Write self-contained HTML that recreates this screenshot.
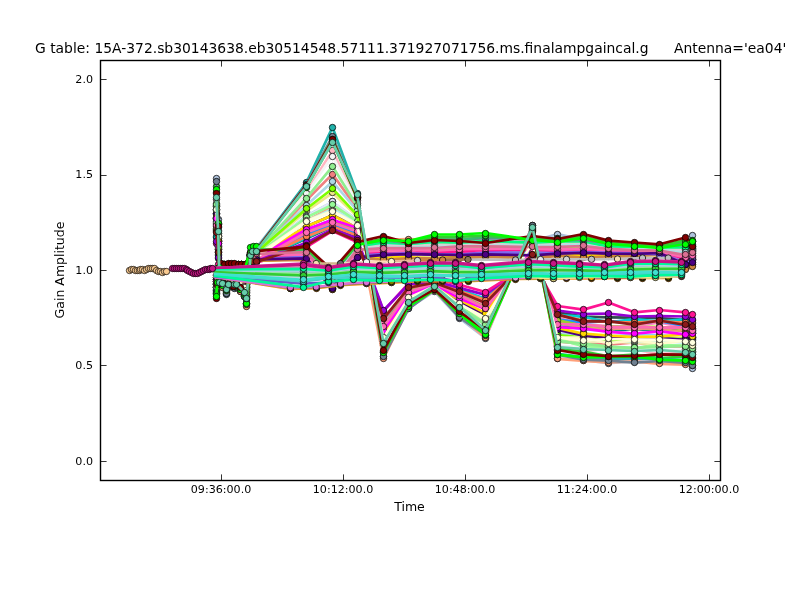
<!DOCTYPE html>
<html><head><meta charset="utf-8"><title>G table plot</title>
<style>html,body{margin:0;padding:0;background:#fff;}body{width:800px;height:600px;overflow:hidden;}svg{display:block;will-change:transform;}text{font-family:"DejaVu Sans","Liberation Sans",sans-serif;fill:#000;}</style>
</head><body>
<svg width="800" height="600" viewBox="0 0 800 600">
<rect x="0" y="0" width="800" height="600" fill="#ffffff"/>
<defs><clipPath id="axclip"><rect x="100.5" y="60.5" width="620" height="420"/></clipPath></defs>
<g clip-path="url(#axclip)">
<path d="M216.3 243.7 L218.2 264.2 L219.6 278.0 L222.7 272.0 L226.7 271.2 L228.9 271.2 L233.7 271.7 L236.3 272.2 L240.4 272.2 L244.8 271.6 L246.5 272.7 L250.6 261.1 L252.5 261.2 L256.5 262.7 L306.4 247.2 L332.5 230.9 L357.0 242.0 L383.5 311.1 L408.5 283.5 L434.4 279.1" stroke="#ff1493" stroke-width="2.7" fill="none" stroke-linejoin="round"/><g fill="#ff1493" stroke="#000" stroke-width="0.75"><circle cx="216.5" cy="243.5" r="3.2"/><circle cx="218.5" cy="264.5" r="3.2"/><circle cx="219.5" cy="277.5" r="3.2"/><circle cx="222.5" cy="271.5" r="3.2"/><circle cx="226.5" cy="271.5" r="3.2"/><circle cx="228.5" cy="271.5" r="3.2"/><circle cx="233.5" cy="271.5" r="3.2"/><circle cx="236.5" cy="272.5" r="3.2"/><circle cx="240.5" cy="272.5" r="3.2"/><circle cx="244.5" cy="271.5" r="3.2"/><circle cx="246.5" cy="272.5" r="3.2"/><circle cx="250.5" cy="261.5" r="3.2"/><circle cx="252.5" cy="261.5" r="3.2"/><circle cx="256.5" cy="262.5" r="3.2"/><circle cx="306.5" cy="247.5" r="3.2"/><circle cx="332.5" cy="230.5" r="3.2"/><circle cx="357.5" cy="242.5" r="3.2"/><circle cx="383.5" cy="311.5" r="3.2"/><circle cx="408.5" cy="283.5" r="3.2"/><circle cx="434.5" cy="279.5" r="3.2"/></g><path d="M216.3 199.7 L218.2 233.8 L219.6 280.4 L222.7 282.2 L226.5 288.4 L228.7 282.6 L233.8 283.5 L236.4 282.1 L240.2 287.7 L244.2 292.3 L246.4 297.3 L250.6 255.6 L252.5 249.8 L256.5 249.9 L306.4 191.8 L332.5 150.6 L357.0 200.6 L383.5 345.8 L408.5 302.6 L434.4 289.0 L459.4 308.1 L485.5 329.3 L532.5 236.0 L557.6 346.5 L583.4 350.8 L608.5 348.7 L634.4 349.3 L659.4 354.0 L685.5 352.5 L692.4 354.4" stroke="#ffb6c1" stroke-width="2.7" fill="none" stroke-linejoin="round"/><g fill="#ffb6c1" stroke="#000" stroke-width="0.75"><circle cx="216.5" cy="199.5" r="3.2"/><circle cx="218.5" cy="233.5" r="3.2"/><circle cx="219.5" cy="280.5" r="3.2"/><circle cx="222.5" cy="282.5" r="3.2"/><circle cx="226.5" cy="288.5" r="3.2"/><circle cx="228.5" cy="282.5" r="3.2"/><circle cx="233.5" cy="283.5" r="3.2"/><circle cx="236.5" cy="282.5" r="3.2"/><circle cx="240.5" cy="287.5" r="3.2"/><circle cx="244.5" cy="292.5" r="3.2"/><circle cx="246.5" cy="297.5" r="3.2"/><circle cx="250.5" cy="255.5" r="3.2"/><circle cx="252.5" cy="249.5" r="3.2"/><circle cx="256.5" cy="249.5" r="3.2"/><circle cx="306.5" cy="191.5" r="3.2"/><circle cx="332.5" cy="150.5" r="3.2"/><circle cx="357.5" cy="200.5" r="3.2"/><circle cx="383.5" cy="345.5" r="3.2"/><circle cx="408.5" cy="302.5" r="3.2"/><circle cx="434.5" cy="289.5" r="3.2"/><circle cx="459.5" cy="308.5" r="3.2"/><circle cx="485.5" cy="329.5" r="3.2"/><circle cx="532.5" cy="236.5" r="3.2"/><circle cx="557.5" cy="346.5" r="3.2"/><circle cx="583.5" cy="350.5" r="3.2"/><circle cx="608.5" cy="348.5" r="3.2"/><circle cx="634.5" cy="349.5" r="3.2"/><circle cx="659.5" cy="354.5" r="3.2"/><circle cx="685.5" cy="352.5" r="3.2"/><circle cx="692.5" cy="354.5" r="3.2"/></g><path d="M216.3 186.0 L218.2 224.5 L219.6 281.5 L222.1 283.8 L226.7 291.1 L228.3 284.7 L234.1 284.7 L236.4 283.6 L240.2 288.7 L244.9 294.4 L246.3 299.6 L250.6 255.0 L252.5 249.5 L256.5 248.3 L306.4 187.4 L332.5 141.8 L357.0 197.4 L383.5 351.5 L408.5 305.5 L434.4 289.5 L459.4 312.8 L485.5 332.3 L532.5 229.1 L557.6 349.0 L583.4 351.6 L608.5 356.3 L634.4 354.7 L659.4 358.2 L685.5 356.7 L692.4 358.9" stroke="#32cd32" stroke-width="2.7" fill="none" stroke-linejoin="round"/><g fill="#32cd32" stroke="#000" stroke-width="0.75"><circle cx="216.5" cy="186.5" r="3.2"/><circle cx="218.5" cy="224.5" r="3.2"/><circle cx="219.5" cy="281.5" r="3.2"/><circle cx="222.5" cy="283.5" r="3.2"/><circle cx="226.5" cy="291.5" r="3.2"/><circle cx="228.5" cy="284.5" r="3.2"/><circle cx="234.5" cy="284.5" r="3.2"/><circle cx="236.5" cy="283.5" r="3.2"/><circle cx="240.5" cy="288.5" r="3.2"/><circle cx="244.5" cy="294.5" r="3.2"/><circle cx="246.5" cy="299.5" r="3.2"/><circle cx="250.5" cy="255.5" r="3.2"/><circle cx="252.5" cy="249.5" r="3.2"/><circle cx="256.5" cy="248.5" r="3.2"/><circle cx="306.5" cy="187.5" r="3.2"/><circle cx="332.5" cy="141.5" r="3.2"/><circle cx="357.5" cy="197.5" r="3.2"/><circle cx="383.5" cy="351.5" r="3.2"/><circle cx="408.5" cy="305.5" r="3.2"/><circle cx="434.5" cy="289.5" r="3.2"/><circle cx="459.5" cy="312.5" r="3.2"/><circle cx="485.5" cy="332.5" r="3.2"/><circle cx="532.5" cy="229.5" r="3.2"/><circle cx="557.5" cy="349.5" r="3.2"/><circle cx="583.5" cy="351.5" r="3.2"/><circle cx="608.5" cy="356.5" r="3.2"/><circle cx="634.5" cy="354.5" r="3.2"/><circle cx="659.5" cy="358.5" r="3.2"/><circle cx="685.5" cy="356.5" r="3.2"/><circle cx="692.5" cy="358.5" r="3.2"/></g><path d="M216.3 217.9 L218.2 241.5 L219.6 280.2 L222.9 280.3 L226.4 281.9 L228.7 280.1 L233.8 278.7 L236.7 280.9 L240.4 280.3 L244.2 284.3 L246.4 288.2 L250.6 259.1 L252.5 253.7 L256.5 253.3 L306.4 211.2 L332.5 192.9 L357.0 216.4 L383.5 334.3 L408.5 297.8 L434.4 285.5 L459.4 302.9 L485.5 315.6 L532.5 243.1 L557.6 331.6 L583.4 333.1 L608.5 338.0 L634.4 335.7 L659.4 335.4 L685.5 337.6 L692.4 338.8" stroke="#f0e68c" stroke-width="2.7" fill="none" stroke-linejoin="round"/><g fill="#f0e68c" stroke="#000" stroke-width="0.75"><circle cx="216.5" cy="217.5" r="3.2"/><circle cx="218.5" cy="241.5" r="3.2"/><circle cx="219.5" cy="280.5" r="3.2"/><circle cx="222.5" cy="280.5" r="3.2"/><circle cx="226.5" cy="281.5" r="3.2"/><circle cx="228.5" cy="280.5" r="3.2"/><circle cx="233.5" cy="278.5" r="3.2"/><circle cx="236.5" cy="280.5" r="3.2"/><circle cx="240.5" cy="280.5" r="3.2"/><circle cx="244.5" cy="284.5" r="3.2"/><circle cx="246.5" cy="288.5" r="3.2"/><circle cx="250.5" cy="259.5" r="3.2"/><circle cx="252.5" cy="253.5" r="3.2"/><circle cx="256.5" cy="253.5" r="3.2"/><circle cx="306.5" cy="211.5" r="3.2"/><circle cx="332.5" cy="192.5" r="3.2"/><circle cx="357.5" cy="216.5" r="3.2"/><circle cx="383.5" cy="334.5" r="3.2"/><circle cx="408.5" cy="297.5" r="3.2"/><circle cx="434.5" cy="285.5" r="3.2"/><circle cx="459.5" cy="302.5" r="3.2"/><circle cx="485.5" cy="315.5" r="3.2"/><circle cx="532.5" cy="243.5" r="3.2"/><circle cx="557.5" cy="331.5" r="3.2"/><circle cx="583.5" cy="333.5" r="3.2"/><circle cx="608.5" cy="337.5" r="3.2"/><circle cx="634.5" cy="335.5" r="3.2"/><circle cx="659.5" cy="335.5" r="3.2"/><circle cx="685.5" cy="337.5" r="3.2"/><circle cx="692.5" cy="338.5" r="3.2"/></g><path d="M216.3 178.2 L218.2 219.4 L219.6 283.8 L222.1 285.4 L226.6 294.9 L229.0 285.9 L233.7 287.1 L236.2 286.9 L240.9 291.8 L244.6 296.1 L246.5 303.5 L250.6 254.1 L252.5 248.3 L256.5 247.6 L306.4 184.9 L332.5 137.3 L357.0 196.8 L383.5 356.6 L408.5 308.0 L434.4 291.3 L459.4 318.1 L485.5 338.2 L532.5 225.9 L557.6 358.2 L583.4 360.1 L608.5 363.1 L634.4 361.5 L659.4 361.9 L685.5 361.7 L692.4 368.2" stroke="#b0c4de" stroke-width="2.7" fill="none" stroke-linejoin="round"/><g fill="#b0c4de" stroke="#000" stroke-width="0.75"><circle cx="216.5" cy="178.5" r="3.2"/><circle cx="218.5" cy="219.5" r="3.2"/><circle cx="219.5" cy="283.5" r="3.2"/><circle cx="222.5" cy="285.5" r="3.2"/><circle cx="226.5" cy="294.5" r="3.2"/><circle cx="228.5" cy="285.5" r="3.2"/><circle cx="233.5" cy="287.5" r="3.2"/><circle cx="236.5" cy="286.5" r="3.2"/><circle cx="240.5" cy="291.5" r="3.2"/><circle cx="244.5" cy="296.5" r="3.2"/><circle cx="246.5" cy="303.5" r="3.2"/><circle cx="250.5" cy="254.5" r="3.2"/><circle cx="252.5" cy="248.5" r="3.2"/><circle cx="256.5" cy="247.5" r="3.2"/><circle cx="306.5" cy="184.5" r="3.2"/><circle cx="332.5" cy="137.5" r="3.2"/><circle cx="357.5" cy="196.5" r="3.2"/><circle cx="383.5" cy="356.5" r="3.2"/><circle cx="408.5" cy="308.5" r="3.2"/><circle cx="434.5" cy="291.5" r="3.2"/><circle cx="459.5" cy="318.5" r="3.2"/><circle cx="485.5" cy="338.5" r="3.2"/><circle cx="532.5" cy="225.5" r="3.2"/><circle cx="557.5" cy="358.5" r="3.2"/><circle cx="583.5" cy="360.5" r="3.2"/><circle cx="608.5" cy="363.5" r="3.2"/><circle cx="634.5" cy="361.5" r="3.2"/><circle cx="659.5" cy="361.5" r="3.2"/><circle cx="685.5" cy="361.5" r="3.2"/><circle cx="692.5" cy="368.5" r="3.2"/></g><path d="M216.3 221.2 L218.2 249.3 L219.6 279.5 L222.8 276.9 L226.1 279.4 L228.6 277.7 L233.9 278.4 L236.5 278.7 L240.4 278.0 L244.7 280.4 L246.6 284.8 L250.6 259.2 L252.5 258.0 L256.5 257.8 L306.4 231.5 L332.5 219.7 L357.0 228.9 L383.5 326.6 L408.5 294.0 L434.4 282.9 L459.4 295.0 L485.5 310.8 L532.5 250.2 L557.6 322.8 L583.4 327.6 L608.5 331.8 L634.4 331.7 L659.4 328.9 L685.5 330.8 L692.4 333.6" stroke="#cd5c5c" stroke-width="2.7" fill="none" stroke-linejoin="round"/><g fill="#cd5c5c" stroke="#000" stroke-width="0.75"><circle cx="216.5" cy="221.5" r="3.2"/><circle cx="218.5" cy="249.5" r="3.2"/><circle cx="219.5" cy="279.5" r="3.2"/><circle cx="222.5" cy="276.5" r="3.2"/><circle cx="226.5" cy="279.5" r="3.2"/><circle cx="228.5" cy="277.5" r="3.2"/><circle cx="233.5" cy="278.5" r="3.2"/><circle cx="236.5" cy="278.5" r="3.2"/><circle cx="240.5" cy="277.5" r="3.2"/><circle cx="244.5" cy="280.5" r="3.2"/><circle cx="246.5" cy="284.5" r="3.2"/><circle cx="250.5" cy="259.5" r="3.2"/><circle cx="252.5" cy="257.5" r="3.2"/><circle cx="256.5" cy="257.5" r="3.2"/><circle cx="306.5" cy="231.5" r="3.2"/><circle cx="332.5" cy="219.5" r="3.2"/><circle cx="357.5" cy="228.5" r="3.2"/><circle cx="383.5" cy="326.5" r="3.2"/><circle cx="408.5" cy="293.5" r="3.2"/><circle cx="434.5" cy="282.5" r="3.2"/><circle cx="459.5" cy="294.5" r="3.2"/><circle cx="485.5" cy="310.5" r="3.2"/><circle cx="532.5" cy="250.5" r="3.2"/><circle cx="557.5" cy="322.5" r="3.2"/><circle cx="583.5" cy="327.5" r="3.2"/><circle cx="608.5" cy="331.5" r="3.2"/><circle cx="634.5" cy="331.5" r="3.2"/><circle cx="659.5" cy="328.5" r="3.2"/><circle cx="685.5" cy="330.5" r="3.2"/><circle cx="692.5" cy="333.5" r="3.2"/></g><path d="M216.0 287.9 L217.5 280.9 L219.2 268.2 L221.5 265.7 L224.8 266.3 L228.1 265.6 L231.4 266.0 L234.7 266.1 L238.0 265.6 L241.5 265.7 L245.0 266.1 L250.6 256.4 L253.5 254.3 L256.3 253.1 L306.4 251.1 L332.5 279.5 L357.0 248.2 L383.5 246.8 L408.5 247.7 L434.4 246.2 L459.4 243.9 L485.5 242.8 L532.5 244.7 L557.6 244.8 L583.4 243.6 L608.5 246.5 L634.4 247.4 L659.4 249.8 L685.5 250.3 L692.4 249.5" stroke="#e6e6fa" stroke-width="2.7" fill="none" stroke-linejoin="round"/><g fill="#e6e6fa" stroke="#000" stroke-width="0.75"><circle cx="216.5" cy="287.5" r="3.2"/><circle cx="217.5" cy="280.5" r="3.2"/><circle cx="219.5" cy="268.5" r="3.2"/><circle cx="221.5" cy="265.5" r="3.2"/><circle cx="224.5" cy="266.5" r="3.2"/><circle cx="228.5" cy="265.5" r="3.2"/><circle cx="231.5" cy="266.5" r="3.2"/><circle cx="234.5" cy="266.5" r="3.2"/><circle cx="238.5" cy="265.5" r="3.2"/><circle cx="241.5" cy="265.5" r="3.2"/><circle cx="245.5" cy="266.5" r="3.2"/><circle cx="250.5" cy="256.5" r="3.2"/><circle cx="253.5" cy="254.5" r="3.2"/><circle cx="256.5" cy="253.5" r="3.2"/><circle cx="306.5" cy="251.5" r="3.2"/><circle cx="332.5" cy="279.5" r="3.2"/><circle cx="357.5" cy="248.5" r="3.2"/><circle cx="383.5" cy="246.5" r="3.2"/><circle cx="408.5" cy="247.5" r="3.2"/><circle cx="434.5" cy="246.5" r="3.2"/><circle cx="459.5" cy="243.5" r="3.2"/><circle cx="485.5" cy="242.5" r="3.2"/><circle cx="532.5" cy="244.5" r="3.2"/><circle cx="557.5" cy="244.5" r="3.2"/><circle cx="583.5" cy="243.5" r="3.2"/><circle cx="608.5" cy="246.5" r="3.2"/><circle cx="634.5" cy="247.5" r="3.2"/><circle cx="659.5" cy="249.5" r="3.2"/><circle cx="685.5" cy="250.5" r="3.2"/><circle cx="692.5" cy="249.5" r="3.2"/></g><path d="M216.3 226.7 L218.2 249.0 L219.6 276.8 L222.7 275.7 L226.8 279.3 L229.0 277.0 L234.3 276.1 L236.3 277.5 L240.8 277.9 L244.6 280.1 L246.7 282.0 L250.6 258.7 L252.5 259.2 L256.5 259.3 L306.4 231.7 L332.5 222.3 L357.0 230.2 L383.5 325.1 L408.5 293.5 L434.4 282.7 L459.4 296.8 L485.5 308.6 L532.5 251.7 L557.6 321.3 L583.4 325.0 L608.5 327.6 L634.4 326.7 L659.4 326.9 L685.5 331.5 L692.4 333.3" stroke="#adff2f" stroke-width="2.7" fill="none" stroke-linejoin="round"/><g fill="#adff2f" stroke="#000" stroke-width="0.75"><circle cx="216.5" cy="226.5" r="3.2"/><circle cx="218.5" cy="249.5" r="3.2"/><circle cx="219.5" cy="276.5" r="3.2"/><circle cx="222.5" cy="275.5" r="3.2"/><circle cx="226.5" cy="279.5" r="3.2"/><circle cx="228.5" cy="276.5" r="3.2"/><circle cx="234.5" cy="276.5" r="3.2"/><circle cx="236.5" cy="277.5" r="3.2"/><circle cx="240.5" cy="277.5" r="3.2"/><circle cx="244.5" cy="280.5" r="3.2"/><circle cx="246.5" cy="281.5" r="3.2"/><circle cx="250.5" cy="258.5" r="3.2"/><circle cx="252.5" cy="259.5" r="3.2"/><circle cx="256.5" cy="259.5" r="3.2"/><circle cx="306.5" cy="231.5" r="3.2"/><circle cx="332.5" cy="222.5" r="3.2"/><circle cx="357.5" cy="230.5" r="3.2"/><circle cx="383.5" cy="325.5" r="3.2"/><circle cx="408.5" cy="293.5" r="3.2"/><circle cx="434.5" cy="282.5" r="3.2"/><circle cx="459.5" cy="296.5" r="3.2"/><circle cx="485.5" cy="308.5" r="3.2"/><circle cx="532.5" cy="251.5" r="3.2"/><circle cx="557.5" cy="321.5" r="3.2"/><circle cx="583.5" cy="325.5" r="3.2"/><circle cx="608.5" cy="327.5" r="3.2"/><circle cx="634.5" cy="326.5" r="3.2"/><circle cx="659.5" cy="326.5" r="3.2"/><circle cx="685.5" cy="331.5" r="3.2"/><circle cx="692.5" cy="333.5" r="3.2"/></g><path d="M216.0 287.7 L217.5 281.2 L219.2 267.0 L221.5 265.6 L224.8 265.1 L228.1 265.4 L231.4 265.5 L234.7 265.4 L238.0 266.1 L241.5 265.3 L245.0 266.1 L250.6 255.4 L253.5 251.6 L256.3 252.5 L306.4 251.5 L332.5 278.6 L357.0 247.6 L383.5 245.8 L408.5 246.8 L434.4 243.5 L459.4 243.7 L485.5 242.0 L532.5 244.2 L557.6 243.3 L583.4 242.9 L608.5 247.1 L634.4 247.2 L659.4 248.5 L685.5 249.7 L692.4 247.3" stroke="#ffdab9" stroke-width="2.7" fill="none" stroke-linejoin="round"/><g fill="#ffdab9" stroke="#000" stroke-width="0.75"><circle cx="216.5" cy="287.5" r="3.2"/><circle cx="217.5" cy="281.5" r="3.2"/><circle cx="219.5" cy="267.5" r="3.2"/><circle cx="221.5" cy="265.5" r="3.2"/><circle cx="224.5" cy="265.5" r="3.2"/><circle cx="228.5" cy="265.5" r="3.2"/><circle cx="231.5" cy="265.5" r="3.2"/><circle cx="234.5" cy="265.5" r="3.2"/><circle cx="238.5" cy="266.5" r="3.2"/><circle cx="241.5" cy="265.5" r="3.2"/><circle cx="245.5" cy="266.5" r="3.2"/><circle cx="250.5" cy="255.5" r="3.2"/><circle cx="253.5" cy="251.5" r="3.2"/><circle cx="256.5" cy="252.5" r="3.2"/><circle cx="306.5" cy="251.5" r="3.2"/><circle cx="332.5" cy="278.5" r="3.2"/><circle cx="357.5" cy="247.5" r="3.2"/><circle cx="383.5" cy="245.5" r="3.2"/><circle cx="408.5" cy="246.5" r="3.2"/><circle cx="434.5" cy="243.5" r="3.2"/><circle cx="459.5" cy="243.5" r="3.2"/><circle cx="485.5" cy="242.5" r="3.2"/><circle cx="532.5" cy="244.5" r="3.2"/><circle cx="557.5" cy="243.5" r="3.2"/><circle cx="583.5" cy="242.5" r="3.2"/><circle cx="608.5" cy="247.5" r="3.2"/><circle cx="634.5" cy="247.5" r="3.2"/><circle cx="659.5" cy="248.5" r="3.2"/><circle cx="685.5" cy="249.5" r="3.2"/><circle cx="692.5" cy="247.5" r="3.2"/></g><path d="M216.3 219.9 L218.2 246.5 L219.6 280.7 L222.6 276.6 L226.7 281.8 L228.4 278.2 L234.0 277.0 L236.5 277.2 L240.2 279.0 L244.5 280.5 L246.0 285.0 L250.6 261.2 L252.5 258.7 L256.5 259.8 L306.4 228.4 L332.5 218.2 L357.0 228.1 L383.5 330.6 L408.5 293.4 L434.4 284.9 L459.4 298.5 L485.5 309.7 L532.5 247.0 L557.6 326.2 L583.4 328.5 L608.5 333.2 L634.4 333.7 L659.4 333.2 L685.5 332.4 L692.4 332.4" stroke="#00ff7f" stroke-width="2.7" fill="none" stroke-linejoin="round"/><g fill="#00ff7f" stroke="#000" stroke-width="0.75"><circle cx="216.5" cy="219.5" r="3.2"/><circle cx="218.5" cy="246.5" r="3.2"/><circle cx="219.5" cy="280.5" r="3.2"/><circle cx="222.5" cy="276.5" r="3.2"/><circle cx="226.5" cy="281.5" r="3.2"/><circle cx="228.5" cy="278.5" r="3.2"/><circle cx="234.5" cy="277.5" r="3.2"/><circle cx="236.5" cy="277.5" r="3.2"/><circle cx="240.5" cy="279.5" r="3.2"/><circle cx="244.5" cy="280.5" r="3.2"/><circle cx="246.5" cy="284.5" r="3.2"/><circle cx="250.5" cy="261.5" r="3.2"/><circle cx="252.5" cy="258.5" r="3.2"/><circle cx="256.5" cy="259.5" r="3.2"/><circle cx="306.5" cy="228.5" r="3.2"/><circle cx="332.5" cy="218.5" r="3.2"/><circle cx="357.5" cy="228.5" r="3.2"/><circle cx="383.5" cy="330.5" r="3.2"/><circle cx="408.5" cy="293.5" r="3.2"/><circle cx="434.5" cy="284.5" r="3.2"/><circle cx="459.5" cy="298.5" r="3.2"/><circle cx="485.5" cy="309.5" r="3.2"/><circle cx="532.5" cy="247.5" r="3.2"/><circle cx="557.5" cy="326.5" r="3.2"/><circle cx="583.5" cy="328.5" r="3.2"/><circle cx="608.5" cy="333.5" r="3.2"/><circle cx="634.5" cy="333.5" r="3.2"/><circle cx="659.5" cy="333.5" r="3.2"/><circle cx="685.5" cy="332.5" r="3.2"/><circle cx="692.5" cy="332.5" r="3.2"/></g><path d="M216.0 281.6 L217.5 275.1 L219.2 267.5 L221.5 267.0 L224.8 267.4 L228.1 266.2 L231.4 266.4 L234.7 266.2 L238.0 266.5 L241.5 267.1 L245.0 266.5 L250.6 258.2 L253.5 256.7 L256.3 256.5 L306.4 255.5 L332.5 283.3 L357.0 253.0 L383.5 251.4 L408.5 251.7 L434.4 248.9 L459.4 250.0 L485.5 249.6 L532.5 249.5 L557.6 249.0 L583.4 249.4 L608.5 250.8 L634.4 250.2 L659.4 250.8 L685.5 257.6 L692.4 255.4" stroke="#ffe4e1" stroke-width="2.7" fill="none" stroke-linejoin="round"/><g fill="#ffe4e1" stroke="#000" stroke-width="0.75"><circle cx="216.5" cy="281.5" r="3.2"/><circle cx="217.5" cy="275.5" r="3.2"/><circle cx="219.5" cy="267.5" r="3.2"/><circle cx="221.5" cy="267.5" r="3.2"/><circle cx="224.5" cy="267.5" r="3.2"/><circle cx="228.5" cy="266.5" r="3.2"/><circle cx="231.5" cy="266.5" r="3.2"/><circle cx="234.5" cy="266.5" r="3.2"/><circle cx="238.5" cy="266.5" r="3.2"/><circle cx="241.5" cy="267.5" r="3.2"/><circle cx="245.5" cy="266.5" r="3.2"/><circle cx="250.5" cy="258.5" r="3.2"/><circle cx="253.5" cy="256.5" r="3.2"/><circle cx="256.5" cy="256.5" r="3.2"/><circle cx="306.5" cy="255.5" r="3.2"/><circle cx="332.5" cy="283.5" r="3.2"/><circle cx="357.5" cy="252.5" r="3.2"/><circle cx="383.5" cy="251.5" r="3.2"/><circle cx="408.5" cy="251.5" r="3.2"/><circle cx="434.5" cy="248.5" r="3.2"/><circle cx="459.5" cy="250.5" r="3.2"/><circle cx="485.5" cy="249.5" r="3.2"/><circle cx="532.5" cy="249.5" r="3.2"/><circle cx="557.5" cy="249.5" r="3.2"/><circle cx="583.5" cy="249.5" r="3.2"/><circle cx="608.5" cy="250.5" r="3.2"/><circle cx="634.5" cy="250.5" r="3.2"/><circle cx="659.5" cy="250.5" r="3.2"/><circle cx="685.5" cy="257.5" r="3.2"/><circle cx="692.5" cy="255.5" r="3.2"/></g><path d="M216.3 205.7 L218.2 238.5 L219.6 281.7 L222.2 280.5 L226.7 286.4 L228.8 280.8 L233.7 281.2 L236.2 282.9 L240.4 283.0 L245.0 288.4 L246.6 293.6 L250.6 255.5 L252.5 253.3 L256.5 253.1 L306.4 200.3 L332.5 174.1 L357.0 208.2 L383.5 342.2 L408.5 299.5 L434.4 287.2 L459.4 306.4 L485.5 321.5 L532.5 240.5 L557.6 341.4 L583.4 343.8 L608.5 344.7 L634.4 342.5 L659.4 346.4 L685.5 346.3 L692.4 349.8" stroke="#f08080" stroke-width="2.7" fill="none" stroke-linejoin="round"/><g fill="#f08080" stroke="#000" stroke-width="0.75"><circle cx="216.5" cy="205.5" r="3.2"/><circle cx="218.5" cy="238.5" r="3.2"/><circle cx="219.5" cy="281.5" r="3.2"/><circle cx="222.5" cy="280.5" r="3.2"/><circle cx="226.5" cy="286.5" r="3.2"/><circle cx="228.5" cy="280.5" r="3.2"/><circle cx="233.5" cy="281.5" r="3.2"/><circle cx="236.5" cy="282.5" r="3.2"/><circle cx="240.5" cy="282.5" r="3.2"/><circle cx="244.5" cy="288.5" r="3.2"/><circle cx="246.5" cy="293.5" r="3.2"/><circle cx="250.5" cy="255.5" r="3.2"/><circle cx="252.5" cy="253.5" r="3.2"/><circle cx="256.5" cy="253.5" r="3.2"/><circle cx="306.5" cy="200.5" r="3.2"/><circle cx="332.5" cy="174.5" r="3.2"/><circle cx="357.5" cy="208.5" r="3.2"/><circle cx="383.5" cy="342.5" r="3.2"/><circle cx="408.5" cy="299.5" r="3.2"/><circle cx="434.5" cy="287.5" r="3.2"/><circle cx="459.5" cy="306.5" r="3.2"/><circle cx="485.5" cy="321.5" r="3.2"/><circle cx="532.5" cy="240.5" r="3.2"/><circle cx="557.5" cy="341.5" r="3.2"/><circle cx="583.5" cy="343.5" r="3.2"/><circle cx="608.5" cy="344.5" r="3.2"/><circle cx="634.5" cy="342.5" r="3.2"/><circle cx="659.5" cy="346.5" r="3.2"/><circle cx="685.5" cy="346.5" r="3.2"/><circle cx="692.5" cy="349.5" r="3.2"/></g><path d="M216.0 279.2 L217.5 274.4 L219.2 267.2 L221.5 266.8 L224.8 266.8 L228.1 267.0 L231.4 267.4 L234.7 267.3 L238.0 266.8 L241.5 267.5 L245.0 266.7 L250.6 258.0 L253.5 257.8 L256.3 257.7 L306.4 255.7 L332.5 284.4 L357.0 254.0 L383.5 253.6 L408.5 251.6 L434.4 251.8 L459.4 251.9 L485.5 251.0 L532.5 251.2 L557.6 252.2 L583.4 251.2 L608.5 251.4 L634.4 252.9 L659.4 252.2 L685.5 259.8 L692.4 259.1" stroke="#d8bfd8" stroke-width="2.7" fill="none" stroke-linejoin="round"/><g fill="#d8bfd8" stroke="#000" stroke-width="0.75"><circle cx="216.5" cy="279.5" r="3.2"/><circle cx="217.5" cy="274.5" r="3.2"/><circle cx="219.5" cy="267.5" r="3.2"/><circle cx="221.5" cy="266.5" r="3.2"/><circle cx="224.5" cy="266.5" r="3.2"/><circle cx="228.5" cy="266.5" r="3.2"/><circle cx="231.5" cy="267.5" r="3.2"/><circle cx="234.5" cy="267.5" r="3.2"/><circle cx="238.5" cy="266.5" r="3.2"/><circle cx="241.5" cy="267.5" r="3.2"/><circle cx="245.5" cy="266.5" r="3.2"/><circle cx="250.5" cy="257.5" r="3.2"/><circle cx="253.5" cy="257.5" r="3.2"/><circle cx="256.5" cy="257.5" r="3.2"/><circle cx="306.5" cy="255.5" r="3.2"/><circle cx="332.5" cy="284.5" r="3.2"/><circle cx="357.5" cy="254.5" r="3.2"/><circle cx="383.5" cy="253.5" r="3.2"/><circle cx="408.5" cy="251.5" r="3.2"/><circle cx="434.5" cy="251.5" r="3.2"/><circle cx="459.5" cy="251.5" r="3.2"/><circle cx="485.5" cy="251.5" r="3.2"/><circle cx="532.5" cy="251.5" r="3.2"/><circle cx="557.5" cy="252.5" r="3.2"/><circle cx="583.5" cy="251.5" r="3.2"/><circle cx="608.5" cy="251.5" r="3.2"/><circle cx="634.5" cy="252.5" r="3.2"/><circle cx="659.5" cy="252.5" r="3.2"/><circle cx="685.5" cy="259.5" r="3.2"/><circle cx="692.5" cy="259.5" r="3.2"/></g><path d="M216.3 237.2 L218.2 258.5 L219.6 279.0 L222.3 274.3 L226.3 275.5 L228.4 275.0 L234.2 273.2 L236.8 273.2 L240.4 273.7 L244.5 275.9 L246.1 276.7 L250.6 260.2 L252.5 259.6 L256.5 261.4 L306.4 238.5 L332.5 226.5 L357.0 236.8 L383.5 319.7 L408.5 288.8 L434.4 280.7 L459.4 288.8 L485.5 301.0 L532.5 255.9 L557.6 312.4 L583.4 316.7 L608.5 317.3 L634.4 317.6 L659.4 318.2 L685.5 319.8 L692.4 320.4" stroke="#2f4f4f" stroke-width="2.7" fill="none" stroke-linejoin="round"/><g fill="#2f4f4f" stroke="#000" stroke-width="0.75"><circle cx="216.5" cy="237.5" r="3.2"/><circle cx="218.5" cy="258.5" r="3.2"/><circle cx="219.5" cy="278.5" r="3.2"/><circle cx="222.5" cy="274.5" r="3.2"/><circle cx="226.5" cy="275.5" r="3.2"/><circle cx="228.5" cy="275.5" r="3.2"/><circle cx="234.5" cy="273.5" r="3.2"/><circle cx="236.5" cy="273.5" r="3.2"/><circle cx="240.5" cy="273.5" r="3.2"/><circle cx="244.5" cy="275.5" r="3.2"/><circle cx="246.5" cy="276.5" r="3.2"/><circle cx="250.5" cy="260.5" r="3.2"/><circle cx="252.5" cy="259.5" r="3.2"/><circle cx="256.5" cy="261.5" r="3.2"/><circle cx="306.5" cy="238.5" r="3.2"/><circle cx="332.5" cy="226.5" r="3.2"/><circle cx="357.5" cy="236.5" r="3.2"/><circle cx="383.5" cy="319.5" r="3.2"/><circle cx="408.5" cy="288.5" r="3.2"/><circle cx="434.5" cy="280.5" r="3.2"/><circle cx="459.5" cy="288.5" r="3.2"/><circle cx="485.5" cy="301.5" r="3.2"/><circle cx="532.5" cy="255.5" r="3.2"/><circle cx="557.5" cy="312.5" r="3.2"/><circle cx="583.5" cy="316.5" r="3.2"/><circle cx="608.5" cy="317.5" r="3.2"/><circle cx="634.5" cy="317.5" r="3.2"/><circle cx="659.5" cy="318.5" r="3.2"/><circle cx="685.5" cy="319.5" r="3.2"/><circle cx="692.5" cy="320.5" r="3.2"/></g><path d="M216.0 284.5 L217.5 278.6 L219.2 268.1 L221.5 265.6 L224.8 265.6 L228.1 265.8 L231.4 266.0 L234.7 266.1 L238.0 266.4 L241.5 266.2 L245.0 265.5 L250.6 255.9 L253.5 253.8 L256.3 253.6 L306.4 252.5 L332.5 279.5 L357.0 249.6 L383.5 247.9 L408.5 246.8 L434.4 245.9 L459.4 246.1 L485.5 244.8 L532.5 246.0 L557.6 246.4 L583.4 244.5 L608.5 249.2 L634.4 248.4 L659.4 250.6 L685.5 253.0 L692.4 250.4" stroke="#f5f5f5" stroke-width="2.7" fill="none" stroke-linejoin="round"/><g fill="#f5f5f5" stroke="#000" stroke-width="0.75"><circle cx="216.5" cy="284.5" r="3.2"/><circle cx="217.5" cy="278.5" r="3.2"/><circle cx="219.5" cy="268.5" r="3.2"/><circle cx="221.5" cy="265.5" r="3.2"/><circle cx="224.5" cy="265.5" r="3.2"/><circle cx="228.5" cy="265.5" r="3.2"/><circle cx="231.5" cy="266.5" r="3.2"/><circle cx="234.5" cy="266.5" r="3.2"/><circle cx="238.5" cy="266.5" r="3.2"/><circle cx="241.5" cy="266.5" r="3.2"/><circle cx="245.5" cy="265.5" r="3.2"/><circle cx="250.5" cy="255.5" r="3.2"/><circle cx="253.5" cy="253.5" r="3.2"/><circle cx="256.5" cy="253.5" r="3.2"/><circle cx="306.5" cy="252.5" r="3.2"/><circle cx="332.5" cy="279.5" r="3.2"/><circle cx="357.5" cy="249.5" r="3.2"/><circle cx="383.5" cy="247.5" r="3.2"/><circle cx="408.5" cy="246.5" r="3.2"/><circle cx="434.5" cy="245.5" r="3.2"/><circle cx="459.5" cy="246.5" r="3.2"/><circle cx="485.5" cy="244.5" r="3.2"/><circle cx="532.5" cy="245.5" r="3.2"/><circle cx="557.5" cy="246.5" r="3.2"/><circle cx="583.5" cy="244.5" r="3.2"/><circle cx="608.5" cy="249.5" r="3.2"/><circle cx="634.5" cy="248.5" r="3.2"/><circle cx="659.5" cy="250.5" r="3.2"/><circle cx="685.5" cy="253.5" r="3.2"/><circle cx="692.5" cy="250.5" r="3.2"/></g><path d="M216.3 223.6 L218.2 246.8 L219.6 278.9 L222.4 276.4 L226.4 279.4 L228.4 277.5 L234.1 279.1 L236.1 278.3 L240.6 279.8 L244.5 281.8 L246.0 284.8 L250.6 259.5 L252.5 258.5 L256.5 258.8 L306.4 230.7 L332.5 219.6 L357.0 230.2 L383.5 326.5 L408.5 293.7 L434.4 283.4 L459.4 297.7 L485.5 307.1 L532.5 247.2 L557.6 326.7 L583.4 330.2 L608.5 328.5 L634.4 332.8 L659.4 328.7 L685.5 332.2 L692.4 331.1" stroke="#008080" stroke-width="2.7" fill="none" stroke-linejoin="round"/><g fill="#008080" stroke="#000" stroke-width="0.75"><circle cx="216.5" cy="223.5" r="3.2"/><circle cx="218.5" cy="246.5" r="3.2"/><circle cx="219.5" cy="278.5" r="3.2"/><circle cx="222.5" cy="276.5" r="3.2"/><circle cx="226.5" cy="279.5" r="3.2"/><circle cx="228.5" cy="277.5" r="3.2"/><circle cx="234.5" cy="279.5" r="3.2"/><circle cx="236.5" cy="278.5" r="3.2"/><circle cx="240.5" cy="279.5" r="3.2"/><circle cx="244.5" cy="281.5" r="3.2"/><circle cx="246.5" cy="284.5" r="3.2"/><circle cx="250.5" cy="259.5" r="3.2"/><circle cx="252.5" cy="258.5" r="3.2"/><circle cx="256.5" cy="258.5" r="3.2"/><circle cx="306.5" cy="230.5" r="3.2"/><circle cx="332.5" cy="219.5" r="3.2"/><circle cx="357.5" cy="230.5" r="3.2"/><circle cx="383.5" cy="326.5" r="3.2"/><circle cx="408.5" cy="293.5" r="3.2"/><circle cx="434.5" cy="283.5" r="3.2"/><circle cx="459.5" cy="297.5" r="3.2"/><circle cx="485.5" cy="307.5" r="3.2"/><circle cx="532.5" cy="247.5" r="3.2"/><circle cx="557.5" cy="326.5" r="3.2"/><circle cx="583.5" cy="330.5" r="3.2"/><circle cx="608.5" cy="328.5" r="3.2"/><circle cx="634.5" cy="332.5" r="3.2"/><circle cx="659.5" cy="328.5" r="3.2"/><circle cx="685.5" cy="332.5" r="3.2"/><circle cx="692.5" cy="331.5" r="3.2"/></g><path d="M216.0 279.5 L217.5 274.4 L219.2 268.7 L221.5 267.0 L224.8 266.7 L228.1 267.0 L231.4 266.7 L234.7 267.1 L238.0 267.3 L241.5 267.3 L245.0 267.4 L250.6 258.6 L253.5 258.5 L256.3 258.1 L306.4 254.9 L332.5 284.2 L357.0 253.1 L383.5 252.8 L408.5 252.3 L434.4 251.5 L459.4 251.7 L485.5 251.7 L532.5 250.6 L557.6 251.0 L583.4 251.0 L608.5 252.6 L634.4 251.2 L659.4 251.9 L685.5 259.5 L692.4 258.8" stroke="#eee8aa" stroke-width="2.7" fill="none" stroke-linejoin="round"/><g fill="#eee8aa" stroke="#000" stroke-width="0.75"><circle cx="216.5" cy="279.5" r="3.2"/><circle cx="217.5" cy="274.5" r="3.2"/><circle cx="219.5" cy="268.5" r="3.2"/><circle cx="221.5" cy="266.5" r="3.2"/><circle cx="224.5" cy="266.5" r="3.2"/><circle cx="228.5" cy="266.5" r="3.2"/><circle cx="231.5" cy="266.5" r="3.2"/><circle cx="234.5" cy="267.5" r="3.2"/><circle cx="238.5" cy="267.5" r="3.2"/><circle cx="241.5" cy="267.5" r="3.2"/><circle cx="245.5" cy="267.5" r="3.2"/><circle cx="250.5" cy="258.5" r="3.2"/><circle cx="253.5" cy="258.5" r="3.2"/><circle cx="256.5" cy="258.5" r="3.2"/><circle cx="306.5" cy="254.5" r="3.2"/><circle cx="332.5" cy="284.5" r="3.2"/><circle cx="357.5" cy="253.5" r="3.2"/><circle cx="383.5" cy="252.5" r="3.2"/><circle cx="408.5" cy="252.5" r="3.2"/><circle cx="434.5" cy="251.5" r="3.2"/><circle cx="459.5" cy="251.5" r="3.2"/><circle cx="485.5" cy="251.5" r="3.2"/><circle cx="532.5" cy="250.5" r="3.2"/><circle cx="557.5" cy="251.5" r="3.2"/><circle cx="583.5" cy="250.5" r="3.2"/><circle cx="608.5" cy="252.5" r="3.2"/><circle cx="634.5" cy="251.5" r="3.2"/><circle cx="659.5" cy="251.5" r="3.2"/><circle cx="685.5" cy="259.5" r="3.2"/><circle cx="692.5" cy="258.5" r="3.2"/></g><path d="M216.3 224.7 L218.2 249.3 L219.6 277.5 L222.6 277.2 L226.2 277.9 L228.2 275.7 L233.8 276.5 L236.8 277.9 L240.3 277.4 L244.6 282.1 L246.3 282.8 L250.6 260.1 L252.5 257.9 L256.5 259.9 L306.4 232.0 L332.5 221.1 L357.0 231.1 L383.5 327.8 L408.5 293.1 L434.4 283.5 L459.4 296.7 L485.5 307.3 L532.5 248.5 L557.6 322.0 L583.4 328.3 L608.5 329.1 L634.4 328.1 L659.4 329.6 L685.5 331.3 L692.4 330.1" stroke="#e9967a" stroke-width="2.7" fill="none" stroke-linejoin="round"/><g fill="#e9967a" stroke="#000" stroke-width="0.75"><circle cx="216.5" cy="224.5" r="3.2"/><circle cx="218.5" cy="249.5" r="3.2"/><circle cx="219.5" cy="277.5" r="3.2"/><circle cx="222.5" cy="277.5" r="3.2"/><circle cx="226.5" cy="277.5" r="3.2"/><circle cx="228.5" cy="275.5" r="3.2"/><circle cx="233.5" cy="276.5" r="3.2"/><circle cx="236.5" cy="277.5" r="3.2"/><circle cx="240.5" cy="277.5" r="3.2"/><circle cx="244.5" cy="282.5" r="3.2"/><circle cx="246.5" cy="282.5" r="3.2"/><circle cx="250.5" cy="260.5" r="3.2"/><circle cx="252.5" cy="257.5" r="3.2"/><circle cx="256.5" cy="259.5" r="3.2"/><circle cx="306.5" cy="232.5" r="3.2"/><circle cx="332.5" cy="221.5" r="3.2"/><circle cx="357.5" cy="231.5" r="3.2"/><circle cx="383.5" cy="327.5" r="3.2"/><circle cx="408.5" cy="293.5" r="3.2"/><circle cx="434.5" cy="283.5" r="3.2"/><circle cx="459.5" cy="296.5" r="3.2"/><circle cx="485.5" cy="307.5" r="3.2"/><circle cx="532.5" cy="248.5" r="3.2"/><circle cx="557.5" cy="322.5" r="3.2"/><circle cx="583.5" cy="328.5" r="3.2"/><circle cx="608.5" cy="329.5" r="3.2"/><circle cx="634.5" cy="328.5" r="3.2"/><circle cx="659.5" cy="329.5" r="3.2"/><circle cx="685.5" cy="331.5" r="3.2"/><circle cx="692.5" cy="330.5" r="3.2"/></g><path d="M216.0 281.5 L217.5 276.7 L219.2 267.9 L221.5 266.8 L224.8 267.0 L228.1 266.9 L231.4 267.1 L234.7 267.3 L238.0 266.9 L241.5 267.4 L245.0 266.4 L250.6 258.0 L253.5 258.5 L256.3 257.1 L306.4 255.7 L332.5 283.8 L357.0 253.8 L383.5 251.4 L408.5 252.5 L434.4 250.3 L459.4 251.0 L485.5 249.4 L532.5 251.2 L557.6 249.4 L583.4 249.4 L608.5 251.7 L634.4 252.4 L659.4 252.4 L685.5 258.3 L692.4 256.5" stroke="#fffacd" stroke-width="2.7" fill="none" stroke-linejoin="round"/><g fill="#fffacd" stroke="#000" stroke-width="0.75"><circle cx="216.5" cy="281.5" r="3.2"/><circle cx="217.5" cy="276.5" r="3.2"/><circle cx="219.5" cy="267.5" r="3.2"/><circle cx="221.5" cy="266.5" r="3.2"/><circle cx="224.5" cy="267.5" r="3.2"/><circle cx="228.5" cy="266.5" r="3.2"/><circle cx="231.5" cy="267.5" r="3.2"/><circle cx="234.5" cy="267.5" r="3.2"/><circle cx="238.5" cy="266.5" r="3.2"/><circle cx="241.5" cy="267.5" r="3.2"/><circle cx="245.5" cy="266.5" r="3.2"/><circle cx="250.5" cy="258.5" r="3.2"/><circle cx="253.5" cy="258.5" r="3.2"/><circle cx="256.5" cy="257.5" r="3.2"/><circle cx="306.5" cy="255.5" r="3.2"/><circle cx="332.5" cy="283.5" r="3.2"/><circle cx="357.5" cy="253.5" r="3.2"/><circle cx="383.5" cy="251.5" r="3.2"/><circle cx="408.5" cy="252.5" r="3.2"/><circle cx="434.5" cy="250.5" r="3.2"/><circle cx="459.5" cy="251.5" r="3.2"/><circle cx="485.5" cy="249.5" r="3.2"/><circle cx="532.5" cy="251.5" r="3.2"/><circle cx="557.5" cy="249.5" r="3.2"/><circle cx="583.5" cy="249.5" r="3.2"/><circle cx="608.5" cy="251.5" r="3.2"/><circle cx="634.5" cy="252.5" r="3.2"/><circle cx="659.5" cy="252.5" r="3.2"/><circle cx="685.5" cy="258.5" r="3.2"/><circle cx="692.5" cy="256.5" r="3.2"/></g><path d="M216.3 209.0 L218.2 227.4 L219.6 283.4 L222.9 284.1 L226.4 293.0 L228.9 284.9 L234.1 285.3 L236.7 286.4 L240.4 290.3 L244.3 295.6 L246.1 303.3 L250.6 252.8 L252.5 248.9 L256.5 249.1 L306.4 182.7 L332.5 127.3 L357.0 193.4 L383.5 352.7 L408.5 306.4 L434.4 288.9 L459.4 316.6 L485.5 335.3 L532.5 228.5 L557.6 353.9 L583.4 357.2 L608.5 359.1 L634.4 358.3 L659.4 358.8 L685.5 360.0 L692.4 360.6" stroke="#20b2aa" stroke-width="2.7" fill="none" stroke-linejoin="round"/><g fill="#20b2aa" stroke="#000" stroke-width="0.75"><circle cx="216.5" cy="209.5" r="3.2"/><circle cx="218.5" cy="227.5" r="3.2"/><circle cx="219.5" cy="283.5" r="3.2"/><circle cx="222.5" cy="284.5" r="3.2"/><circle cx="226.5" cy="293.5" r="3.2"/><circle cx="228.5" cy="284.5" r="3.2"/><circle cx="234.5" cy="285.5" r="3.2"/><circle cx="236.5" cy="286.5" r="3.2"/><circle cx="240.5" cy="290.5" r="3.2"/><circle cx="244.5" cy="295.5" r="3.2"/><circle cx="246.5" cy="303.5" r="3.2"/><circle cx="250.5" cy="252.5" r="3.2"/><circle cx="252.5" cy="248.5" r="3.2"/><circle cx="256.5" cy="249.5" r="3.2"/><circle cx="306.5" cy="182.5" r="3.2"/><circle cx="332.5" cy="127.5" r="3.2"/><circle cx="357.5" cy="193.5" r="3.2"/><circle cx="383.5" cy="352.5" r="3.2"/><circle cx="408.5" cy="306.5" r="3.2"/><circle cx="434.5" cy="288.5" r="3.2"/><circle cx="459.5" cy="316.5" r="3.2"/><circle cx="485.5" cy="335.5" r="3.2"/><circle cx="532.5" cy="228.5" r="3.2"/><circle cx="557.5" cy="353.5" r="3.2"/><circle cx="583.5" cy="357.5" r="3.2"/><circle cx="608.5" cy="359.5" r="3.2"/><circle cx="634.5" cy="358.5" r="3.2"/><circle cx="659.5" cy="358.5" r="3.2"/><circle cx="685.5" cy="359.5" r="3.2"/><circle cx="692.5" cy="360.5" r="3.2"/></g><path d="M216.0 287.2 L217.5 277.7 L219.2 268.6 L221.5 265.9 L224.8 266.2 L228.1 266.0 L231.4 266.5 L234.7 265.8 L238.0 265.9 L241.5 265.8 L245.0 266.3 L250.6 255.9 L253.5 253.1 L256.3 253.6 L306.4 252.9 L332.5 278.2 L357.0 249.4 L383.5 245.5 L408.5 248.0 L434.4 246.7 L459.4 244.9 L485.5 243.0 L532.5 244.8 L557.6 243.9 L583.4 244.3 L608.5 247.9 L634.4 247.3 L659.4 248.9 L685.5 250.3 L692.4 248.7" stroke="#e0ffff" stroke-width="2.7" fill="none" stroke-linejoin="round"/><g fill="#e0ffff" stroke="#000" stroke-width="0.75"><circle cx="216.5" cy="287.5" r="3.2"/><circle cx="217.5" cy="277.5" r="3.2"/><circle cx="219.5" cy="268.5" r="3.2"/><circle cx="221.5" cy="265.5" r="3.2"/><circle cx="224.5" cy="266.5" r="3.2"/><circle cx="228.5" cy="265.5" r="3.2"/><circle cx="231.5" cy="266.5" r="3.2"/><circle cx="234.5" cy="265.5" r="3.2"/><circle cx="238.5" cy="265.5" r="3.2"/><circle cx="241.5" cy="265.5" r="3.2"/><circle cx="245.5" cy="266.5" r="3.2"/><circle cx="250.5" cy="255.5" r="3.2"/><circle cx="253.5" cy="253.5" r="3.2"/><circle cx="256.5" cy="253.5" r="3.2"/><circle cx="306.5" cy="252.5" r="3.2"/><circle cx="332.5" cy="278.5" r="3.2"/><circle cx="357.5" cy="249.5" r="3.2"/><circle cx="383.5" cy="245.5" r="3.2"/><circle cx="408.5" cy="247.5" r="3.2"/><circle cx="434.5" cy="246.5" r="3.2"/><circle cx="459.5" cy="244.5" r="3.2"/><circle cx="485.5" cy="243.5" r="3.2"/><circle cx="532.5" cy="244.5" r="3.2"/><circle cx="557.5" cy="243.5" r="3.2"/><circle cx="583.5" cy="244.5" r="3.2"/><circle cx="608.5" cy="247.5" r="3.2"/><circle cx="634.5" cy="247.5" r="3.2"/><circle cx="659.5" cy="248.5" r="3.2"/><circle cx="685.5" cy="250.5" r="3.2"/><circle cx="692.5" cy="248.5" r="3.2"/></g><path d="M216.3 206.1 L218.2 235.3 L219.6 280.8 L222.6 281.0 L226.3 288.3 L228.6 282.6 L234.3 282.7 L236.7 282.9 L240.2 285.1 L244.9 291.9 L246.0 296.8 L250.6 258.3 L252.5 257.0 L256.5 255.0 L306.4 216.0 L332.5 202.0 L357.0 219.9 L383.5 344.9 L408.5 301.8 L434.4 287.7 L459.4 308.4 L485.5 327.6 L532.5 235.4 L557.6 345.9 L583.4 348.5 L608.5 349.6 L634.4 350.9 L659.4 349.7 L685.5 351.7 L692.4 351.9" stroke="#b0e0e6" stroke-width="2.7" fill="none" stroke-linejoin="round"/><g fill="#b0e0e6" stroke="#000" stroke-width="0.75"><circle cx="216.5" cy="206.5" r="3.2"/><circle cx="218.5" cy="235.5" r="3.2"/><circle cx="219.5" cy="280.5" r="3.2"/><circle cx="222.5" cy="281.5" r="3.2"/><circle cx="226.5" cy="288.5" r="3.2"/><circle cx="228.5" cy="282.5" r="3.2"/><circle cx="234.5" cy="282.5" r="3.2"/><circle cx="236.5" cy="282.5" r="3.2"/><circle cx="240.5" cy="285.5" r="3.2"/><circle cx="244.5" cy="291.5" r="3.2"/><circle cx="246.5" cy="296.5" r="3.2"/><circle cx="250.5" cy="258.5" r="3.2"/><circle cx="252.5" cy="256.5" r="3.2"/><circle cx="256.5" cy="255.5" r="3.2"/><circle cx="306.5" cy="215.5" r="3.2"/><circle cx="332.5" cy="201.5" r="3.2"/><circle cx="357.5" cy="219.5" r="3.2"/><circle cx="383.5" cy="344.5" r="3.2"/><circle cx="408.5" cy="301.5" r="3.2"/><circle cx="434.5" cy="287.5" r="3.2"/><circle cx="459.5" cy="308.5" r="3.2"/><circle cx="485.5" cy="327.5" r="3.2"/><circle cx="532.5" cy="235.5" r="3.2"/><circle cx="557.5" cy="345.5" r="3.2"/><circle cx="583.5" cy="348.5" r="3.2"/><circle cx="608.5" cy="349.5" r="3.2"/><circle cx="634.5" cy="350.5" r="3.2"/><circle cx="659.5" cy="349.5" r="3.2"/><circle cx="685.5" cy="351.5" r="3.2"/><circle cx="692.5" cy="351.5" r="3.2"/></g><path d="M216.0 275.5 L217.5 275.8 L219.2 268.3 L221.5 268.2 L224.8 267.3 L228.1 268.3 L231.4 267.7 L234.7 267.5 L238.0 267.4 L241.5 268.2 L245.0 268.4 L250.6 261.4 L253.5 260.7 L256.3 260.3 L306.4 256.8 L332.5 288.9 L357.0 257.7 L383.5 257.3 L408.5 256.1 L434.4 255.6 L459.4 254.7 L485.5 254.5 L532.5 255.4 L557.6 253.9 L583.4 254.6 L608.5 253.7 L634.4 255.0 L659.4 254.9 L685.5 264.2 L692.4 262.9" stroke="#fafad2" stroke-width="2.7" fill="none" stroke-linejoin="round"/><g fill="#fafad2" stroke="#000" stroke-width="0.75"><circle cx="216.5" cy="275.5" r="3.2"/><circle cx="217.5" cy="275.5" r="3.2"/><circle cx="219.5" cy="268.5" r="3.2"/><circle cx="221.5" cy="268.5" r="3.2"/><circle cx="224.5" cy="267.5" r="3.2"/><circle cx="228.5" cy="268.5" r="3.2"/><circle cx="231.5" cy="267.5" r="3.2"/><circle cx="234.5" cy="267.5" r="3.2"/><circle cx="238.5" cy="267.5" r="3.2"/><circle cx="241.5" cy="268.5" r="3.2"/><circle cx="245.5" cy="268.5" r="3.2"/><circle cx="250.5" cy="261.5" r="3.2"/><circle cx="253.5" cy="260.5" r="3.2"/><circle cx="256.5" cy="260.5" r="3.2"/><circle cx="306.5" cy="256.5" r="3.2"/><circle cx="332.5" cy="288.5" r="3.2"/><circle cx="357.5" cy="257.5" r="3.2"/><circle cx="383.5" cy="257.5" r="3.2"/><circle cx="408.5" cy="256.5" r="3.2"/><circle cx="434.5" cy="255.5" r="3.2"/><circle cx="459.5" cy="254.5" r="3.2"/><circle cx="485.5" cy="254.5" r="3.2"/><circle cx="532.5" cy="255.5" r="3.2"/><circle cx="557.5" cy="253.5" r="3.2"/><circle cx="583.5" cy="254.5" r="3.2"/><circle cx="608.5" cy="253.5" r="3.2"/><circle cx="634.5" cy="254.5" r="3.2"/><circle cx="659.5" cy="254.5" r="3.2"/><circle cx="685.5" cy="264.5" r="3.2"/><circle cx="692.5" cy="262.5" r="3.2"/></g><path d="M216.3 218.3 L218.2 243.3 L219.6 278.0 L222.2 278.7 L226.7 281.3 L228.3 278.0 L234.1 278.9 L236.8 279.1 L240.2 281.4 L244.6 284.7 L246.0 287.5 L250.6 258.6 L252.5 257.1 L256.5 258.2 L306.4 227.0 L332.5 215.5 L357.0 225.6 L383.5 332.0 L408.5 295.5 L434.4 285.8 L459.4 301.7 L485.5 313.0 L532.5 244.7 L557.6 330.7 L583.4 335.6 L608.5 336.2 L634.4 333.6 L659.4 333.3 L685.5 334.7 L692.4 339.3" stroke="#f5f58c" stroke-width="2.7" fill="none" stroke-linejoin="round"/><g fill="#f5f58c" stroke="#000" stroke-width="0.75"><circle cx="216.5" cy="218.5" r="3.2"/><circle cx="218.5" cy="243.5" r="3.2"/><circle cx="219.5" cy="277.5" r="3.2"/><circle cx="222.5" cy="278.5" r="3.2"/><circle cx="226.5" cy="281.5" r="3.2"/><circle cx="228.5" cy="277.5" r="3.2"/><circle cx="234.5" cy="278.5" r="3.2"/><circle cx="236.5" cy="279.5" r="3.2"/><circle cx="240.5" cy="281.5" r="3.2"/><circle cx="244.5" cy="284.5" r="3.2"/><circle cx="246.5" cy="287.5" r="3.2"/><circle cx="250.5" cy="258.5" r="3.2"/><circle cx="252.5" cy="257.5" r="3.2"/><circle cx="256.5" cy="258.5" r="3.2"/><circle cx="306.5" cy="226.5" r="3.2"/><circle cx="332.5" cy="215.5" r="3.2"/><circle cx="357.5" cy="225.5" r="3.2"/><circle cx="383.5" cy="331.5" r="3.2"/><circle cx="408.5" cy="295.5" r="3.2"/><circle cx="434.5" cy="285.5" r="3.2"/><circle cx="459.5" cy="301.5" r="3.2"/><circle cx="485.5" cy="312.5" r="3.2"/><circle cx="532.5" cy="244.5" r="3.2"/><circle cx="557.5" cy="330.5" r="3.2"/><circle cx="583.5" cy="335.5" r="3.2"/><circle cx="608.5" cy="336.5" r="3.2"/><circle cx="634.5" cy="333.5" r="3.2"/><circle cx="659.5" cy="333.5" r="3.2"/><circle cx="685.5" cy="334.5" r="3.2"/><circle cx="692.5" cy="339.5" r="3.2"/></g><path d="M216.0 279.5 L217.5 276.4 L219.2 268.6 L221.5 266.9 L224.8 267.3 L228.1 267.8 L231.4 267.6 L234.7 267.3 L238.0 267.1 L241.5 266.9 L245.0 267.7 L250.6 260.5 L253.5 259.4 L256.3 258.5 L306.4 257.3 L332.5 284.7 L357.0 255.0 L383.5 254.8 L408.5 253.7 L434.4 254.1 L459.4 253.2 L485.5 252.0 L532.5 251.0 L557.6 250.9 L583.4 251.1 L608.5 251.8 L634.4 252.0 L659.4 252.3 L685.5 261.3 L692.4 259.3" stroke="#dda0dd" stroke-width="2.7" fill="none" stroke-linejoin="round"/><g fill="#dda0dd" stroke="#000" stroke-width="0.75"><circle cx="216.5" cy="279.5" r="3.2"/><circle cx="217.5" cy="276.5" r="3.2"/><circle cx="219.5" cy="268.5" r="3.2"/><circle cx="221.5" cy="266.5" r="3.2"/><circle cx="224.5" cy="267.5" r="3.2"/><circle cx="228.5" cy="267.5" r="3.2"/><circle cx="231.5" cy="267.5" r="3.2"/><circle cx="234.5" cy="267.5" r="3.2"/><circle cx="238.5" cy="267.5" r="3.2"/><circle cx="241.5" cy="266.5" r="3.2"/><circle cx="245.5" cy="267.5" r="3.2"/><circle cx="250.5" cy="260.5" r="3.2"/><circle cx="253.5" cy="259.5" r="3.2"/><circle cx="256.5" cy="258.5" r="3.2"/><circle cx="306.5" cy="257.5" r="3.2"/><circle cx="332.5" cy="284.5" r="3.2"/><circle cx="357.5" cy="254.5" r="3.2"/><circle cx="383.5" cy="254.5" r="3.2"/><circle cx="408.5" cy="253.5" r="3.2"/><circle cx="434.5" cy="254.5" r="3.2"/><circle cx="459.5" cy="253.5" r="3.2"/><circle cx="485.5" cy="252.5" r="3.2"/><circle cx="532.5" cy="251.5" r="3.2"/><circle cx="557.5" cy="250.5" r="3.2"/><circle cx="583.5" cy="251.5" r="3.2"/><circle cx="608.5" cy="251.5" r="3.2"/><circle cx="634.5" cy="252.5" r="3.2"/><circle cx="659.5" cy="252.5" r="3.2"/><circle cx="685.5" cy="261.5" r="3.2"/><circle cx="692.5" cy="259.5" r="3.2"/></g><path d="M216.3 218.4 L218.2 243.3 L219.6 278.0 L222.2 278.6 L226.1 282.1 L228.2 277.8 L234.2 278.9 L236.1 277.6 L240.4 281.9 L244.5 284.3 L246.7 287.8 L250.6 257.2 L252.5 255.1 L256.5 254.5 L306.4 217.0 L332.5 201.9 L357.0 220.6 L383.5 332.0 L408.5 295.7 L434.4 284.9 L459.4 298.8 L485.5 314.2 L532.5 244.9 L557.6 331.8 L583.4 332.4 L608.5 333.2 L634.4 333.2 L659.4 333.3 L685.5 335.1 L692.4 337.7" stroke="#e6e6fa" stroke-width="2.7" fill="none" stroke-linejoin="round"/><g fill="#e6e6fa" stroke="#000" stroke-width="0.75"><circle cx="216.5" cy="218.5" r="3.2"/><circle cx="218.5" cy="243.5" r="3.2"/><circle cx="219.5" cy="278.5" r="3.2"/><circle cx="222.5" cy="278.5" r="3.2"/><circle cx="226.5" cy="282.5" r="3.2"/><circle cx="228.5" cy="277.5" r="3.2"/><circle cx="234.5" cy="278.5" r="3.2"/><circle cx="236.5" cy="277.5" r="3.2"/><circle cx="240.5" cy="281.5" r="3.2"/><circle cx="244.5" cy="284.5" r="3.2"/><circle cx="246.5" cy="287.5" r="3.2"/><circle cx="250.5" cy="257.5" r="3.2"/><circle cx="252.5" cy="255.5" r="3.2"/><circle cx="256.5" cy="254.5" r="3.2"/><circle cx="306.5" cy="216.5" r="3.2"/><circle cx="332.5" cy="201.5" r="3.2"/><circle cx="357.5" cy="220.5" r="3.2"/><circle cx="383.5" cy="331.5" r="3.2"/><circle cx="408.5" cy="295.5" r="3.2"/><circle cx="434.5" cy="284.5" r="3.2"/><circle cx="459.5" cy="298.5" r="3.2"/><circle cx="485.5" cy="314.5" r="3.2"/><circle cx="532.5" cy="244.5" r="3.2"/><circle cx="557.5" cy="331.5" r="3.2"/><circle cx="583.5" cy="332.5" r="3.2"/><circle cx="608.5" cy="333.5" r="3.2"/><circle cx="634.5" cy="333.5" r="3.2"/><circle cx="659.5" cy="333.5" r="3.2"/><circle cx="685.5" cy="335.5" r="3.2"/><circle cx="692.5" cy="337.5" r="3.2"/></g><path d="M216.0 281.7 L217.5 276.8 L219.2 267.6 L221.5 266.1 L224.8 266.9 L228.1 266.3 L231.4 266.7 L234.7 266.4 L238.0 266.3 L241.5 266.7 L245.0 266.6 L250.6 258.0 L253.5 255.2 L256.3 256.6 L306.4 255.3 L332.5 282.7 L357.0 252.8 L383.5 250.1 L408.5 248.9 L434.4 249.4 L459.4 249.4 L485.5 246.9 L532.5 248.3 L557.6 247.9 L583.4 247.2 L608.5 249.1 L634.4 251.2 L659.4 250.4 L685.5 257.1 L692.4 253.9" stroke="#98fb98" stroke-width="2.7" fill="none" stroke-linejoin="round"/><g fill="#98fb98" stroke="#000" stroke-width="0.75"><circle cx="216.5" cy="281.5" r="3.2"/><circle cx="217.5" cy="276.5" r="3.2"/><circle cx="219.5" cy="267.5" r="3.2"/><circle cx="221.5" cy="266.5" r="3.2"/><circle cx="224.5" cy="266.5" r="3.2"/><circle cx="228.5" cy="266.5" r="3.2"/><circle cx="231.5" cy="266.5" r="3.2"/><circle cx="234.5" cy="266.5" r="3.2"/><circle cx="238.5" cy="266.5" r="3.2"/><circle cx="241.5" cy="266.5" r="3.2"/><circle cx="245.5" cy="266.5" r="3.2"/><circle cx="250.5" cy="258.5" r="3.2"/><circle cx="253.5" cy="255.5" r="3.2"/><circle cx="256.5" cy="256.5" r="3.2"/><circle cx="306.5" cy="255.5" r="3.2"/><circle cx="332.5" cy="282.5" r="3.2"/><circle cx="357.5" cy="252.5" r="3.2"/><circle cx="383.5" cy="250.5" r="3.2"/><circle cx="408.5" cy="248.5" r="3.2"/><circle cx="434.5" cy="249.5" r="3.2"/><circle cx="459.5" cy="249.5" r="3.2"/><circle cx="485.5" cy="246.5" r="3.2"/><circle cx="532.5" cy="248.5" r="3.2"/><circle cx="557.5" cy="247.5" r="3.2"/><circle cx="583.5" cy="247.5" r="3.2"/><circle cx="608.5" cy="249.5" r="3.2"/><circle cx="634.5" cy="251.5" r="3.2"/><circle cx="659.5" cy="250.5" r="3.2"/><circle cx="685.5" cy="257.5" r="3.2"/><circle cx="692.5" cy="253.5" r="3.2"/></g><path d="M216.3 203.6 L218.2 230.2 L219.6 282.3 L222.2 282.5 L226.1 289.6 L228.9 284.1 L233.7 283.3 L236.1 284.6 L240.4 286.7 L244.5 292.0 L246.5 295.9 L250.6 256.3 L252.5 251.1 L256.5 250.1 L306.4 193.5 L332.5 156.1 L357.0 203.5 L383.5 344.0 L408.5 303.2 L434.4 288.6 L459.4 310.8 L485.5 327.5 L532.5 235.3 L557.6 346.5 L583.4 346.0 L608.5 349.8 L634.4 347.8 L659.4 350.9 L685.5 349.4 L692.4 352.8" stroke="#f5f5f5" stroke-width="2.7" fill="none" stroke-linejoin="round"/><g fill="#f5f5f5" stroke="#000" stroke-width="0.75"><circle cx="216.5" cy="203.5" r="3.2"/><circle cx="218.5" cy="230.5" r="3.2"/><circle cx="219.5" cy="282.5" r="3.2"/><circle cx="222.5" cy="282.5" r="3.2"/><circle cx="226.5" cy="289.5" r="3.2"/><circle cx="228.5" cy="284.5" r="3.2"/><circle cx="233.5" cy="283.5" r="3.2"/><circle cx="236.5" cy="284.5" r="3.2"/><circle cx="240.5" cy="286.5" r="3.2"/><circle cx="244.5" cy="292.5" r="3.2"/><circle cx="246.5" cy="295.5" r="3.2"/><circle cx="250.5" cy="256.5" r="3.2"/><circle cx="252.5" cy="251.5" r="3.2"/><circle cx="256.5" cy="250.5" r="3.2"/><circle cx="306.5" cy="193.5" r="3.2"/><circle cx="332.5" cy="156.5" r="3.2"/><circle cx="357.5" cy="203.5" r="3.2"/><circle cx="383.5" cy="343.5" r="3.2"/><circle cx="408.5" cy="303.5" r="3.2"/><circle cx="434.5" cy="288.5" r="3.2"/><circle cx="459.5" cy="310.5" r="3.2"/><circle cx="485.5" cy="327.5" r="3.2"/><circle cx="532.5" cy="235.5" r="3.2"/><circle cx="557.5" cy="346.5" r="3.2"/><circle cx="583.5" cy="346.5" r="3.2"/><circle cx="608.5" cy="349.5" r="3.2"/><circle cx="634.5" cy="347.5" r="3.2"/><circle cx="659.5" cy="350.5" r="3.2"/><circle cx="685.5" cy="349.5" r="3.2"/><circle cx="692.5" cy="352.5" r="3.2"/></g><path d="M216.0 274.5 L217.5 272.1 L219.2 267.5 L221.5 268.5 L224.8 267.4 L228.1 268.3 L231.4 268.2 L234.7 268.3 L238.0 267.8 L241.5 268.0 L245.0 267.5 L250.6 260.3 L253.5 261.5 L256.3 261.0 L306.4 258.5 L332.5 288.3 L357.0 256.8 L383.5 258.1 L408.5 255.6 L434.4 257.5 L459.4 256.5 L485.5 256.2 L532.5 254.3 L557.6 253.9 L583.4 255.7 L608.5 254.6 L634.4 254.4 L659.4 254.4 L685.5 264.9 L692.4 264.3" stroke="#f0e68c" stroke-width="2.7" fill="none" stroke-linejoin="round"/><g fill="#f0e68c" stroke="#000" stroke-width="0.75"><circle cx="216.5" cy="274.5" r="3.2"/><circle cx="217.5" cy="272.5" r="3.2"/><circle cx="219.5" cy="267.5" r="3.2"/><circle cx="221.5" cy="268.5" r="3.2"/><circle cx="224.5" cy="267.5" r="3.2"/><circle cx="228.5" cy="268.5" r="3.2"/><circle cx="231.5" cy="268.5" r="3.2"/><circle cx="234.5" cy="268.5" r="3.2"/><circle cx="238.5" cy="267.5" r="3.2"/><circle cx="241.5" cy="267.5" r="3.2"/><circle cx="245.5" cy="267.5" r="3.2"/><circle cx="250.5" cy="260.5" r="3.2"/><circle cx="253.5" cy="261.5" r="3.2"/><circle cx="256.5" cy="261.5" r="3.2"/><circle cx="306.5" cy="258.5" r="3.2"/><circle cx="332.5" cy="288.5" r="3.2"/><circle cx="357.5" cy="256.5" r="3.2"/><circle cx="383.5" cy="258.5" r="3.2"/><circle cx="408.5" cy="255.5" r="3.2"/><circle cx="434.5" cy="257.5" r="3.2"/><circle cx="459.5" cy="256.5" r="3.2"/><circle cx="485.5" cy="256.5" r="3.2"/><circle cx="532.5" cy="254.5" r="3.2"/><circle cx="557.5" cy="253.5" r="3.2"/><circle cx="583.5" cy="255.5" r="3.2"/><circle cx="608.5" cy="254.5" r="3.2"/><circle cx="634.5" cy="254.5" r="3.2"/><circle cx="659.5" cy="254.5" r="3.2"/><circle cx="685.5" cy="264.5" r="3.2"/><circle cx="692.5" cy="264.5" r="3.2"/></g><path d="M216.3 218.0 L218.2 245.1 L219.6 279.3 L222.4 277.7 L226.7 282.4 L228.4 279.7 L233.8 279.9 L236.9 279.7 L240.2 280.2 L244.6 284.4 L246.8 287.0 L250.6 260.8 L252.5 259.7 L256.5 258.6 L306.4 228.3 L332.5 216.7 L357.0 227.6 L383.5 331.2 L408.5 293.8 L434.4 284.9 L459.4 298.8 L485.5 310.7 L532.5 244.6 L557.6 329.0 L583.4 330.0 L608.5 335.7 L634.4 334.5 L659.4 333.5 L685.5 333.9 L692.4 338.0" stroke="#87cefa" stroke-width="2.7" fill="none" stroke-linejoin="round"/><g fill="#87cefa" stroke="#000" stroke-width="0.75"><circle cx="216.5" cy="218.5" r="3.2"/><circle cx="218.5" cy="245.5" r="3.2"/><circle cx="219.5" cy="279.5" r="3.2"/><circle cx="222.5" cy="277.5" r="3.2"/><circle cx="226.5" cy="282.5" r="3.2"/><circle cx="228.5" cy="279.5" r="3.2"/><circle cx="233.5" cy="279.5" r="3.2"/><circle cx="236.5" cy="279.5" r="3.2"/><circle cx="240.5" cy="280.5" r="3.2"/><circle cx="244.5" cy="284.5" r="3.2"/><circle cx="246.5" cy="286.5" r="3.2"/><circle cx="250.5" cy="260.5" r="3.2"/><circle cx="252.5" cy="259.5" r="3.2"/><circle cx="256.5" cy="258.5" r="3.2"/><circle cx="306.5" cy="228.5" r="3.2"/><circle cx="332.5" cy="216.5" r="3.2"/><circle cx="357.5" cy="227.5" r="3.2"/><circle cx="383.5" cy="331.5" r="3.2"/><circle cx="408.5" cy="293.5" r="3.2"/><circle cx="434.5" cy="284.5" r="3.2"/><circle cx="459.5" cy="298.5" r="3.2"/><circle cx="485.5" cy="310.5" r="3.2"/><circle cx="532.5" cy="244.5" r="3.2"/><circle cx="557.5" cy="328.5" r="3.2"/><circle cx="583.5" cy="330.5" r="3.2"/><circle cx="608.5" cy="335.5" r="3.2"/><circle cx="634.5" cy="334.5" r="3.2"/><circle cx="659.5" cy="333.5" r="3.2"/><circle cx="685.5" cy="333.5" r="3.2"/><circle cx="692.5" cy="337.5" r="3.2"/></g><path d="M216.0 286.2 L217.5 278.7 L219.2 267.9 L221.5 265.7 L224.8 265.7 L228.1 265.3 L231.4 265.9 L234.7 265.4 L238.0 265.5 L241.5 265.7 L245.0 265.5 L250.6 255.3 L253.5 252.2 L256.3 253.3 L306.4 252.0 L332.5 278.9 L357.0 247.3 L383.5 246.0 L408.5 246.7 L434.4 242.9 L459.4 243.4 L485.5 243.6 L532.5 244.7 L557.6 242.4 L583.4 243.3 L608.5 247.3 L634.4 247.8 L659.4 248.6 L685.5 248.9 L692.4 248.9" stroke="#ffc0cb" stroke-width="2.7" fill="none" stroke-linejoin="round"/><g fill="#ffc0cb" stroke="#000" stroke-width="0.75"><circle cx="216.5" cy="286.5" r="3.2"/><circle cx="217.5" cy="278.5" r="3.2"/><circle cx="219.5" cy="267.5" r="3.2"/><circle cx="221.5" cy="265.5" r="3.2"/><circle cx="224.5" cy="265.5" r="3.2"/><circle cx="228.5" cy="265.5" r="3.2"/><circle cx="231.5" cy="265.5" r="3.2"/><circle cx="234.5" cy="265.5" r="3.2"/><circle cx="238.5" cy="265.5" r="3.2"/><circle cx="241.5" cy="265.5" r="3.2"/><circle cx="245.5" cy="265.5" r="3.2"/><circle cx="250.5" cy="255.5" r="3.2"/><circle cx="253.5" cy="252.5" r="3.2"/><circle cx="256.5" cy="253.5" r="3.2"/><circle cx="306.5" cy="251.5" r="3.2"/><circle cx="332.5" cy="278.5" r="3.2"/><circle cx="357.5" cy="247.5" r="3.2"/><circle cx="383.5" cy="245.5" r="3.2"/><circle cx="408.5" cy="246.5" r="3.2"/><circle cx="434.5" cy="242.5" r="3.2"/><circle cx="459.5" cy="243.5" r="3.2"/><circle cx="485.5" cy="243.5" r="3.2"/><circle cx="532.5" cy="244.5" r="3.2"/><circle cx="557.5" cy="242.5" r="3.2"/><circle cx="583.5" cy="243.5" r="3.2"/><circle cx="608.5" cy="247.5" r="3.2"/><circle cx="634.5" cy="247.5" r="3.2"/><circle cx="659.5" cy="248.5" r="3.2"/><circle cx="685.5" cy="248.5" r="3.2"/><circle cx="692.5" cy="248.5" r="3.2"/></g><path d="M216.3 236.1 L218.2 255.7 L219.6 276.7 L222.9 275.4 L226.3 275.2 L228.5 275.8 L234.2 276.2 L236.2 274.4 L240.2 276.5 L244.4 277.2 L246.4 278.6 L250.6 260.3 L252.5 259.6 L256.5 261.1 L306.4 237.8 L332.5 225.7 L357.0 235.0 L383.5 321.0 L408.5 289.6 L434.4 281.3 L459.4 289.6 L485.5 298.7 L532.5 256.1 L557.6 315.2 L583.4 316.7 L608.5 322.4 L634.4 319.1 L659.4 321.7 L685.5 319.0 L692.4 323.8" stroke="#00ced1" stroke-width="2.7" fill="none" stroke-linejoin="round"/><g fill="#00ced1" stroke="#000" stroke-width="0.75"><circle cx="216.5" cy="236.5" r="3.2"/><circle cx="218.5" cy="255.5" r="3.2"/><circle cx="219.5" cy="276.5" r="3.2"/><circle cx="222.5" cy="275.5" r="3.2"/><circle cx="226.5" cy="275.5" r="3.2"/><circle cx="228.5" cy="275.5" r="3.2"/><circle cx="234.5" cy="276.5" r="3.2"/><circle cx="236.5" cy="274.5" r="3.2"/><circle cx="240.5" cy="276.5" r="3.2"/><circle cx="244.5" cy="277.5" r="3.2"/><circle cx="246.5" cy="278.5" r="3.2"/><circle cx="250.5" cy="260.5" r="3.2"/><circle cx="252.5" cy="259.5" r="3.2"/><circle cx="256.5" cy="261.5" r="3.2"/><circle cx="306.5" cy="237.5" r="3.2"/><circle cx="332.5" cy="225.5" r="3.2"/><circle cx="357.5" cy="235.5" r="3.2"/><circle cx="383.5" cy="320.5" r="3.2"/><circle cx="408.5" cy="289.5" r="3.2"/><circle cx="434.5" cy="281.5" r="3.2"/><circle cx="459.5" cy="289.5" r="3.2"/><circle cx="485.5" cy="298.5" r="3.2"/><circle cx="532.5" cy="256.5" r="3.2"/><circle cx="557.5" cy="315.5" r="3.2"/><circle cx="583.5" cy="316.5" r="3.2"/><circle cx="608.5" cy="322.5" r="3.2"/><circle cx="634.5" cy="319.5" r="3.2"/><circle cx="659.5" cy="321.5" r="3.2"/><circle cx="685.5" cy="318.5" r="3.2"/><circle cx="692.5" cy="323.5" r="3.2"/></g><path d="M216.0 277.9 L217.5 274.6 L219.2 268.1 L221.5 267.1 L224.8 268.1 L228.1 267.1 L231.4 267.1 L234.7 267.8 L238.0 266.9 L241.5 267.9 L245.0 267.1 L250.6 261.0 L253.5 259.3 L256.3 259.5 L306.4 257.1 L332.5 285.2 L357.0 256.4 L383.5 253.7 L408.5 252.8 L434.4 254.7 L459.4 254.6 L485.5 252.5 L532.5 252.9 L557.6 251.4 L583.4 251.8 L608.5 254.2 L634.4 253.4 L659.4 254.5 L685.5 263.3 L692.4 260.3" stroke="#9400d3" stroke-width="2.7" fill="none" stroke-linejoin="round"/><g fill="#9400d3" stroke="#000" stroke-width="0.75"><circle cx="216.5" cy="277.5" r="3.2"/><circle cx="217.5" cy="274.5" r="3.2"/><circle cx="219.5" cy="268.5" r="3.2"/><circle cx="221.5" cy="267.5" r="3.2"/><circle cx="224.5" cy="268.5" r="3.2"/><circle cx="228.5" cy="267.5" r="3.2"/><circle cx="231.5" cy="267.5" r="3.2"/><circle cx="234.5" cy="267.5" r="3.2"/><circle cx="238.5" cy="266.5" r="3.2"/><circle cx="241.5" cy="267.5" r="3.2"/><circle cx="245.5" cy="267.5" r="3.2"/><circle cx="250.5" cy="260.5" r="3.2"/><circle cx="253.5" cy="259.5" r="3.2"/><circle cx="256.5" cy="259.5" r="3.2"/><circle cx="306.5" cy="257.5" r="3.2"/><circle cx="332.5" cy="285.5" r="3.2"/><circle cx="357.5" cy="256.5" r="3.2"/><circle cx="383.5" cy="253.5" r="3.2"/><circle cx="408.5" cy="252.5" r="3.2"/><circle cx="434.5" cy="254.5" r="3.2"/><circle cx="459.5" cy="254.5" r="3.2"/><circle cx="485.5" cy="252.5" r="3.2"/><circle cx="532.5" cy="252.5" r="3.2"/><circle cx="557.5" cy="251.5" r="3.2"/><circle cx="583.5" cy="251.5" r="3.2"/><circle cx="608.5" cy="254.5" r="3.2"/><circle cx="634.5" cy="253.5" r="3.2"/><circle cx="659.5" cy="254.5" r="3.2"/><circle cx="685.5" cy="263.5" r="3.2"/><circle cx="692.5" cy="260.5" r="3.2"/></g><path d="M216.3 210.1 L218.2 238.8 L219.6 279.4 L222.6 280.3 L226.2 285.6 L228.8 281.9 L234.0 281.0 L236.6 282.4 L240.3 282.9 L244.2 289.2 L246.7 292.3 L250.6 258.3 L252.5 257.2 L256.5 256.8 L306.4 221.5 L332.5 208.3 L357.0 223.2 L383.5 340.9 L408.5 297.8 L434.4 285.8 L459.4 303.9 L485.5 321.4 L532.5 240.0 L557.6 339.3 L583.4 341.4 L608.5 341.1 L634.4 342.9 L659.4 344.5 L685.5 345.8 L692.4 347.4" stroke="#eee8aa" stroke-width="2.7" fill="none" stroke-linejoin="round"/><g fill="#eee8aa" stroke="#000" stroke-width="0.75"><circle cx="216.5" cy="210.5" r="3.2"/><circle cx="218.5" cy="238.5" r="3.2"/><circle cx="219.5" cy="279.5" r="3.2"/><circle cx="222.5" cy="280.5" r="3.2"/><circle cx="226.5" cy="285.5" r="3.2"/><circle cx="228.5" cy="281.5" r="3.2"/><circle cx="234.5" cy="280.5" r="3.2"/><circle cx="236.5" cy="282.5" r="3.2"/><circle cx="240.5" cy="282.5" r="3.2"/><circle cx="244.5" cy="289.5" r="3.2"/><circle cx="246.5" cy="292.5" r="3.2"/><circle cx="250.5" cy="258.5" r="3.2"/><circle cx="252.5" cy="257.5" r="3.2"/><circle cx="256.5" cy="256.5" r="3.2"/><circle cx="306.5" cy="221.5" r="3.2"/><circle cx="332.5" cy="208.5" r="3.2"/><circle cx="357.5" cy="223.5" r="3.2"/><circle cx="383.5" cy="340.5" r="3.2"/><circle cx="408.5" cy="297.5" r="3.2"/><circle cx="434.5" cy="285.5" r="3.2"/><circle cx="459.5" cy="303.5" r="3.2"/><circle cx="485.5" cy="321.5" r="3.2"/><circle cx="532.5" cy="239.5" r="3.2"/><circle cx="557.5" cy="339.5" r="3.2"/><circle cx="583.5" cy="341.5" r="3.2"/><circle cx="608.5" cy="341.5" r="3.2"/><circle cx="634.5" cy="342.5" r="3.2"/><circle cx="659.5" cy="344.5" r="3.2"/><circle cx="685.5" cy="345.5" r="3.2"/><circle cx="692.5" cy="347.5" r="3.2"/></g><path d="M216.0 290.8 L217.5 281.9 L219.2 268.0 L221.5 265.6 L224.8 265.5 L228.1 265.3 L231.4 265.1 L234.7 265.4 L238.0 265.6 L241.5 265.6 L245.0 265.4 L250.6 254.6 L253.5 252.4 L256.3 252.2 L306.4 251.0 L332.5 277.8 L357.0 246.0 L383.5 244.3 L408.5 245.3 L434.4 241.6 L459.4 242.9 L485.5 241.2 L532.5 243.5 L557.6 241.0 L583.4 241.3 L608.5 245.9 L634.4 245.8 L659.4 248.0 L685.5 247.5 L692.4 247.0" stroke="#87ceeb" stroke-width="2.7" fill="none" stroke-linejoin="round"/><g fill="#87ceeb" stroke="#000" stroke-width="0.75"><circle cx="216.5" cy="290.5" r="3.2"/><circle cx="217.5" cy="281.5" r="3.2"/><circle cx="219.5" cy="267.5" r="3.2"/><circle cx="221.5" cy="265.5" r="3.2"/><circle cx="224.5" cy="265.5" r="3.2"/><circle cx="228.5" cy="265.5" r="3.2"/><circle cx="231.5" cy="265.5" r="3.2"/><circle cx="234.5" cy="265.5" r="3.2"/><circle cx="238.5" cy="265.5" r="3.2"/><circle cx="241.5" cy="265.5" r="3.2"/><circle cx="245.5" cy="265.5" r="3.2"/><circle cx="250.5" cy="254.5" r="3.2"/><circle cx="253.5" cy="252.5" r="3.2"/><circle cx="256.5" cy="252.5" r="3.2"/><circle cx="306.5" cy="250.5" r="3.2"/><circle cx="332.5" cy="277.5" r="3.2"/><circle cx="357.5" cy="246.5" r="3.2"/><circle cx="383.5" cy="244.5" r="3.2"/><circle cx="408.5" cy="245.5" r="3.2"/><circle cx="434.5" cy="241.5" r="3.2"/><circle cx="459.5" cy="242.5" r="3.2"/><circle cx="485.5" cy="241.5" r="3.2"/><circle cx="532.5" cy="243.5" r="3.2"/><circle cx="557.5" cy="241.5" r="3.2"/><circle cx="583.5" cy="241.5" r="3.2"/><circle cx="608.5" cy="245.5" r="3.2"/><circle cx="634.5" cy="245.5" r="3.2"/><circle cx="659.5" cy="247.5" r="3.2"/><circle cx="685.5" cy="247.5" r="3.2"/><circle cx="692.5" cy="246.5" r="3.2"/></g><path d="M216.3 192.4 L218.2 223.5 L219.6 284.8 L222.6 287.0 L226.1 292.8 L228.5 287.9 L233.8 286.2 L236.9 286.3 L240.3 291.8 L244.7 296.2 L246.6 306.2 L250.6 259.0 L252.5 258.0 L256.5 257.5 L306.4 221.2 L332.5 206.8 L357.0 223.1 L383.5 358.5 L408.5 307.4 L434.4 290.2 L459.4 315.5 L485.5 337.6 L532.5 225.4 L557.6 358.9 L583.4 360.9 L608.5 362.4 L634.4 361.4 L659.4 363.9 L685.5 364.7 L692.4 365.3" stroke="#ffa07a" stroke-width="2.7" fill="none" stroke-linejoin="round"/><g fill="#ffa07a" stroke="#000" stroke-width="0.75"><circle cx="216.5" cy="192.5" r="3.2"/><circle cx="218.5" cy="223.5" r="3.2"/><circle cx="219.5" cy="284.5" r="3.2"/><circle cx="222.5" cy="287.5" r="3.2"/><circle cx="226.5" cy="292.5" r="3.2"/><circle cx="228.5" cy="287.5" r="3.2"/><circle cx="233.5" cy="286.5" r="3.2"/><circle cx="236.5" cy="286.5" r="3.2"/><circle cx="240.5" cy="291.5" r="3.2"/><circle cx="244.5" cy="296.5" r="3.2"/><circle cx="246.5" cy="306.5" r="3.2"/><circle cx="250.5" cy="258.5" r="3.2"/><circle cx="252.5" cy="257.5" r="3.2"/><circle cx="256.5" cy="257.5" r="3.2"/><circle cx="306.5" cy="221.5" r="3.2"/><circle cx="332.5" cy="206.5" r="3.2"/><circle cx="357.5" cy="223.5" r="3.2"/><circle cx="383.5" cy="358.5" r="3.2"/><circle cx="408.5" cy="307.5" r="3.2"/><circle cx="434.5" cy="290.5" r="3.2"/><circle cx="459.5" cy="315.5" r="3.2"/><circle cx="485.5" cy="337.5" r="3.2"/><circle cx="532.5" cy="225.5" r="3.2"/><circle cx="557.5" cy="358.5" r="3.2"/><circle cx="583.5" cy="360.5" r="3.2"/><circle cx="608.5" cy="362.5" r="3.2"/><circle cx="634.5" cy="361.5" r="3.2"/><circle cx="659.5" cy="363.5" r="3.2"/><circle cx="685.5" cy="364.5" r="3.2"/><circle cx="692.5" cy="365.5" r="3.2"/></g><path d="M216.0 285.0 L217.5 279.0 L219.2 267.4 L221.5 266.2 L224.8 266.3 L228.1 266.2 L231.4 265.7 L234.7 266.0 L238.0 266.8 L241.5 266.4 L245.0 266.3 L250.6 257.7 L253.5 255.0 L256.3 254.6 L306.4 253.4 L332.5 279.8 L357.0 249.3 L383.5 246.9 L408.5 249.0 L434.4 247.7 L459.4 245.9 L485.5 245.1 L532.5 247.3 L557.6 245.3 L583.4 246.9 L608.5 249.6 L634.4 249.1 L659.4 250.9 L685.5 253.2 L692.4 250.9" stroke="#f08080" stroke-width="2.7" fill="none" stroke-linejoin="round"/><g fill="#f08080" stroke="#000" stroke-width="0.75"><circle cx="216.5" cy="284.5" r="3.2"/><circle cx="217.5" cy="279.5" r="3.2"/><circle cx="219.5" cy="267.5" r="3.2"/><circle cx="221.5" cy="266.5" r="3.2"/><circle cx="224.5" cy="266.5" r="3.2"/><circle cx="228.5" cy="266.5" r="3.2"/><circle cx="231.5" cy="265.5" r="3.2"/><circle cx="234.5" cy="265.5" r="3.2"/><circle cx="238.5" cy="266.5" r="3.2"/><circle cx="241.5" cy="266.5" r="3.2"/><circle cx="245.5" cy="266.5" r="3.2"/><circle cx="250.5" cy="257.5" r="3.2"/><circle cx="253.5" cy="255.5" r="3.2"/><circle cx="256.5" cy="254.5" r="3.2"/><circle cx="306.5" cy="253.5" r="3.2"/><circle cx="332.5" cy="279.5" r="3.2"/><circle cx="357.5" cy="249.5" r="3.2"/><circle cx="383.5" cy="246.5" r="3.2"/><circle cx="408.5" cy="249.5" r="3.2"/><circle cx="434.5" cy="247.5" r="3.2"/><circle cx="459.5" cy="245.5" r="3.2"/><circle cx="485.5" cy="245.5" r="3.2"/><circle cx="532.5" cy="247.5" r="3.2"/><circle cx="557.5" cy="245.5" r="3.2"/><circle cx="583.5" cy="246.5" r="3.2"/><circle cx="608.5" cy="249.5" r="3.2"/><circle cx="634.5" cy="249.5" r="3.2"/><circle cx="659.5" cy="250.5" r="3.2"/><circle cx="685.5" cy="253.5" r="3.2"/><circle cx="692.5" cy="250.5" r="3.2"/></g><path d="M216.3 230.7 L218.2 252.2 L219.6 277.4 L222.5 276.0 L226.4 276.9 L228.4 274.9 L234.0 276.0 L236.5 276.6 L240.4 277.2 L244.5 278.7 L246.7 282.1 L250.6 260.6 L252.5 259.4 L256.5 258.3 L306.4 234.1 L332.5 223.4 L357.0 231.4 L383.5 322.5 L408.5 290.9 L434.4 282.1 L459.4 294.7 L485.5 305.6 L532.5 252.2 L557.6 317.7 L583.4 324.4 L608.5 326.2 L634.4 326.4 L659.4 322.4 L685.5 327.7 L692.4 328.3" stroke="#ff85c0" stroke-width="2.7" fill="none" stroke-linejoin="round"/><g fill="#ff85c0" stroke="#000" stroke-width="0.75"><circle cx="216.5" cy="230.5" r="3.2"/><circle cx="218.5" cy="252.5" r="3.2"/><circle cx="219.5" cy="277.5" r="3.2"/><circle cx="222.5" cy="276.5" r="3.2"/><circle cx="226.5" cy="276.5" r="3.2"/><circle cx="228.5" cy="274.5" r="3.2"/><circle cx="233.5" cy="275.5" r="3.2"/><circle cx="236.5" cy="276.5" r="3.2"/><circle cx="240.5" cy="277.5" r="3.2"/><circle cx="244.5" cy="278.5" r="3.2"/><circle cx="246.5" cy="282.5" r="3.2"/><circle cx="250.5" cy="260.5" r="3.2"/><circle cx="252.5" cy="259.5" r="3.2"/><circle cx="256.5" cy="258.5" r="3.2"/><circle cx="306.5" cy="234.5" r="3.2"/><circle cx="332.5" cy="223.5" r="3.2"/><circle cx="357.5" cy="231.5" r="3.2"/><circle cx="383.5" cy="322.5" r="3.2"/><circle cx="408.5" cy="290.5" r="3.2"/><circle cx="434.5" cy="282.5" r="3.2"/><circle cx="459.5" cy="294.5" r="3.2"/><circle cx="485.5" cy="305.5" r="3.2"/><circle cx="532.5" cy="252.5" r="3.2"/><circle cx="557.5" cy="317.5" r="3.2"/><circle cx="583.5" cy="324.5" r="3.2"/><circle cx="608.5" cy="326.5" r="3.2"/><circle cx="634.5" cy="326.5" r="3.2"/><circle cx="659.5" cy="322.5" r="3.2"/><circle cx="685.5" cy="327.5" r="3.2"/><circle cx="692.5" cy="328.5" r="3.2"/></g><path d="M216.0 283.4 L217.5 276.5 L219.2 268.5 L221.5 266.3 L224.8 266.8 L228.1 266.1 L231.4 266.8 L234.7 266.0 L238.0 266.4 L241.5 266.4 L245.0 266.9 L250.6 256.8 L253.5 256.2 L256.3 254.5 L306.4 254.6 L332.5 280.6 L357.0 251.6 L383.5 248.6 L408.5 249.8 L434.4 248.0 L459.4 248.3 L485.5 247.7 L532.5 248.2 L557.6 247.1 L583.4 246.1 L608.5 250.3 L634.4 249.3 L659.4 251.5 L685.5 255.8 L692.4 251.8" stroke="#90ee90" stroke-width="2.7" fill="none" stroke-linejoin="round"/><g fill="#90ee90" stroke="#000" stroke-width="0.75"><circle cx="216.5" cy="283.5" r="3.2"/><circle cx="217.5" cy="276.5" r="3.2"/><circle cx="219.5" cy="268.5" r="3.2"/><circle cx="221.5" cy="266.5" r="3.2"/><circle cx="224.5" cy="266.5" r="3.2"/><circle cx="228.5" cy="266.5" r="3.2"/><circle cx="231.5" cy="266.5" r="3.2"/><circle cx="234.5" cy="265.5" r="3.2"/><circle cx="238.5" cy="266.5" r="3.2"/><circle cx="241.5" cy="266.5" r="3.2"/><circle cx="245.5" cy="266.5" r="3.2"/><circle cx="250.5" cy="256.5" r="3.2"/><circle cx="253.5" cy="256.5" r="3.2"/><circle cx="256.5" cy="254.5" r="3.2"/><circle cx="306.5" cy="254.5" r="3.2"/><circle cx="332.5" cy="280.5" r="3.2"/><circle cx="357.5" cy="251.5" r="3.2"/><circle cx="383.5" cy="248.5" r="3.2"/><circle cx="408.5" cy="249.5" r="3.2"/><circle cx="434.5" cy="248.5" r="3.2"/><circle cx="459.5" cy="248.5" r="3.2"/><circle cx="485.5" cy="247.5" r="3.2"/><circle cx="532.5" cy="248.5" r="3.2"/><circle cx="557.5" cy="247.5" r="3.2"/><circle cx="583.5" cy="246.5" r="3.2"/><circle cx="608.5" cy="250.5" r="3.2"/><circle cx="634.5" cy="249.5" r="3.2"/><circle cx="659.5" cy="251.5" r="3.2"/><circle cx="685.5" cy="255.5" r="3.2"/><circle cx="692.5" cy="251.5" r="3.2"/></g><path d="M216.3 222.8 L218.2 247.7 L219.6 278.4 L222.8 277.4 L226.6 280.5 L228.3 279.5 L233.9 277.2 L236.3 277.9 L240.8 280.8 L244.5 283.1 L246.7 285.4 L250.6 258.4 L252.5 259.0 L256.5 257.3 L306.4 227.2 L332.5 216.8 L357.0 228.2 L383.5 330.5 L408.5 293.0 L434.4 283.6 L459.4 298.3 L485.5 311.3 L532.5 248.6 L557.6 327.3 L583.4 332.2 L608.5 333.7 L634.4 332.1 L659.4 332.7 L685.5 333.7 L692.4 333.5" stroke="#ffffff" stroke-width="2.7" fill="none" stroke-linejoin="round"/><g fill="#ffffff" stroke="#000" stroke-width="0.75"><circle cx="216.5" cy="222.5" r="3.2"/><circle cx="218.5" cy="247.5" r="3.2"/><circle cx="219.5" cy="278.5" r="3.2"/><circle cx="222.5" cy="277.5" r="3.2"/><circle cx="226.5" cy="280.5" r="3.2"/><circle cx="228.5" cy="279.5" r="3.2"/><circle cx="233.5" cy="277.5" r="3.2"/><circle cx="236.5" cy="277.5" r="3.2"/><circle cx="240.5" cy="280.5" r="3.2"/><circle cx="244.5" cy="283.5" r="3.2"/><circle cx="246.5" cy="285.5" r="3.2"/><circle cx="250.5" cy="258.5" r="3.2"/><circle cx="252.5" cy="259.5" r="3.2"/><circle cx="256.5" cy="257.5" r="3.2"/><circle cx="306.5" cy="227.5" r="3.2"/><circle cx="332.5" cy="216.5" r="3.2"/><circle cx="357.5" cy="228.5" r="3.2"/><circle cx="383.5" cy="330.5" r="3.2"/><circle cx="408.5" cy="293.5" r="3.2"/><circle cx="434.5" cy="283.5" r="3.2"/><circle cx="459.5" cy="298.5" r="3.2"/><circle cx="485.5" cy="311.5" r="3.2"/><circle cx="532.5" cy="248.5" r="3.2"/><circle cx="557.5" cy="327.5" r="3.2"/><circle cx="583.5" cy="332.5" r="3.2"/><circle cx="608.5" cy="333.5" r="3.2"/><circle cx="634.5" cy="332.5" r="3.2"/><circle cx="659.5" cy="332.5" r="3.2"/><circle cx="685.5" cy="333.5" r="3.2"/><circle cx="692.5" cy="333.5" r="3.2"/></g><path d="M216.0 283.9 L217.5 276.8 L219.2 267.5 L221.5 266.2 L224.8 266.5 L228.1 267.0 L231.4 267.1 L234.7 265.9 L238.0 266.6 L241.5 266.9 L245.0 266.8 L250.6 256.3 L253.5 256.8 L256.3 256.2 L306.4 254.3 L332.5 282.5 L357.0 250.8 L383.5 248.5 L408.5 248.5 L434.4 249.2 L459.4 247.5 L485.5 247.0 L532.5 247.1 L557.6 246.9 L583.4 246.3 L608.5 249.4 L634.4 250.5 L659.4 251.5 L685.5 255.0 L692.4 253.2" stroke="#adff2f" stroke-width="2.7" fill="none" stroke-linejoin="round"/><g fill="#adff2f" stroke="#000" stroke-width="0.75"><circle cx="216.5" cy="283.5" r="3.2"/><circle cx="217.5" cy="276.5" r="3.2"/><circle cx="219.5" cy="267.5" r="3.2"/><circle cx="221.5" cy="266.5" r="3.2"/><circle cx="224.5" cy="266.5" r="3.2"/><circle cx="228.5" cy="267.5" r="3.2"/><circle cx="231.5" cy="267.5" r="3.2"/><circle cx="234.5" cy="265.5" r="3.2"/><circle cx="238.5" cy="266.5" r="3.2"/><circle cx="241.5" cy="266.5" r="3.2"/><circle cx="245.5" cy="266.5" r="3.2"/><circle cx="250.5" cy="256.5" r="3.2"/><circle cx="253.5" cy="256.5" r="3.2"/><circle cx="256.5" cy="256.5" r="3.2"/><circle cx="306.5" cy="254.5" r="3.2"/><circle cx="332.5" cy="282.5" r="3.2"/><circle cx="357.5" cy="250.5" r="3.2"/><circle cx="383.5" cy="248.5" r="3.2"/><circle cx="408.5" cy="248.5" r="3.2"/><circle cx="434.5" cy="249.5" r="3.2"/><circle cx="459.5" cy="247.5" r="3.2"/><circle cx="485.5" cy="247.5" r="3.2"/><circle cx="532.5" cy="247.5" r="3.2"/><circle cx="557.5" cy="246.5" r="3.2"/><circle cx="583.5" cy="246.5" r="3.2"/><circle cx="608.5" cy="249.5" r="3.2"/><circle cx="634.5" cy="250.5" r="3.2"/><circle cx="659.5" cy="251.5" r="3.2"/><circle cx="685.5" cy="254.5" r="3.2"/><circle cx="692.5" cy="253.5" r="3.2"/></g><path d="M216.3 213.6 L218.2 241.8 L219.6 280.2 L222.4 279.7 L226.7 284.1 L228.9 280.7 L234.3 281.7 L236.3 281.1 L240.5 283.0 L244.2 286.1 L246.3 289.9 L250.6 256.8 L252.5 253.2 L256.5 252.7 L306.4 205.4 L332.5 181.5 L357.0 210.5 L383.5 335.7 L408.5 296.6 L434.4 285.9 L459.4 300.9 L485.5 318.2 L532.5 241.8 L557.6 333.9 L583.4 334.6 L608.5 340.9 L634.4 339.4 L659.4 336.8 L685.5 340.7 L692.4 340.4" stroke="#add8e6" stroke-width="2.7" fill="none" stroke-linejoin="round"/><g fill="#add8e6" stroke="#000" stroke-width="0.75"><circle cx="216.5" cy="213.5" r="3.2"/><circle cx="218.5" cy="241.5" r="3.2"/><circle cx="219.5" cy="280.5" r="3.2"/><circle cx="222.5" cy="279.5" r="3.2"/><circle cx="226.5" cy="284.5" r="3.2"/><circle cx="228.5" cy="280.5" r="3.2"/><circle cx="234.5" cy="281.5" r="3.2"/><circle cx="236.5" cy="281.5" r="3.2"/><circle cx="240.5" cy="282.5" r="3.2"/><circle cx="244.5" cy="286.5" r="3.2"/><circle cx="246.5" cy="289.5" r="3.2"/><circle cx="250.5" cy="256.5" r="3.2"/><circle cx="252.5" cy="253.5" r="3.2"/><circle cx="256.5" cy="252.5" r="3.2"/><circle cx="306.5" cy="205.5" r="3.2"/><circle cx="332.5" cy="181.5" r="3.2"/><circle cx="357.5" cy="210.5" r="3.2"/><circle cx="383.5" cy="335.5" r="3.2"/><circle cx="408.5" cy="296.5" r="3.2"/><circle cx="434.5" cy="285.5" r="3.2"/><circle cx="459.5" cy="300.5" r="3.2"/><circle cx="485.5" cy="318.5" r="3.2"/><circle cx="532.5" cy="241.5" r="3.2"/><circle cx="557.5" cy="333.5" r="3.2"/><circle cx="583.5" cy="334.5" r="3.2"/><circle cx="608.5" cy="340.5" r="3.2"/><circle cx="634.5" cy="339.5" r="3.2"/><circle cx="659.5" cy="336.5" r="3.2"/><circle cx="685.5" cy="340.5" r="3.2"/><circle cx="692.5" cy="340.5" r="3.2"/></g><path d="M216.0 287.8 L217.5 279.4 L219.2 268.2 L221.5 265.3 L224.8 265.7 L228.1 266.1 L231.4 265.5 L234.7 265.8 L238.0 265.9 L241.5 266.0 L245.0 265.3 L250.6 254.7 L253.5 252.0 L256.3 252.4 L306.4 250.5 L332.5 277.6 L357.0 246.4 L383.5 243.3 L408.5 246.7 L434.4 243.9 L459.4 242.1 L485.5 241.3 L532.5 242.9 L557.6 243.4 L583.4 241.8 L608.5 247.1 L634.4 247.9 L659.4 248.9 L685.5 247.4 L692.4 245.5" stroke="#ffb6c1" stroke-width="2.7" fill="none" stroke-linejoin="round"/><g fill="#ffb6c1" stroke="#000" stroke-width="0.75"><circle cx="216.5" cy="287.5" r="3.2"/><circle cx="217.5" cy="279.5" r="3.2"/><circle cx="219.5" cy="268.5" r="3.2"/><circle cx="221.5" cy="265.5" r="3.2"/><circle cx="224.5" cy="265.5" r="3.2"/><circle cx="228.5" cy="266.5" r="3.2"/><circle cx="231.5" cy="265.5" r="3.2"/><circle cx="234.5" cy="265.5" r="3.2"/><circle cx="238.5" cy="265.5" r="3.2"/><circle cx="241.5" cy="266.5" r="3.2"/><circle cx="245.5" cy="265.5" r="3.2"/><circle cx="250.5" cy="254.5" r="3.2"/><circle cx="253.5" cy="252.5" r="3.2"/><circle cx="256.5" cy="252.5" r="3.2"/><circle cx="306.5" cy="250.5" r="3.2"/><circle cx="332.5" cy="277.5" r="3.2"/><circle cx="357.5" cy="246.5" r="3.2"/><circle cx="383.5" cy="243.5" r="3.2"/><circle cx="408.5" cy="246.5" r="3.2"/><circle cx="434.5" cy="243.5" r="3.2"/><circle cx="459.5" cy="242.5" r="3.2"/><circle cx="485.5" cy="241.5" r="3.2"/><circle cx="532.5" cy="242.5" r="3.2"/><circle cx="557.5" cy="243.5" r="3.2"/><circle cx="583.5" cy="241.5" r="3.2"/><circle cx="608.5" cy="247.5" r="3.2"/><circle cx="634.5" cy="247.5" r="3.2"/><circle cx="659.5" cy="248.5" r="3.2"/><circle cx="685.5" cy="247.5" r="3.2"/><circle cx="692.5" cy="245.5" r="3.2"/></g><path d="M216.3 229.7 L218.2 254.6 L219.6 278.5 L222.7 274.5 L226.1 276.9 L228.7 275.8 L233.8 274.9 L236.5 276.7 L240.5 277.5 L244.9 279.3 L246.1 279.7 L250.6 261.8 L252.5 259.1 L256.5 259.9 L306.4 234.7 L332.5 224.5 L357.0 232.8 L383.5 319.8 L408.5 289.0 L434.4 282.6 L459.4 292.8 L485.5 301.6 L532.5 251.5 L557.6 319.7 L583.4 322.5 L608.5 321.1 L634.4 323.3 L659.4 321.2 L685.5 325.9 L692.4 328.9" stroke="#1e90ff" stroke-width="2.7" fill="none" stroke-linejoin="round"/><g fill="#1e90ff" stroke="#000" stroke-width="0.75"><circle cx="216.5" cy="229.5" r="3.2"/><circle cx="218.5" cy="254.5" r="3.2"/><circle cx="219.5" cy="278.5" r="3.2"/><circle cx="222.5" cy="274.5" r="3.2"/><circle cx="226.5" cy="276.5" r="3.2"/><circle cx="228.5" cy="275.5" r="3.2"/><circle cx="233.5" cy="274.5" r="3.2"/><circle cx="236.5" cy="276.5" r="3.2"/><circle cx="240.5" cy="277.5" r="3.2"/><circle cx="244.5" cy="279.5" r="3.2"/><circle cx="246.5" cy="279.5" r="3.2"/><circle cx="250.5" cy="261.5" r="3.2"/><circle cx="252.5" cy="259.5" r="3.2"/><circle cx="256.5" cy="259.5" r="3.2"/><circle cx="306.5" cy="234.5" r="3.2"/><circle cx="332.5" cy="224.5" r="3.2"/><circle cx="357.5" cy="232.5" r="3.2"/><circle cx="383.5" cy="319.5" r="3.2"/><circle cx="408.5" cy="289.5" r="3.2"/><circle cx="434.5" cy="282.5" r="3.2"/><circle cx="459.5" cy="292.5" r="3.2"/><circle cx="485.5" cy="301.5" r="3.2"/><circle cx="532.5" cy="251.5" r="3.2"/><circle cx="557.5" cy="319.5" r="3.2"/><circle cx="583.5" cy="322.5" r="3.2"/><circle cx="608.5" cy="321.5" r="3.2"/><circle cx="634.5" cy="323.5" r="3.2"/><circle cx="659.5" cy="321.5" r="3.2"/><circle cx="685.5" cy="325.5" r="3.2"/><circle cx="692.5" cy="328.5" r="3.2"/></g><path d="M216.0 290.4 L217.5 279.5 L219.2 267.7 L221.5 265.3 L224.8 265.3 L228.1 264.9 L231.4 265.4 L234.7 265.7 L238.0 265.0 L241.5 264.9 L245.0 265.0 L250.6 254.0 L253.5 252.8 L256.3 251.3 L306.4 251.0 L332.5 274.8 L357.0 247.0 L383.5 243.8 L408.5 244.4 L434.4 241.9 L459.4 240.8 L485.5 239.0 L532.5 241.6 L557.6 240.3 L583.4 240.5 L608.5 246.1 L634.4 245.2 L659.4 247.0 L685.5 246.9 L692.4 244.1" stroke="#add8e6" stroke-width="2.7" fill="none" stroke-linejoin="round"/><g fill="#add8e6" stroke="#000" stroke-width="0.75"><circle cx="216.5" cy="290.5" r="3.2"/><circle cx="217.5" cy="279.5" r="3.2"/><circle cx="219.5" cy="267.5" r="3.2"/><circle cx="221.5" cy="265.5" r="3.2"/><circle cx="224.5" cy="265.5" r="3.2"/><circle cx="228.5" cy="264.5" r="3.2"/><circle cx="231.5" cy="265.5" r="3.2"/><circle cx="234.5" cy="265.5" r="3.2"/><circle cx="238.5" cy="264.5" r="3.2"/><circle cx="241.5" cy="264.5" r="3.2"/><circle cx="245.5" cy="265.5" r="3.2"/><circle cx="250.5" cy="254.5" r="3.2"/><circle cx="253.5" cy="252.5" r="3.2"/><circle cx="256.5" cy="251.5" r="3.2"/><circle cx="306.5" cy="250.5" r="3.2"/><circle cx="332.5" cy="274.5" r="3.2"/><circle cx="357.5" cy="247.5" r="3.2"/><circle cx="383.5" cy="243.5" r="3.2"/><circle cx="408.5" cy="244.5" r="3.2"/><circle cx="434.5" cy="241.5" r="3.2"/><circle cx="459.5" cy="240.5" r="3.2"/><circle cx="485.5" cy="238.5" r="3.2"/><circle cx="532.5" cy="241.5" r="3.2"/><circle cx="557.5" cy="240.5" r="3.2"/><circle cx="583.5" cy="240.5" r="3.2"/><circle cx="608.5" cy="246.5" r="3.2"/><circle cx="634.5" cy="245.5" r="3.2"/><circle cx="659.5" cy="247.5" r="3.2"/><circle cx="685.5" cy="246.5" r="3.2"/><circle cx="692.5" cy="244.5" r="3.2"/></g><path d="M216.3 209.1 L218.2 240.5 L219.6 280.8 L222.5 279.7 L226.6 285.5 L228.9 281.8 L234.3 281.3 L236.8 280.7 L240.1 283.6 L244.5 286.2 L246.4 292.5 L250.6 258.3 L252.5 258.5 L256.5 257.0 L306.4 221.3 L332.5 208.9 L357.0 222.1 L383.5 339.1 L408.5 299.0 L434.4 285.8 L459.4 303.3 L485.5 318.4 L532.5 238.7 L557.6 335.4 L583.4 338.9 L608.5 340.8 L634.4 341.5 L659.4 340.7 L685.5 342.6 L692.4 343.7" stroke="#afeeee" stroke-width="2.7" fill="none" stroke-linejoin="round"/><g fill="#afeeee" stroke="#000" stroke-width="0.75"><circle cx="216.5" cy="209.5" r="3.2"/><circle cx="218.5" cy="240.5" r="3.2"/><circle cx="219.5" cy="280.5" r="3.2"/><circle cx="222.5" cy="279.5" r="3.2"/><circle cx="226.5" cy="285.5" r="3.2"/><circle cx="228.5" cy="281.5" r="3.2"/><circle cx="234.5" cy="281.5" r="3.2"/><circle cx="236.5" cy="280.5" r="3.2"/><circle cx="240.5" cy="283.5" r="3.2"/><circle cx="244.5" cy="286.5" r="3.2"/><circle cx="246.5" cy="292.5" r="3.2"/><circle cx="250.5" cy="258.5" r="3.2"/><circle cx="252.5" cy="258.5" r="3.2"/><circle cx="256.5" cy="257.5" r="3.2"/><circle cx="306.5" cy="221.5" r="3.2"/><circle cx="332.5" cy="208.5" r="3.2"/><circle cx="357.5" cy="222.5" r="3.2"/><circle cx="383.5" cy="339.5" r="3.2"/><circle cx="408.5" cy="298.5" r="3.2"/><circle cx="434.5" cy="285.5" r="3.2"/><circle cx="459.5" cy="303.5" r="3.2"/><circle cx="485.5" cy="318.5" r="3.2"/><circle cx="532.5" cy="238.5" r="3.2"/><circle cx="557.5" cy="335.5" r="3.2"/><circle cx="583.5" cy="338.5" r="3.2"/><circle cx="608.5" cy="340.5" r="3.2"/><circle cx="634.5" cy="341.5" r="3.2"/><circle cx="659.5" cy="340.5" r="3.2"/><circle cx="685.5" cy="342.5" r="3.2"/><circle cx="692.5" cy="343.5" r="3.2"/></g><path d="M216.0 289.8 L217.5 281.5 L219.2 267.1 L221.5 264.6 L224.8 265.6 L228.1 265.5 L231.4 265.4 L234.7 264.5 L238.0 264.7 L241.5 264.6 L245.0 265.2 L250.6 254.6 L253.5 250.8 L256.3 250.5 L306.4 250.4 L332.5 275.0 L357.0 246.1 L383.5 242.7 L408.5 244.3 L434.4 239.5 L459.4 240.1 L485.5 240.1 L532.5 241.4 L557.6 234.0 L583.4 239.7 L608.5 243.4 L634.4 246.3 L659.4 247.3 L685.5 245.9 L692.4 235.8" stroke="#b0c4de" stroke-width="2.7" fill="none" stroke-linejoin="round"/><g fill="#b0c4de" stroke="#000" stroke-width="0.75"><circle cx="216.5" cy="289.5" r="3.2"/><circle cx="217.5" cy="281.5" r="3.2"/><circle cx="219.5" cy="267.5" r="3.2"/><circle cx="221.5" cy="264.5" r="3.2"/><circle cx="224.5" cy="265.5" r="3.2"/><circle cx="228.5" cy="265.5" r="3.2"/><circle cx="231.5" cy="265.5" r="3.2"/><circle cx="234.5" cy="264.5" r="3.2"/><circle cx="238.5" cy="264.5" r="3.2"/><circle cx="241.5" cy="264.5" r="3.2"/><circle cx="245.5" cy="265.5" r="3.2"/><circle cx="250.5" cy="254.5" r="3.2"/><circle cx="253.5" cy="250.5" r="3.2"/><circle cx="256.5" cy="250.5" r="3.2"/><circle cx="306.5" cy="250.5" r="3.2"/><circle cx="332.5" cy="275.5" r="3.2"/><circle cx="357.5" cy="246.5" r="3.2"/><circle cx="383.5" cy="242.5" r="3.2"/><circle cx="408.5" cy="244.5" r="3.2"/><circle cx="434.5" cy="239.5" r="3.2"/><circle cx="459.5" cy="240.5" r="3.2"/><circle cx="485.5" cy="240.5" r="3.2"/><circle cx="532.5" cy="241.5" r="3.2"/><circle cx="557.5" cy="234.5" r="3.2"/><circle cx="583.5" cy="239.5" r="3.2"/><circle cx="608.5" cy="243.5" r="3.2"/><circle cx="634.5" cy="246.5" r="3.2"/><circle cx="659.5" cy="247.5" r="3.2"/><circle cx="685.5" cy="245.5" r="3.2"/><circle cx="692.5" cy="235.5" r="3.2"/></g><path d="M216.3 207.0 L218.2 233.9 L219.6 281.2 L222.4 282.0 L226.7 288.1 L228.8 281.1 L233.9 283.4 L236.8 282.1 L240.4 284.8 L244.2 289.5 L246.4 295.7 L250.6 258.4 L252.5 255.8 L256.5 254.6 L306.4 217.5 L332.5 204.7 L357.0 221.1 L383.5 341.4 L408.5 299.9 L434.4 287.4 L459.4 305.8 L485.5 323.4 L532.5 237.7 L557.6 339.2 L583.4 346.1 L608.5 347.6 L634.4 348.2 L659.4 344.8 L685.5 345.8 L692.4 351.4" stroke="#98fb98" stroke-width="2.7" fill="none" stroke-linejoin="round"/><g fill="#98fb98" stroke="#000" stroke-width="0.75"><circle cx="216.5" cy="206.5" r="3.2"/><circle cx="218.5" cy="233.5" r="3.2"/><circle cx="219.5" cy="281.5" r="3.2"/><circle cx="222.5" cy="281.5" r="3.2"/><circle cx="226.5" cy="288.5" r="3.2"/><circle cx="228.5" cy="281.5" r="3.2"/><circle cx="233.5" cy="283.5" r="3.2"/><circle cx="236.5" cy="282.5" r="3.2"/><circle cx="240.5" cy="284.5" r="3.2"/><circle cx="244.5" cy="289.5" r="3.2"/><circle cx="246.5" cy="295.5" r="3.2"/><circle cx="250.5" cy="258.5" r="3.2"/><circle cx="252.5" cy="255.5" r="3.2"/><circle cx="256.5" cy="254.5" r="3.2"/><circle cx="306.5" cy="217.5" r="3.2"/><circle cx="332.5" cy="204.5" r="3.2"/><circle cx="357.5" cy="221.5" r="3.2"/><circle cx="383.5" cy="341.5" r="3.2"/><circle cx="408.5" cy="299.5" r="3.2"/><circle cx="434.5" cy="287.5" r="3.2"/><circle cx="459.5" cy="305.5" r="3.2"/><circle cx="485.5" cy="323.5" r="3.2"/><circle cx="532.5" cy="237.5" r="3.2"/><circle cx="557.5" cy="339.5" r="3.2"/><circle cx="583.5" cy="346.5" r="3.2"/><circle cx="608.5" cy="347.5" r="3.2"/><circle cx="634.5" cy="348.5" r="3.2"/><circle cx="659.5" cy="344.5" r="3.2"/><circle cx="685.5" cy="345.5" r="3.2"/><circle cx="692.5" cy="351.5" r="3.2"/></g><path d="M216.0 294.0 L217.5 281.0 L219.2 267.2 L221.5 264.4 L224.8 264.6 L228.1 264.6 L231.4 264.5 L234.7 264.3 L238.0 264.7 L241.5 264.9 L245.0 264.7 L250.6 253.1 L253.5 249.3 L256.3 249.9 L306.4 248.8 L332.5 275.3 L357.0 244.1 L383.5 239.9 L408.5 239.0 L434.4 240.1 L459.4 240.3 L485.5 237.1 L532.5 239.6 L557.6 238.4 L583.4 239.6 L608.5 245.0 L634.4 244.2 L659.4 247.5 L685.5 244.3 L692.4 241.4" stroke="#ffa07a" stroke-width="2.7" fill="none" stroke-linejoin="round"/><g fill="#ffa07a" stroke="#000" stroke-width="0.75"><circle cx="216.5" cy="293.5" r="3.2"/><circle cx="217.5" cy="280.5" r="3.2"/><circle cx="219.5" cy="267.5" r="3.2"/><circle cx="221.5" cy="264.5" r="3.2"/><circle cx="224.5" cy="264.5" r="3.2"/><circle cx="228.5" cy="264.5" r="3.2"/><circle cx="231.5" cy="264.5" r="3.2"/><circle cx="234.5" cy="264.5" r="3.2"/><circle cx="238.5" cy="264.5" r="3.2"/><circle cx="241.5" cy="264.5" r="3.2"/><circle cx="245.5" cy="264.5" r="3.2"/><circle cx="250.5" cy="253.5" r="3.2"/><circle cx="253.5" cy="249.5" r="3.2"/><circle cx="256.5" cy="249.5" r="3.2"/><circle cx="306.5" cy="248.5" r="3.2"/><circle cx="332.5" cy="275.5" r="3.2"/><circle cx="357.5" cy="244.5" r="3.2"/><circle cx="383.5" cy="239.5" r="3.2"/><circle cx="408.5" cy="239.5" r="3.2"/><circle cx="434.5" cy="240.5" r="3.2"/><circle cx="459.5" cy="240.5" r="3.2"/><circle cx="485.5" cy="237.5" r="3.2"/><circle cx="532.5" cy="239.5" r="3.2"/><circle cx="557.5" cy="238.5" r="3.2"/><circle cx="583.5" cy="239.5" r="3.2"/><circle cx="608.5" cy="245.5" r="3.2"/><circle cx="634.5" cy="244.5" r="3.2"/><circle cx="659.5" cy="247.5" r="3.2"/><circle cx="685.5" cy="244.5" r="3.2"/><circle cx="692.5" cy="241.5" r="3.2"/></g><path d="M216.3 204.2 L218.2 236.6 L219.6 283.4 L222.3 280.8 L226.5 286.9 L228.7 281.1 L234.0 282.8 L236.6 281.3 L240.4 285.2 L245.0 291.2 L246.8 295.3 L250.6 255.5 L252.5 253.1 L256.5 251.9 L306.4 198.1 L332.5 166.3 L357.0 206.0 L383.5 341.8 L408.5 300.3 L434.4 287.9 L459.4 306.4 L485.5 324.8 L532.5 235.1 L557.6 341.3 L583.4 343.7 L608.5 346.6 L634.4 347.9 L659.4 346.8 L685.5 346.0 L692.4 348.3" stroke="#90ee90" stroke-width="2.7" fill="none" stroke-linejoin="round"/><g fill="#90ee90" stroke="#000" stroke-width="0.75"><circle cx="216.5" cy="204.5" r="3.2"/><circle cx="218.5" cy="236.5" r="3.2"/><circle cx="219.5" cy="283.5" r="3.2"/><circle cx="222.5" cy="280.5" r="3.2"/><circle cx="226.5" cy="286.5" r="3.2"/><circle cx="228.5" cy="281.5" r="3.2"/><circle cx="233.5" cy="282.5" r="3.2"/><circle cx="236.5" cy="281.5" r="3.2"/><circle cx="240.5" cy="285.5" r="3.2"/><circle cx="244.5" cy="291.5" r="3.2"/><circle cx="246.5" cy="295.5" r="3.2"/><circle cx="250.5" cy="255.5" r="3.2"/><circle cx="252.5" cy="253.5" r="3.2"/><circle cx="256.5" cy="251.5" r="3.2"/><circle cx="306.5" cy="198.5" r="3.2"/><circle cx="332.5" cy="166.5" r="3.2"/><circle cx="357.5" cy="205.5" r="3.2"/><circle cx="383.5" cy="341.5" r="3.2"/><circle cx="408.5" cy="300.5" r="3.2"/><circle cx="434.5" cy="287.5" r="3.2"/><circle cx="459.5" cy="306.5" r="3.2"/><circle cx="485.5" cy="324.5" r="3.2"/><circle cx="532.5" cy="235.5" r="3.2"/><circle cx="557.5" cy="341.5" r="3.2"/><circle cx="583.5" cy="343.5" r="3.2"/><circle cx="608.5" cy="346.5" r="3.2"/><circle cx="634.5" cy="347.5" r="3.2"/><circle cx="659.5" cy="346.5" r="3.2"/><circle cx="685.5" cy="346.5" r="3.2"/><circle cx="692.5" cy="348.5" r="3.2"/></g><path d="M216.0 272.9 L217.5 273.9 L219.2 268.7 L221.5 268.5 L224.8 267.8 L228.1 267.6 L231.4 267.9 L234.7 268.0 L238.0 268.3 L241.5 267.9 L245.0 267.7 L250.6 260.1 L253.5 259.7 L256.3 260.8 L306.4 258.7 L332.5 289.3 L357.0 257.1 L383.5 257.2 L408.5 257.4 L434.4 258.6 L459.4 256.0 L485.5 256.8 L532.5 255.5 L557.6 255.6 L583.4 254.9 L608.5 255.5 L634.4 254.2 L659.4 255.4 L685.5 267.0 L692.4 264.1" stroke="#ffd700" stroke-width="2.7" fill="none" stroke-linejoin="round"/><g fill="#ffd700" stroke="#000" stroke-width="0.75"><circle cx="216.5" cy="272.5" r="3.2"/><circle cx="217.5" cy="273.5" r="3.2"/><circle cx="219.5" cy="268.5" r="3.2"/><circle cx="221.5" cy="268.5" r="3.2"/><circle cx="224.5" cy="267.5" r="3.2"/><circle cx="228.5" cy="267.5" r="3.2"/><circle cx="231.5" cy="267.5" r="3.2"/><circle cx="234.5" cy="267.5" r="3.2"/><circle cx="238.5" cy="268.5" r="3.2"/><circle cx="241.5" cy="267.5" r="3.2"/><circle cx="245.5" cy="267.5" r="3.2"/><circle cx="250.5" cy="260.5" r="3.2"/><circle cx="253.5" cy="259.5" r="3.2"/><circle cx="256.5" cy="260.5" r="3.2"/><circle cx="306.5" cy="258.5" r="3.2"/><circle cx="332.5" cy="289.5" r="3.2"/><circle cx="357.5" cy="257.5" r="3.2"/><circle cx="383.5" cy="257.5" r="3.2"/><circle cx="408.5" cy="257.5" r="3.2"/><circle cx="434.5" cy="258.5" r="3.2"/><circle cx="459.5" cy="256.5" r="3.2"/><circle cx="485.5" cy="256.5" r="3.2"/><circle cx="532.5" cy="255.5" r="3.2"/><circle cx="557.5" cy="255.5" r="3.2"/><circle cx="583.5" cy="254.5" r="3.2"/><circle cx="608.5" cy="255.5" r="3.2"/><circle cx="634.5" cy="254.5" r="3.2"/><circle cx="659.5" cy="255.5" r="3.2"/><circle cx="685.5" cy="267.5" r="3.2"/><circle cx="692.5" cy="264.5" r="3.2"/></g><path d="M216.3 213.3 L218.2 240.6 L219.6 279.6 L222.1 280.2 L226.0 284.4 L228.7 280.0 L233.9 281.8 L236.2 279.7 L240.7 283.6 L244.7 285.1 L246.2 290.3 L250.6 258.2 L252.5 252.9 L256.5 252.4 L306.4 208.7 L332.5 188.7 L357.0 214.9 L383.5 337.9 L408.5 298.8 L434.4 286.2 L459.4 301.8 L485.5 316.1 L532.5 240.6 L557.6 335.1 L583.4 337.7 L608.5 340.9 L634.4 338.1 L659.4 338.9 L685.5 338.8 L692.4 344.5" stroke="#7fff00" stroke-width="2.7" fill="none" stroke-linejoin="round"/><g fill="#7fff00" stroke="#000" stroke-width="0.75"><circle cx="216.5" cy="213.5" r="3.2"/><circle cx="218.5" cy="240.5" r="3.2"/><circle cx="219.5" cy="279.5" r="3.2"/><circle cx="222.5" cy="280.5" r="3.2"/><circle cx="226.5" cy="284.5" r="3.2"/><circle cx="228.5" cy="280.5" r="3.2"/><circle cx="233.5" cy="281.5" r="3.2"/><circle cx="236.5" cy="279.5" r="3.2"/><circle cx="240.5" cy="283.5" r="3.2"/><circle cx="244.5" cy="285.5" r="3.2"/><circle cx="246.5" cy="290.5" r="3.2"/><circle cx="250.5" cy="258.5" r="3.2"/><circle cx="252.5" cy="252.5" r="3.2"/><circle cx="256.5" cy="252.5" r="3.2"/><circle cx="306.5" cy="208.5" r="3.2"/><circle cx="332.5" cy="188.5" r="3.2"/><circle cx="357.5" cy="214.5" r="3.2"/><circle cx="383.5" cy="337.5" r="3.2"/><circle cx="408.5" cy="298.5" r="3.2"/><circle cx="434.5" cy="286.5" r="3.2"/><circle cx="459.5" cy="301.5" r="3.2"/><circle cx="485.5" cy="316.5" r="3.2"/><circle cx="532.5" cy="240.5" r="3.2"/><circle cx="557.5" cy="335.5" r="3.2"/><circle cx="583.5" cy="337.5" r="3.2"/><circle cx="608.5" cy="340.5" r="3.2"/><circle cx="634.5" cy="338.5" r="3.2"/><circle cx="659.5" cy="338.5" r="3.2"/><circle cx="685.5" cy="338.5" r="3.2"/><circle cx="692.5" cy="344.5" r="3.2"/></g><path d="M216.0 287.3 L217.5 278.7 L219.2 268.1 L221.5 265.3 L224.8 265.3 L228.1 266.4 L231.4 266.0 L234.7 266.1 L238.0 266.3 L241.5 265.8 L245.0 265.9 L250.6 256.0 L253.5 254.6 L256.3 253.0 L306.4 250.6 L332.5 279.1 L357.0 247.2 L383.5 246.7 L408.5 247.1 L434.4 245.2 L459.4 245.3 L485.5 243.6 L532.5 245.3 L557.6 243.9 L583.4 244.3 L608.5 247.0 L634.4 247.1 L659.4 248.5 L685.5 249.9 L692.4 249.2" stroke="#d3d3d3" stroke-width="2.7" fill="none" stroke-linejoin="round"/><g fill="#d3d3d3" stroke="#000" stroke-width="0.75"><circle cx="216.5" cy="287.5" r="3.2"/><circle cx="217.5" cy="278.5" r="3.2"/><circle cx="219.5" cy="268.5" r="3.2"/><circle cx="221.5" cy="265.5" r="3.2"/><circle cx="224.5" cy="265.5" r="3.2"/><circle cx="228.5" cy="266.5" r="3.2"/><circle cx="231.5" cy="265.5" r="3.2"/><circle cx="234.5" cy="266.5" r="3.2"/><circle cx="238.5" cy="266.5" r="3.2"/><circle cx="241.5" cy="265.5" r="3.2"/><circle cx="245.5" cy="265.5" r="3.2"/><circle cx="250.5" cy="255.5" r="3.2"/><circle cx="253.5" cy="254.5" r="3.2"/><circle cx="256.5" cy="253.5" r="3.2"/><circle cx="306.5" cy="250.5" r="3.2"/><circle cx="332.5" cy="279.5" r="3.2"/><circle cx="357.5" cy="247.5" r="3.2"/><circle cx="383.5" cy="246.5" r="3.2"/><circle cx="408.5" cy="247.5" r="3.2"/><circle cx="434.5" cy="245.5" r="3.2"/><circle cx="459.5" cy="245.5" r="3.2"/><circle cx="485.5" cy="243.5" r="3.2"/><circle cx="532.5" cy="245.5" r="3.2"/><circle cx="557.5" cy="243.5" r="3.2"/><circle cx="583.5" cy="244.5" r="3.2"/><circle cx="608.5" cy="246.5" r="3.2"/><circle cx="634.5" cy="247.5" r="3.2"/><circle cx="659.5" cy="248.5" r="3.2"/><circle cx="685.5" cy="249.5" r="3.2"/><circle cx="692.5" cy="249.5" r="3.2"/></g><path d="M216.3 213.4 L218.2 236.1 L219.6 280.4 L222.9 280.3 L226.1 285.6 L228.7 282.3 L233.8 279.9 L236.5 281.3 L240.4 282.5 L244.7 286.3 L246.8 291.4 L250.6 259.2 L252.5 256.1 L256.5 255.5 L306.4 221.0 L332.5 210.8 L357.0 224.2 L383.5 338.0 L408.5 297.4 L434.4 286.3 L459.4 302.9 L485.5 319.9 L532.5 242.5 L557.6 337.7 L583.4 337.5 L608.5 343.2 L634.4 340.5 L659.4 343.3 L685.5 340.8 L692.4 345.8" stroke="#fffacd" stroke-width="2.7" fill="none" stroke-linejoin="round"/><g fill="#fffacd" stroke="#000" stroke-width="0.75"><circle cx="216.5" cy="213.5" r="3.2"/><circle cx="218.5" cy="236.5" r="3.2"/><circle cx="219.5" cy="280.5" r="3.2"/><circle cx="222.5" cy="280.5" r="3.2"/><circle cx="226.5" cy="285.5" r="3.2"/><circle cx="228.5" cy="282.5" r="3.2"/><circle cx="233.5" cy="279.5" r="3.2"/><circle cx="236.5" cy="281.5" r="3.2"/><circle cx="240.5" cy="282.5" r="3.2"/><circle cx="244.5" cy="286.5" r="3.2"/><circle cx="246.5" cy="291.5" r="3.2"/><circle cx="250.5" cy="259.5" r="3.2"/><circle cx="252.5" cy="256.5" r="3.2"/><circle cx="256.5" cy="255.5" r="3.2"/><circle cx="306.5" cy="220.5" r="3.2"/><circle cx="332.5" cy="210.5" r="3.2"/><circle cx="357.5" cy="224.5" r="3.2"/><circle cx="383.5" cy="337.5" r="3.2"/><circle cx="408.5" cy="297.5" r="3.2"/><circle cx="434.5" cy="286.5" r="3.2"/><circle cx="459.5" cy="302.5" r="3.2"/><circle cx="485.5" cy="319.5" r="3.2"/><circle cx="532.5" cy="242.5" r="3.2"/><circle cx="557.5" cy="337.5" r="3.2"/><circle cx="583.5" cy="337.5" r="3.2"/><circle cx="608.5" cy="343.5" r="3.2"/><circle cx="634.5" cy="340.5" r="3.2"/><circle cx="659.5" cy="343.5" r="3.2"/><circle cx="685.5" cy="340.5" r="3.2"/><circle cx="692.5" cy="345.5" r="3.2"/></g><path d="M216.0 277.7 L217.5 274.3 L219.2 268.2 L221.5 267.3 L224.8 267.4 L228.1 267.9 L231.4 267.5 L234.7 267.7 L238.0 267.8 L241.5 267.3 L245.0 267.2 L250.6 258.7 L253.5 258.8 L256.3 258.7 L306.4 256.4 L332.5 286.9 L357.0 254.3 L383.5 255.4 L408.5 253.6 L434.4 252.6 L459.4 254.3 L485.5 253.4 L532.5 251.5 L557.6 252.4 L583.4 251.3 L608.5 253.3 L634.4 252.1 L659.4 252.1 L685.5 262.8 L692.4 259.3" stroke="#9370db" stroke-width="2.7" fill="none" stroke-linejoin="round"/><g fill="#9370db" stroke="#000" stroke-width="0.75"><circle cx="216.5" cy="277.5" r="3.2"/><circle cx="217.5" cy="274.5" r="3.2"/><circle cx="219.5" cy="268.5" r="3.2"/><circle cx="221.5" cy="267.5" r="3.2"/><circle cx="224.5" cy="267.5" r="3.2"/><circle cx="228.5" cy="267.5" r="3.2"/><circle cx="231.5" cy="267.5" r="3.2"/><circle cx="234.5" cy="267.5" r="3.2"/><circle cx="238.5" cy="267.5" r="3.2"/><circle cx="241.5" cy="267.5" r="3.2"/><circle cx="245.5" cy="267.5" r="3.2"/><circle cx="250.5" cy="258.5" r="3.2"/><circle cx="253.5" cy="258.5" r="3.2"/><circle cx="256.5" cy="258.5" r="3.2"/><circle cx="306.5" cy="256.5" r="3.2"/><circle cx="332.5" cy="286.5" r="3.2"/><circle cx="357.5" cy="254.5" r="3.2"/><circle cx="383.5" cy="255.5" r="3.2"/><circle cx="408.5" cy="253.5" r="3.2"/><circle cx="434.5" cy="252.5" r="3.2"/><circle cx="459.5" cy="254.5" r="3.2"/><circle cx="485.5" cy="253.5" r="3.2"/><circle cx="532.5" cy="251.5" r="3.2"/><circle cx="557.5" cy="252.5" r="3.2"/><circle cx="583.5" cy="251.5" r="3.2"/><circle cx="608.5" cy="253.5" r="3.2"/><circle cx="634.5" cy="252.5" r="3.2"/><circle cx="659.5" cy="252.5" r="3.2"/><circle cx="685.5" cy="262.5" r="3.2"/><circle cx="692.5" cy="259.5" r="3.2"/></g><path d="M216.3 181.5 L218.2 224.1 L219.6 283.1 L222.3 284.2 L226.1 293.1 L228.5 286.2 L234.1 288.1 L236.1 287.2 L240.9 289.8 L244.6 296.8 L246.3 304.7 L250.6 254.7 L252.5 248.5 L256.5 249.3 L306.4 185.0 L332.5 136.1 L357.0 198.0 L383.5 356.5 L408.5 308.8 L434.4 289.6 L459.4 317.3 L485.5 335.0 L532.5 225.9 L557.6 354.6 L583.4 359.7 L608.5 360.7 L634.4 362.6 L659.4 361.0 L685.5 362.9 L692.4 365.9" stroke="#708090" stroke-width="2.7" fill="none" stroke-linejoin="round"/><g fill="#708090" stroke="#000" stroke-width="0.75"><circle cx="216.5" cy="181.5" r="3.2"/><circle cx="218.5" cy="224.5" r="3.2"/><circle cx="219.5" cy="283.5" r="3.2"/><circle cx="222.5" cy="284.5" r="3.2"/><circle cx="226.5" cy="293.5" r="3.2"/><circle cx="228.5" cy="286.5" r="3.2"/><circle cx="234.5" cy="288.5" r="3.2"/><circle cx="236.5" cy="287.5" r="3.2"/><circle cx="240.5" cy="289.5" r="3.2"/><circle cx="244.5" cy="296.5" r="3.2"/><circle cx="246.5" cy="304.5" r="3.2"/><circle cx="250.5" cy="254.5" r="3.2"/><circle cx="252.5" cy="248.5" r="3.2"/><circle cx="256.5" cy="249.5" r="3.2"/><circle cx="306.5" cy="184.5" r="3.2"/><circle cx="332.5" cy="136.5" r="3.2"/><circle cx="357.5" cy="198.5" r="3.2"/><circle cx="383.5" cy="356.5" r="3.2"/><circle cx="408.5" cy="308.5" r="3.2"/><circle cx="434.5" cy="289.5" r="3.2"/><circle cx="459.5" cy="317.5" r="3.2"/><circle cx="485.5" cy="335.5" r="3.2"/><circle cx="532.5" cy="225.5" r="3.2"/><circle cx="557.5" cy="354.5" r="3.2"/><circle cx="583.5" cy="359.5" r="3.2"/><circle cx="608.5" cy="360.5" r="3.2"/><circle cx="634.5" cy="362.5" r="3.2"/><circle cx="659.5" cy="360.5" r="3.2"/><circle cx="685.5" cy="362.5" r="3.2"/><circle cx="692.5" cy="365.5" r="3.2"/></g><path d="M216.0 291.7 L217.5 281.6 L219.2 267.7 L221.5 264.9 L224.8 265.5 L228.1 264.9 L231.4 265.3 L234.7 265.1 L238.0 265.1 L241.5 264.8 L245.0 265.0 L250.6 254.1 L253.5 251.7 L256.3 251.2 L306.4 251.5 L332.5 276.5 L357.0 246.5 L383.5 242.4 L408.5 244.0 L434.4 241.9 L459.4 242.6 L485.5 241.2 L532.5 242.6 L557.6 241.3 L583.4 241.4 L608.5 246.5 L634.4 246.6 L659.4 247.3 L685.5 247.5 L692.4 246.6" stroke="#00ff7f" stroke-width="2.7" fill="none" stroke-linejoin="round"/><g fill="#00ff7f" stroke="#000" stroke-width="0.75"><circle cx="216.5" cy="291.5" r="3.2"/><circle cx="217.5" cy="281.5" r="3.2"/><circle cx="219.5" cy="267.5" r="3.2"/><circle cx="221.5" cy="264.5" r="3.2"/><circle cx="224.5" cy="265.5" r="3.2"/><circle cx="228.5" cy="264.5" r="3.2"/><circle cx="231.5" cy="265.5" r="3.2"/><circle cx="234.5" cy="265.5" r="3.2"/><circle cx="238.5" cy="265.5" r="3.2"/><circle cx="241.5" cy="264.5" r="3.2"/><circle cx="245.5" cy="264.5" r="3.2"/><circle cx="250.5" cy="254.5" r="3.2"/><circle cx="253.5" cy="251.5" r="3.2"/><circle cx="256.5" cy="251.5" r="3.2"/><circle cx="306.5" cy="251.5" r="3.2"/><circle cx="332.5" cy="276.5" r="3.2"/><circle cx="357.5" cy="246.5" r="3.2"/><circle cx="383.5" cy="242.5" r="3.2"/><circle cx="408.5" cy="244.5" r="3.2"/><circle cx="434.5" cy="241.5" r="3.2"/><circle cx="459.5" cy="242.5" r="3.2"/><circle cx="485.5" cy="241.5" r="3.2"/><circle cx="532.5" cy="242.5" r="3.2"/><circle cx="557.5" cy="241.5" r="3.2"/><circle cx="583.5" cy="241.5" r="3.2"/><circle cx="608.5" cy="246.5" r="3.2"/><circle cx="634.5" cy="246.5" r="3.2"/><circle cx="659.5" cy="247.5" r="3.2"/><circle cx="685.5" cy="247.5" r="3.2"/><circle cx="692.5" cy="246.5" r="3.2"/></g><path d="M216.3 228.7 L218.2 248.0 L219.6 276.7 L222.2 276.7 L226.5 279.3 L228.6 277.4 L234.2 277.9 L236.9 277.5 L240.8 277.2 L244.8 280.3 L246.6 281.6 L250.6 260.8 L252.5 258.2 L256.5 260.2 L306.4 231.9 L332.5 222.3 L357.0 230.6 L383.5 326.4 L408.5 290.3 L434.4 282.7 L459.4 294.2 L485.5 307.7 L532.5 252.8 L557.6 320.1 L583.4 325.7 L608.5 326.6 L634.4 326.8 L659.4 327.7 L685.5 327.7 L692.4 329.5" stroke="#9acd32" stroke-width="2.7" fill="none" stroke-linejoin="round"/><g fill="#9acd32" stroke="#000" stroke-width="0.75"><circle cx="216.5" cy="228.5" r="3.2"/><circle cx="218.5" cy="248.5" r="3.2"/><circle cx="219.5" cy="276.5" r="3.2"/><circle cx="222.5" cy="276.5" r="3.2"/><circle cx="226.5" cy="279.5" r="3.2"/><circle cx="228.5" cy="277.5" r="3.2"/><circle cx="234.5" cy="277.5" r="3.2"/><circle cx="236.5" cy="277.5" r="3.2"/><circle cx="240.5" cy="277.5" r="3.2"/><circle cx="244.5" cy="280.5" r="3.2"/><circle cx="246.5" cy="281.5" r="3.2"/><circle cx="250.5" cy="260.5" r="3.2"/><circle cx="252.5" cy="258.5" r="3.2"/><circle cx="256.5" cy="260.5" r="3.2"/><circle cx="306.5" cy="231.5" r="3.2"/><circle cx="332.5" cy="222.5" r="3.2"/><circle cx="357.5" cy="230.5" r="3.2"/><circle cx="383.5" cy="326.5" r="3.2"/><circle cx="408.5" cy="290.5" r="3.2"/><circle cx="434.5" cy="282.5" r="3.2"/><circle cx="459.5" cy="294.5" r="3.2"/><circle cx="485.5" cy="307.5" r="3.2"/><circle cx="532.5" cy="252.5" r="3.2"/><circle cx="557.5" cy="320.5" r="3.2"/><circle cx="583.5" cy="325.5" r="3.2"/><circle cx="608.5" cy="326.5" r="3.2"/><circle cx="634.5" cy="326.5" r="3.2"/><circle cx="659.5" cy="327.5" r="3.2"/><circle cx="685.5" cy="327.5" r="3.2"/><circle cx="692.5" cy="329.5" r="3.2"/></g><path d="M216.0 292.7 L217.5 283.7 L219.2 268.5 L221.5 264.7 L224.8 264.4 L228.1 265.3 L231.4 265.1 L234.7 264.8 L238.0 265.3 L241.5 265.2 L245.0 264.9 L250.6 254.4 L253.5 250.8 L256.3 250.7 L306.4 248.1 L332.5 274.9 L357.0 244.6 L383.5 240.1 L408.5 243.0 L434.4 240.1 L459.4 239.3 L485.5 238.1 L532.5 238.7 L557.6 240.7 L583.4 239.7 L608.5 243.5 L634.4 244.7 L659.4 245.8 L685.5 244.9 L692.4 241.5" stroke="#708090" stroke-width="2.7" fill="none" stroke-linejoin="round"/><g fill="#708090" stroke="#000" stroke-width="0.75"><circle cx="216.5" cy="292.5" r="3.2"/><circle cx="217.5" cy="283.5" r="3.2"/><circle cx="219.5" cy="268.5" r="3.2"/><circle cx="221.5" cy="264.5" r="3.2"/><circle cx="224.5" cy="264.5" r="3.2"/><circle cx="228.5" cy="265.5" r="3.2"/><circle cx="231.5" cy="265.5" r="3.2"/><circle cx="234.5" cy="264.5" r="3.2"/><circle cx="238.5" cy="265.5" r="3.2"/><circle cx="241.5" cy="265.5" r="3.2"/><circle cx="245.5" cy="264.5" r="3.2"/><circle cx="250.5" cy="254.5" r="3.2"/><circle cx="253.5" cy="250.5" r="3.2"/><circle cx="256.5" cy="250.5" r="3.2"/><circle cx="306.5" cy="248.5" r="3.2"/><circle cx="332.5" cy="274.5" r="3.2"/><circle cx="357.5" cy="244.5" r="3.2"/><circle cx="383.5" cy="240.5" r="3.2"/><circle cx="408.5" cy="242.5" r="3.2"/><circle cx="434.5" cy="240.5" r="3.2"/><circle cx="459.5" cy="239.5" r="3.2"/><circle cx="485.5" cy="238.5" r="3.2"/><circle cx="532.5" cy="238.5" r="3.2"/><circle cx="557.5" cy="240.5" r="3.2"/><circle cx="583.5" cy="239.5" r="3.2"/><circle cx="608.5" cy="243.5" r="3.2"/><circle cx="634.5" cy="244.5" r="3.2"/><circle cx="659.5" cy="245.5" r="3.2"/><circle cx="685.5" cy="244.5" r="3.2"/><circle cx="692.5" cy="241.5" r="3.2"/></g><path d="M216.3 214.6 L218.2 241.9 L219.6 280.0 L222.2 278.4 L226.5 281.7 L228.6 279.9 L234.4 278.6 L236.2 278.9 L240.5 281.2 L245.0 284.3 L246.2 287.7 L250.6 258.7 L252.5 256.8 L256.5 259.0 L306.4 226.4 L332.5 215.3 L357.0 225.8 L383.5 331.8 L408.5 295.1 L434.4 284.5 L459.4 302.5 L485.5 314.2 L532.5 243.7 L557.6 329.6 L583.4 335.7 L608.5 338.0 L634.4 337.2 L659.4 338.1 L685.5 339.8 L692.4 337.6" stroke="#4b0082" stroke-width="2.7" fill="none" stroke-linejoin="round"/><g fill="#4b0082" stroke="#000" stroke-width="0.75"><circle cx="216.5" cy="214.5" r="3.2"/><circle cx="218.5" cy="241.5" r="3.2"/><circle cx="219.5" cy="280.5" r="3.2"/><circle cx="222.5" cy="278.5" r="3.2"/><circle cx="226.5" cy="281.5" r="3.2"/><circle cx="228.5" cy="279.5" r="3.2"/><circle cx="234.5" cy="278.5" r="3.2"/><circle cx="236.5" cy="278.5" r="3.2"/><circle cx="240.5" cy="281.5" r="3.2"/><circle cx="244.5" cy="284.5" r="3.2"/><circle cx="246.5" cy="287.5" r="3.2"/><circle cx="250.5" cy="258.5" r="3.2"/><circle cx="252.5" cy="256.5" r="3.2"/><circle cx="256.5" cy="258.5" r="3.2"/><circle cx="306.5" cy="226.5" r="3.2"/><circle cx="332.5" cy="215.5" r="3.2"/><circle cx="357.5" cy="225.5" r="3.2"/><circle cx="383.5" cy="331.5" r="3.2"/><circle cx="408.5" cy="295.5" r="3.2"/><circle cx="434.5" cy="284.5" r="3.2"/><circle cx="459.5" cy="302.5" r="3.2"/><circle cx="485.5" cy="314.5" r="3.2"/><circle cx="532.5" cy="243.5" r="3.2"/><circle cx="557.5" cy="329.5" r="3.2"/><circle cx="583.5" cy="335.5" r="3.2"/><circle cx="608.5" cy="337.5" r="3.2"/><circle cx="634.5" cy="337.5" r="3.2"/><circle cx="659.5" cy="338.5" r="3.2"/><circle cx="685.5" cy="339.5" r="3.2"/><circle cx="692.5" cy="337.5" r="3.2"/></g><path d="M216.0 285.0 L217.5 277.4 L219.2 268.8 L221.5 266.4 L224.8 265.9 L228.1 266.2 L231.4 265.9 L234.7 265.7 L238.0 265.6 L241.5 266.5 L245.0 266.7 L250.6 255.8 L253.5 254.4 L256.3 254.8 L306.4 252.8 L332.5 279.2 L357.0 248.9 L383.5 248.2 L408.5 247.3 L434.4 247.1 L459.4 246.7 L485.5 245.5 L532.5 246.4 L557.6 245.3 L583.4 245.1 L608.5 249.1 L634.4 249.3 L659.4 249.9 L685.5 252.8 L692.4 251.3" stroke="#b0e0e6" stroke-width="2.7" fill="none" stroke-linejoin="round"/><g fill="#b0e0e6" stroke="#000" stroke-width="0.75"><circle cx="216.5" cy="284.5" r="3.2"/><circle cx="217.5" cy="277.5" r="3.2"/><circle cx="219.5" cy="268.5" r="3.2"/><circle cx="221.5" cy="266.5" r="3.2"/><circle cx="224.5" cy="265.5" r="3.2"/><circle cx="228.5" cy="266.5" r="3.2"/><circle cx="231.5" cy="265.5" r="3.2"/><circle cx="234.5" cy="265.5" r="3.2"/><circle cx="238.5" cy="265.5" r="3.2"/><circle cx="241.5" cy="266.5" r="3.2"/><circle cx="245.5" cy="266.5" r="3.2"/><circle cx="250.5" cy="255.5" r="3.2"/><circle cx="253.5" cy="254.5" r="3.2"/><circle cx="256.5" cy="254.5" r="3.2"/><circle cx="306.5" cy="252.5" r="3.2"/><circle cx="332.5" cy="279.5" r="3.2"/><circle cx="357.5" cy="248.5" r="3.2"/><circle cx="383.5" cy="248.5" r="3.2"/><circle cx="408.5" cy="247.5" r="3.2"/><circle cx="434.5" cy="247.5" r="3.2"/><circle cx="459.5" cy="246.5" r="3.2"/><circle cx="485.5" cy="245.5" r="3.2"/><circle cx="532.5" cy="246.5" r="3.2"/><circle cx="557.5" cy="245.5" r="3.2"/><circle cx="583.5" cy="245.5" r="3.2"/><circle cx="608.5" cy="249.5" r="3.2"/><circle cx="634.5" cy="249.5" r="3.2"/><circle cx="659.5" cy="249.5" r="3.2"/><circle cx="685.5" cy="252.5" r="3.2"/><circle cx="692.5" cy="251.5" r="3.2"/></g><path d="M216.3 217.2 L218.2 241.9 L219.6 280.2 L222.7 277.6 L226.1 283.1 L228.7 279.0 L234.2 280.5 L236.1 278.3 L240.9 281.9 L244.5 282.8 L246.1 286.7 L250.6 260.9 L252.5 258.6 L256.5 256.7 L306.4 226.5 L332.5 215.3 L357.0 227.9 L383.5 334.0 L408.5 296.7 L434.4 285.6 L459.4 299.9 L485.5 313.1 L532.5 246.1 L557.6 327.9 L583.4 333.7 L608.5 335.5 L634.4 337.2 L659.4 336.7 L685.5 334.0 L692.4 336.2" stroke="#ffd700" stroke-width="2.7" fill="none" stroke-linejoin="round"/><g fill="#ffd700" stroke="#000" stroke-width="0.75"><circle cx="216.5" cy="217.5" r="3.2"/><circle cx="218.5" cy="241.5" r="3.2"/><circle cx="219.5" cy="280.5" r="3.2"/><circle cx="222.5" cy="277.5" r="3.2"/><circle cx="226.5" cy="283.5" r="3.2"/><circle cx="228.5" cy="279.5" r="3.2"/><circle cx="234.5" cy="280.5" r="3.2"/><circle cx="236.5" cy="278.5" r="3.2"/><circle cx="240.5" cy="281.5" r="3.2"/><circle cx="244.5" cy="282.5" r="3.2"/><circle cx="246.5" cy="286.5" r="3.2"/><circle cx="250.5" cy="260.5" r="3.2"/><circle cx="252.5" cy="258.5" r="3.2"/><circle cx="256.5" cy="256.5" r="3.2"/><circle cx="306.5" cy="226.5" r="3.2"/><circle cx="332.5" cy="215.5" r="3.2"/><circle cx="357.5" cy="227.5" r="3.2"/><circle cx="383.5" cy="334.5" r="3.2"/><circle cx="408.5" cy="296.5" r="3.2"/><circle cx="434.5" cy="285.5" r="3.2"/><circle cx="459.5" cy="299.5" r="3.2"/><circle cx="485.5" cy="313.5" r="3.2"/><circle cx="532.5" cy="246.5" r="3.2"/><circle cx="557.5" cy="327.5" r="3.2"/><circle cx="583.5" cy="333.5" r="3.2"/><circle cx="608.5" cy="335.5" r="3.2"/><circle cx="634.5" cy="337.5" r="3.2"/><circle cx="659.5" cy="336.5" r="3.2"/><circle cx="685.5" cy="333.5" r="3.2"/><circle cx="692.5" cy="336.5" r="3.2"/></g><path d="M216.0 279.4 L217.5 277.1 L219.2 267.1 L221.5 267.5 L224.8 267.5 L228.1 266.5 L231.4 267.5 L234.7 266.7 L238.0 266.7 L241.5 266.7 L245.0 266.6 L250.6 258.8 L253.5 258.5 L256.3 256.4 L306.4 255.2 L332.5 284.8 L357.0 253.7 L383.5 252.8 L408.5 252.9 L434.4 251.4 L459.4 251.9 L485.5 249.6 L532.5 249.6 L557.6 250.7 L583.4 248.9 L608.5 252.6 L634.4 250.6 L659.4 251.6 L685.5 258.6 L692.4 257.9" stroke="#ff1493" stroke-width="2.7" fill="none" stroke-linejoin="round"/><g fill="#ff1493" stroke="#000" stroke-width="0.75"><circle cx="216.5" cy="279.5" r="3.2"/><circle cx="217.5" cy="277.5" r="3.2"/><circle cx="219.5" cy="267.5" r="3.2"/><circle cx="221.5" cy="267.5" r="3.2"/><circle cx="224.5" cy="267.5" r="3.2"/><circle cx="228.5" cy="266.5" r="3.2"/><circle cx="231.5" cy="267.5" r="3.2"/><circle cx="234.5" cy="266.5" r="3.2"/><circle cx="238.5" cy="266.5" r="3.2"/><circle cx="241.5" cy="266.5" r="3.2"/><circle cx="245.5" cy="266.5" r="3.2"/><circle cx="250.5" cy="258.5" r="3.2"/><circle cx="253.5" cy="258.5" r="3.2"/><circle cx="256.5" cy="256.5" r="3.2"/><circle cx="306.5" cy="255.5" r="3.2"/><circle cx="332.5" cy="284.5" r="3.2"/><circle cx="357.5" cy="253.5" r="3.2"/><circle cx="383.5" cy="252.5" r="3.2"/><circle cx="408.5" cy="252.5" r="3.2"/><circle cx="434.5" cy="251.5" r="3.2"/><circle cx="459.5" cy="251.5" r="3.2"/><circle cx="485.5" cy="249.5" r="3.2"/><circle cx="532.5" cy="249.5" r="3.2"/><circle cx="557.5" cy="250.5" r="3.2"/><circle cx="583.5" cy="248.5" r="3.2"/><circle cx="608.5" cy="252.5" r="3.2"/><circle cx="634.5" cy="250.5" r="3.2"/><circle cx="659.5" cy="251.5" r="3.2"/><circle cx="685.5" cy="258.5" r="3.2"/><circle cx="692.5" cy="257.5" r="3.2"/></g><path d="M216.3 231.7 L218.2 251.9 L219.6 276.3 L222.8 275.1 L226.5 277.1 L228.5 273.7 L233.8 276.5 L236.3 274.7 L240.3 275.3 L244.9 276.8 L246.0 277.8 L250.6 260.5 L252.5 260.8 L256.5 260.1 L306.4 236.5 L332.5 226.4 L357.0 235.4 L383.5 319.4 L408.5 288.0 L434.4 281.5 L459.4 291.1 L485.5 300.0 L532.5 256.4 L557.6 314.9 L583.4 320.5 L608.5 321.9 L634.4 322.5 L659.4 321.2 L685.5 322.8 L692.4 322.1" stroke="#ff7f50" stroke-width="2.7" fill="none" stroke-linejoin="round"/><g fill="#ff7f50" stroke="#000" stroke-width="0.75"><circle cx="216.5" cy="231.5" r="3.2"/><circle cx="218.5" cy="251.5" r="3.2"/><circle cx="219.5" cy="276.5" r="3.2"/><circle cx="222.5" cy="275.5" r="3.2"/><circle cx="226.5" cy="277.5" r="3.2"/><circle cx="228.5" cy="273.5" r="3.2"/><circle cx="233.5" cy="276.5" r="3.2"/><circle cx="236.5" cy="274.5" r="3.2"/><circle cx="240.5" cy="275.5" r="3.2"/><circle cx="244.5" cy="276.5" r="3.2"/><circle cx="246.5" cy="277.5" r="3.2"/><circle cx="250.5" cy="260.5" r="3.2"/><circle cx="252.5" cy="260.5" r="3.2"/><circle cx="256.5" cy="260.5" r="3.2"/><circle cx="306.5" cy="236.5" r="3.2"/><circle cx="332.5" cy="226.5" r="3.2"/><circle cx="357.5" cy="235.5" r="3.2"/><circle cx="383.5" cy="319.5" r="3.2"/><circle cx="408.5" cy="288.5" r="3.2"/><circle cx="434.5" cy="281.5" r="3.2"/><circle cx="459.5" cy="291.5" r="3.2"/><circle cx="485.5" cy="300.5" r="3.2"/><circle cx="532.5" cy="256.5" r="3.2"/><circle cx="557.5" cy="314.5" r="3.2"/><circle cx="583.5" cy="320.5" r="3.2"/><circle cx="608.5" cy="321.5" r="3.2"/><circle cx="634.5" cy="322.5" r="3.2"/><circle cx="659.5" cy="321.5" r="3.2"/><circle cx="685.5" cy="322.5" r="3.2"/><circle cx="692.5" cy="322.5" r="3.2"/></g><path d="M216.0 272.3 L217.5 270.8 L219.2 268.0 L221.5 268.6 L224.8 268.0 L228.1 267.8 L231.4 268.0 L234.7 267.8 L238.0 268.5 L241.5 268.3 L245.0 268.2 L250.6 260.2 L253.5 261.6 L256.3 260.7 L306.4 259.8 L332.5 289.1 L357.0 257.7 L383.5 259.8 L408.5 258.4 L434.4 258.3 L459.4 258.4 L485.5 256.8 L532.5 258.3 L557.6 255.9 L583.4 257.5 L608.5 256.5 L634.4 256.5 L659.4 254.5 L685.5 269.8 L692.4 266.7" stroke="#cd853f" stroke-width="2.7" fill="none" stroke-linejoin="round"/><g fill="#cd853f" stroke="#000" stroke-width="0.75"><circle cx="216.5" cy="272.5" r="3.2"/><circle cx="217.5" cy="270.5" r="3.2"/><circle cx="219.5" cy="268.5" r="3.2"/><circle cx="221.5" cy="268.5" r="3.2"/><circle cx="224.5" cy="267.5" r="3.2"/><circle cx="228.5" cy="267.5" r="3.2"/><circle cx="231.5" cy="268.5" r="3.2"/><circle cx="234.5" cy="267.5" r="3.2"/><circle cx="238.5" cy="268.5" r="3.2"/><circle cx="241.5" cy="268.5" r="3.2"/><circle cx="245.5" cy="268.5" r="3.2"/><circle cx="250.5" cy="260.5" r="3.2"/><circle cx="253.5" cy="261.5" r="3.2"/><circle cx="256.5" cy="260.5" r="3.2"/><circle cx="306.5" cy="259.5" r="3.2"/><circle cx="332.5" cy="289.5" r="3.2"/><circle cx="357.5" cy="257.5" r="3.2"/><circle cx="383.5" cy="259.5" r="3.2"/><circle cx="408.5" cy="258.5" r="3.2"/><circle cx="434.5" cy="258.5" r="3.2"/><circle cx="459.5" cy="258.5" r="3.2"/><circle cx="485.5" cy="256.5" r="3.2"/><circle cx="532.5" cy="258.5" r="3.2"/><circle cx="557.5" cy="255.5" r="3.2"/><circle cx="583.5" cy="257.5" r="3.2"/><circle cx="608.5" cy="256.5" r="3.2"/><circle cx="634.5" cy="256.5" r="3.2"/><circle cx="659.5" cy="254.5" r="3.2"/><circle cx="685.5" cy="269.5" r="3.2"/><circle cx="692.5" cy="266.5" r="3.2"/></g><path d="M216.3 218.7 L218.2 243.2 L219.6 281.0 L222.2 277.3 L226.1 279.4 L228.4 278.0 L233.7 277.7 L236.7 276.9 L240.1 279.0 L244.8 281.4 L246.7 284.4 L250.6 261.0 L252.5 259.0 L256.5 257.9 L306.4 229.5 L332.5 219.8 L357.0 227.8 L383.5 330.8 L408.5 295.2 L434.4 284.6 L459.4 298.4 L485.5 308.9 L532.5 246.9 L557.6 327.2 L583.4 328.7 L608.5 331.9 L634.4 333.7 L659.4 331.3 L685.5 334.3 L692.4 333.6" stroke="#ff00ff" stroke-width="2.7" fill="none" stroke-linejoin="round"/><g fill="#ff00ff" stroke="#000" stroke-width="0.75"><circle cx="216.5" cy="218.5" r="3.2"/><circle cx="218.5" cy="243.5" r="3.2"/><circle cx="219.5" cy="281.5" r="3.2"/><circle cx="222.5" cy="277.5" r="3.2"/><circle cx="226.5" cy="279.5" r="3.2"/><circle cx="228.5" cy="277.5" r="3.2"/><circle cx="233.5" cy="277.5" r="3.2"/><circle cx="236.5" cy="276.5" r="3.2"/><circle cx="240.5" cy="278.5" r="3.2"/><circle cx="244.5" cy="281.5" r="3.2"/><circle cx="246.5" cy="284.5" r="3.2"/><circle cx="250.5" cy="261.5" r="3.2"/><circle cx="252.5" cy="259.5" r="3.2"/><circle cx="256.5" cy="257.5" r="3.2"/><circle cx="306.5" cy="229.5" r="3.2"/><circle cx="332.5" cy="219.5" r="3.2"/><circle cx="357.5" cy="227.5" r="3.2"/><circle cx="383.5" cy="330.5" r="3.2"/><circle cx="408.5" cy="295.5" r="3.2"/><circle cx="434.5" cy="284.5" r="3.2"/><circle cx="459.5" cy="298.5" r="3.2"/><circle cx="485.5" cy="308.5" r="3.2"/><circle cx="532.5" cy="246.5" r="3.2"/><circle cx="557.5" cy="327.5" r="3.2"/><circle cx="583.5" cy="328.5" r="3.2"/><circle cx="608.5" cy="331.5" r="3.2"/><circle cx="634.5" cy="333.5" r="3.2"/><circle cx="659.5" cy="331.5" r="3.2"/><circle cx="685.5" cy="334.5" r="3.2"/><circle cx="692.5" cy="333.5" r="3.2"/></g><path d="M216.0 275.6 L217.5 275.2 L219.2 267.0 L221.5 268.1 L224.8 268.2 L228.1 268.1 L231.4 267.8 L234.7 267.2 L238.0 268.2 L241.5 267.8 L245.0 267.1 L250.6 260.0 L253.5 260.4 L256.3 259.2 L306.4 256.8 L332.5 288.0 L357.0 255.8 L383.5 254.1 L408.5 253.4 L434.4 254.4 L459.4 254.5 L485.5 253.3 L532.5 253.6 L557.6 253.1 L583.4 252.3 L608.5 252.6 L634.4 253.1 L659.4 254.4 L685.5 264.5 L692.4 259.7" stroke="#7b68ee" stroke-width="2.7" fill="none" stroke-linejoin="round"/><g fill="#7b68ee" stroke="#000" stroke-width="0.75"><circle cx="216.5" cy="275.5" r="3.2"/><circle cx="217.5" cy="275.5" r="3.2"/><circle cx="219.5" cy="267.5" r="3.2"/><circle cx="221.5" cy="268.5" r="3.2"/><circle cx="224.5" cy="268.5" r="3.2"/><circle cx="228.5" cy="268.5" r="3.2"/><circle cx="231.5" cy="267.5" r="3.2"/><circle cx="234.5" cy="267.5" r="3.2"/><circle cx="238.5" cy="268.5" r="3.2"/><circle cx="241.5" cy="267.5" r="3.2"/><circle cx="245.5" cy="267.5" r="3.2"/><circle cx="250.5" cy="259.5" r="3.2"/><circle cx="253.5" cy="260.5" r="3.2"/><circle cx="256.5" cy="259.5" r="3.2"/><circle cx="306.5" cy="256.5" r="3.2"/><circle cx="332.5" cy="287.5" r="3.2"/><circle cx="357.5" cy="255.5" r="3.2"/><circle cx="383.5" cy="254.5" r="3.2"/><circle cx="408.5" cy="253.5" r="3.2"/><circle cx="434.5" cy="254.5" r="3.2"/><circle cx="459.5" cy="254.5" r="3.2"/><circle cx="485.5" cy="253.5" r="3.2"/><circle cx="532.5" cy="253.5" r="3.2"/><circle cx="557.5" cy="253.5" r="3.2"/><circle cx="583.5" cy="252.5" r="3.2"/><circle cx="608.5" cy="252.5" r="3.2"/><circle cx="634.5" cy="253.5" r="3.2"/><circle cx="659.5" cy="254.5" r="3.2"/><circle cx="685.5" cy="264.5" r="3.2"/><circle cx="692.5" cy="259.5" r="3.2"/></g><path d="M216.3 225.8 L218.2 252.4 L219.6 278.9 L222.1 275.0 L226.1 278.2 L228.5 278.1 L234.0 277.9 L236.3 277.2 L240.2 278.5 L244.7 278.8 L246.3 282.6 L250.6 260.6 L252.5 258.5 L256.5 260.4 L306.4 232.4 L332.5 222.8 L357.0 231.5 L383.5 326.7 L408.5 292.1 L434.4 283.2 L459.4 295.1 L485.5 308.2 L532.5 251.8 L557.6 324.2 L583.4 324.3 L608.5 327.4 L634.4 327.2 L659.4 327.7 L685.5 327.3 L692.4 330.8" stroke="#ff69b4" stroke-width="2.7" fill="none" stroke-linejoin="round"/><g fill="#ff69b4" stroke="#000" stroke-width="0.75"><circle cx="216.5" cy="225.5" r="3.2"/><circle cx="218.5" cy="252.5" r="3.2"/><circle cx="219.5" cy="278.5" r="3.2"/><circle cx="222.5" cy="274.5" r="3.2"/><circle cx="226.5" cy="278.5" r="3.2"/><circle cx="228.5" cy="278.5" r="3.2"/><circle cx="234.5" cy="277.5" r="3.2"/><circle cx="236.5" cy="277.5" r="3.2"/><circle cx="240.5" cy="278.5" r="3.2"/><circle cx="244.5" cy="278.5" r="3.2"/><circle cx="246.5" cy="282.5" r="3.2"/><circle cx="250.5" cy="260.5" r="3.2"/><circle cx="252.5" cy="258.5" r="3.2"/><circle cx="256.5" cy="260.5" r="3.2"/><circle cx="306.5" cy="232.5" r="3.2"/><circle cx="332.5" cy="222.5" r="3.2"/><circle cx="357.5" cy="231.5" r="3.2"/><circle cx="383.5" cy="326.5" r="3.2"/><circle cx="408.5" cy="292.5" r="3.2"/><circle cx="434.5" cy="283.5" r="3.2"/><circle cx="459.5" cy="295.5" r="3.2"/><circle cx="485.5" cy="308.5" r="3.2"/><circle cx="532.5" cy="251.5" r="3.2"/><circle cx="557.5" cy="324.5" r="3.2"/><circle cx="583.5" cy="324.5" r="3.2"/><circle cx="608.5" cy="327.5" r="3.2"/><circle cx="634.5" cy="327.5" r="3.2"/><circle cx="659.5" cy="327.5" r="3.2"/><circle cx="685.5" cy="327.5" r="3.2"/><circle cx="692.5" cy="330.5" r="3.2"/></g><path d="M216.0 281.9 L217.5 274.7 L219.2 268.0 L221.5 266.4 L224.8 267.2 L228.1 267.2 L231.4 267.1 L234.7 267.1 L238.0 267.1 L241.5 266.8 L245.0 266.9 L250.6 259.4 L253.5 257.2 L256.3 255.7 L306.4 254.5 L332.5 283.8 L357.0 251.8 L383.5 250.5 L408.5 250.0 L434.4 250.6 L459.4 249.1 L485.5 248.8 L532.5 248.6 L557.6 249.6 L583.4 248.8 L608.5 250.0 L634.4 250.4 L659.4 252.0 L685.5 257.2 L692.4 255.5" stroke="#ff69b4" stroke-width="2.7" fill="none" stroke-linejoin="round"/><g fill="#ff69b4" stroke="#000" stroke-width="0.75"><circle cx="216.5" cy="281.5" r="3.2"/><circle cx="217.5" cy="274.5" r="3.2"/><circle cx="219.5" cy="267.5" r="3.2"/><circle cx="221.5" cy="266.5" r="3.2"/><circle cx="224.5" cy="267.5" r="3.2"/><circle cx="228.5" cy="267.5" r="3.2"/><circle cx="231.5" cy="267.5" r="3.2"/><circle cx="234.5" cy="267.5" r="3.2"/><circle cx="238.5" cy="267.5" r="3.2"/><circle cx="241.5" cy="266.5" r="3.2"/><circle cx="245.5" cy="266.5" r="3.2"/><circle cx="250.5" cy="259.5" r="3.2"/><circle cx="253.5" cy="257.5" r="3.2"/><circle cx="256.5" cy="255.5" r="3.2"/><circle cx="306.5" cy="254.5" r="3.2"/><circle cx="332.5" cy="283.5" r="3.2"/><circle cx="357.5" cy="251.5" r="3.2"/><circle cx="383.5" cy="250.5" r="3.2"/><circle cx="408.5" cy="250.5" r="3.2"/><circle cx="434.5" cy="250.5" r="3.2"/><circle cx="459.5" cy="249.5" r="3.2"/><circle cx="485.5" cy="248.5" r="3.2"/><circle cx="532.5" cy="248.5" r="3.2"/><circle cx="557.5" cy="249.5" r="3.2"/><circle cx="583.5" cy="248.5" r="3.2"/><circle cx="608.5" cy="249.5" r="3.2"/><circle cx="634.5" cy="250.5" r="3.2"/><circle cx="659.5" cy="251.5" r="3.2"/><circle cx="685.5" cy="257.5" r="3.2"/><circle cx="692.5" cy="255.5" r="3.2"/></g><path d="M216.3 209.6 L218.2 236.6 L219.6 282.0 L222.4 278.8 L226.4 284.8 L228.7 281.8 L234.0 281.5 L236.6 279.9 L240.3 281.6 L244.4 287.2 L246.7 290.2 L250.6 257.9 L252.5 257.2 L256.5 257.5 L306.4 221.5 L332.5 211.6 L357.0 225.1 L383.5 337.7 L408.5 297.9 L434.4 286.3 L459.4 304.0 L485.5 318.0 L532.5 243.1 L557.6 337.4 L583.4 340.6 L608.5 339.0 L634.4 339.6 L659.4 339.7 L685.5 341.1 L692.4 342.5" stroke="#ffffe0" stroke-width="2.7" fill="none" stroke-linejoin="round"/><g fill="#ffffe0" stroke="#000" stroke-width="0.75"><circle cx="216.5" cy="209.5" r="3.2"/><circle cx="218.5" cy="236.5" r="3.2"/><circle cx="219.5" cy="281.5" r="3.2"/><circle cx="222.5" cy="278.5" r="3.2"/><circle cx="226.5" cy="284.5" r="3.2"/><circle cx="228.5" cy="281.5" r="3.2"/><circle cx="233.5" cy="281.5" r="3.2"/><circle cx="236.5" cy="279.5" r="3.2"/><circle cx="240.5" cy="281.5" r="3.2"/><circle cx="244.5" cy="287.5" r="3.2"/><circle cx="246.5" cy="290.5" r="3.2"/><circle cx="250.5" cy="257.5" r="3.2"/><circle cx="252.5" cy="257.5" r="3.2"/><circle cx="256.5" cy="257.5" r="3.2"/><circle cx="306.5" cy="221.5" r="3.2"/><circle cx="332.5" cy="211.5" r="3.2"/><circle cx="357.5" cy="225.5" r="3.2"/><circle cx="383.5" cy="337.5" r="3.2"/><circle cx="408.5" cy="297.5" r="3.2"/><circle cx="434.5" cy="286.5" r="3.2"/><circle cx="459.5" cy="303.5" r="3.2"/><circle cx="485.5" cy="318.5" r="3.2"/><circle cx="532.5" cy="243.5" r="3.2"/><circle cx="557.5" cy="337.5" r="3.2"/><circle cx="583.5" cy="340.5" r="3.2"/><circle cx="608.5" cy="338.5" r="3.2"/><circle cx="634.5" cy="339.5" r="3.2"/><circle cx="659.5" cy="339.5" r="3.2"/><circle cx="685.5" cy="341.5" r="3.2"/><circle cx="692.5" cy="342.5" r="3.2"/></g><path d="M216.0 293.8 L217.5 283.8 L219.2 267.5 L221.5 265.1 L224.8 265.0 L228.1 265.1 L231.4 265.0 L234.7 264.7 L238.0 264.7 L241.5 264.7 L245.0 265.1 L250.6 252.3 L253.5 249.8 L256.3 249.7 L306.4 249.5 L332.5 273.1 L357.0 244.8 L383.5 239.2 L408.5 243.3 L434.4 239.0 L459.4 240.1 L485.5 236.9 L532.5 239.4 L557.6 238.1 L583.4 237.4 L608.5 243.4 L634.4 244.9 L659.4 246.6 L685.5 241.8 L692.4 241.0" stroke="#3cb371" stroke-width="2.7" fill="none" stroke-linejoin="round"/><g fill="#3cb371" stroke="#000" stroke-width="0.75"><circle cx="216.5" cy="293.5" r="3.2"/><circle cx="217.5" cy="283.5" r="3.2"/><circle cx="219.5" cy="267.5" r="3.2"/><circle cx="221.5" cy="265.5" r="3.2"/><circle cx="224.5" cy="264.5" r="3.2"/><circle cx="228.5" cy="265.5" r="3.2"/><circle cx="231.5" cy="265.5" r="3.2"/><circle cx="234.5" cy="264.5" r="3.2"/><circle cx="238.5" cy="264.5" r="3.2"/><circle cx="241.5" cy="264.5" r="3.2"/><circle cx="245.5" cy="265.5" r="3.2"/><circle cx="250.5" cy="252.5" r="3.2"/><circle cx="253.5" cy="249.5" r="3.2"/><circle cx="256.5" cy="249.5" r="3.2"/><circle cx="306.5" cy="249.5" r="3.2"/><circle cx="332.5" cy="273.5" r="3.2"/><circle cx="357.5" cy="244.5" r="3.2"/><circle cx="383.5" cy="239.5" r="3.2"/><circle cx="408.5" cy="243.5" r="3.2"/><circle cx="434.5" cy="238.5" r="3.2"/><circle cx="459.5" cy="240.5" r="3.2"/><circle cx="485.5" cy="236.5" r="3.2"/><circle cx="532.5" cy="239.5" r="3.2"/><circle cx="557.5" cy="238.5" r="3.2"/><circle cx="583.5" cy="237.5" r="3.2"/><circle cx="608.5" cy="243.5" r="3.2"/><circle cx="634.5" cy="244.5" r="3.2"/><circle cx="659.5" cy="246.5" r="3.2"/><circle cx="685.5" cy="241.5" r="3.2"/><circle cx="692.5" cy="241.5" r="3.2"/></g><path d="M216.3 241.4 L218.2 257.2 L219.6 275.8 L222.1 271.5 L226.5 273.4 L228.6 272.3 L233.7 271.6 L236.9 272.1 L240.2 271.8 L244.2 274.1 L246.4 274.7 L250.6 261.0 L252.5 262.7 L256.5 260.9 L306.4 242.8 L332.5 229.1 L357.0 238.4 L383.5 310.5 L408.5 284.5 L434.4 281.3 L459.4 287.9 L485.5 294.9 L532.5 258.8 L557.6 310.5 L583.4 314.0 L608.5 313.5 L634.4 316.5 L659.4 316.0 L685.5 316.5 L692.4 319.0" stroke="#9400d3" stroke-width="2.7" fill="none" stroke-linejoin="round"/><g fill="#9400d3" stroke="#000" stroke-width="0.75"><circle cx="216.5" cy="241.5" r="3.2"/><circle cx="218.5" cy="257.5" r="3.2"/><circle cx="219.5" cy="275.5" r="3.2"/><circle cx="222.5" cy="271.5" r="3.2"/><circle cx="226.5" cy="273.5" r="3.2"/><circle cx="228.5" cy="272.5" r="3.2"/><circle cx="233.5" cy="271.5" r="3.2"/><circle cx="236.5" cy="272.5" r="3.2"/><circle cx="240.5" cy="271.5" r="3.2"/><circle cx="244.5" cy="274.5" r="3.2"/><circle cx="246.5" cy="274.5" r="3.2"/><circle cx="250.5" cy="260.5" r="3.2"/><circle cx="252.5" cy="262.5" r="3.2"/><circle cx="256.5" cy="260.5" r="3.2"/><circle cx="306.5" cy="242.5" r="3.2"/><circle cx="332.5" cy="229.5" r="3.2"/><circle cx="357.5" cy="238.5" r="3.2"/><circle cx="383.5" cy="310.5" r="3.2"/><circle cx="408.5" cy="284.5" r="3.2"/><circle cx="434.5" cy="281.5" r="3.2"/><circle cx="459.5" cy="287.5" r="3.2"/><circle cx="485.5" cy="294.5" r="3.2"/><circle cx="532.5" cy="258.5" r="3.2"/><circle cx="557.5" cy="310.5" r="3.2"/><circle cx="583.5" cy="314.5" r="3.2"/><circle cx="608.5" cy="313.5" r="3.2"/><circle cx="634.5" cy="316.5" r="3.2"/><circle cx="659.5" cy="316.5" r="3.2"/><circle cx="685.5" cy="316.5" r="3.2"/><circle cx="692.5" cy="319.5" r="3.2"/></g><path d="M216.0 294.9 L217.5 284.4 L219.2 268.8 L221.5 264.6 L224.8 265.2 L228.1 264.7 L231.4 264.5 L234.7 264.0 L238.0 264.1 L241.5 264.2 L245.0 265.2 L250.6 253.7 L253.5 249.0 L256.3 250.0 L306.4 248.6 L332.5 273.1 L357.0 244.6 L383.5 238.8 L408.5 242.4 L434.4 236.9 L459.4 236.9 L485.5 235.5 L532.5 239.4 L557.6 239.2 L583.4 236.6 L608.5 242.3 L634.4 245.4 L659.4 245.8 L685.5 240.4 L692.4 240.3" stroke="#32cd32" stroke-width="2.7" fill="none" stroke-linejoin="round"/><g fill="#32cd32" stroke="#000" stroke-width="0.75"><circle cx="216.5" cy="294.5" r="3.2"/><circle cx="217.5" cy="284.5" r="3.2"/><circle cx="219.5" cy="268.5" r="3.2"/><circle cx="221.5" cy="264.5" r="3.2"/><circle cx="224.5" cy="265.5" r="3.2"/><circle cx="228.5" cy="264.5" r="3.2"/><circle cx="231.5" cy="264.5" r="3.2"/><circle cx="234.5" cy="264.5" r="3.2"/><circle cx="238.5" cy="264.5" r="3.2"/><circle cx="241.5" cy="264.5" r="3.2"/><circle cx="245.5" cy="265.5" r="3.2"/><circle cx="250.5" cy="253.5" r="3.2"/><circle cx="253.5" cy="249.5" r="3.2"/><circle cx="256.5" cy="250.5" r="3.2"/><circle cx="306.5" cy="248.5" r="3.2"/><circle cx="332.5" cy="273.5" r="3.2"/><circle cx="357.5" cy="244.5" r="3.2"/><circle cx="383.5" cy="238.5" r="3.2"/><circle cx="408.5" cy="242.5" r="3.2"/><circle cx="434.5" cy="236.5" r="3.2"/><circle cx="459.5" cy="236.5" r="3.2"/><circle cx="485.5" cy="235.5" r="3.2"/><circle cx="532.5" cy="239.5" r="3.2"/><circle cx="557.5" cy="239.5" r="3.2"/><circle cx="583.5" cy="236.5" r="3.2"/><circle cx="608.5" cy="242.5" r="3.2"/><circle cx="634.5" cy="245.5" r="3.2"/><circle cx="659.5" cy="245.5" r="3.2"/><circle cx="685.5" cy="240.5" r="3.2"/><circle cx="692.5" cy="240.5" r="3.2"/></g><path d="M434.4 279.1 L459.4 284.7 L485.5 292.0 L532.5 262.3 L557.6 306.0 L583.4 309.6 L608.5 302.5 L634.4 312.3 L659.4 310.0 L685.5 312.3 L692.4 314.3" stroke="#ff1493" stroke-width="2.7" fill="none" stroke-linejoin="round"/><g fill="#ff1493" stroke="#000" stroke-width="0.75"><circle cx="434.5" cy="279.5" r="3.2"/><circle cx="459.5" cy="284.5" r="3.2"/><circle cx="485.5" cy="292.5" r="3.2"/><circle cx="532.5" cy="262.5" r="3.2"/><circle cx="557.5" cy="306.5" r="3.2"/><circle cx="583.5" cy="309.5" r="3.2"/><circle cx="608.5" cy="302.5" r="3.2"/><circle cx="634.5" cy="312.5" r="3.2"/><circle cx="659.5" cy="310.5" r="3.2"/><circle cx="685.5" cy="312.5" r="3.2"/><circle cx="692.5" cy="314.5" r="3.2"/></g><path d="M216.0 277.1 L217.5 273.0 L219.2 267.9 L221.5 267.4 L224.8 267.2 L228.1 268.2 L231.4 267.9 L234.7 267.2 L238.0 268.0 L241.5 267.9 L245.0 267.8 L250.6 260.8 L253.5 260.2 L256.3 259.5 L306.4 258.3 L332.5 288.5 L357.0 257.3 L383.5 254.9 L408.5 254.1 L434.4 254.6 L459.4 255.1 L485.5 254.4 L532.5 255.3 L557.6 253.6 L583.4 252.8 L608.5 253.7 L634.4 253.9 L659.4 253.0 L685.5 264.6 L692.4 262.3" stroke="#4b0082" stroke-width="2.7" fill="none" stroke-linejoin="round"/><g fill="#4b0082" stroke="#000" stroke-width="0.75"><circle cx="216.5" cy="277.5" r="3.2"/><circle cx="217.5" cy="273.5" r="3.2"/><circle cx="219.5" cy="267.5" r="3.2"/><circle cx="221.5" cy="267.5" r="3.2"/><circle cx="224.5" cy="267.5" r="3.2"/><circle cx="228.5" cy="268.5" r="3.2"/><circle cx="231.5" cy="267.5" r="3.2"/><circle cx="234.5" cy="267.5" r="3.2"/><circle cx="238.5" cy="268.5" r="3.2"/><circle cx="241.5" cy="267.5" r="3.2"/><circle cx="245.5" cy="267.5" r="3.2"/><circle cx="250.5" cy="260.5" r="3.2"/><circle cx="253.5" cy="260.5" r="3.2"/><circle cx="256.5" cy="259.5" r="3.2"/><circle cx="306.5" cy="258.5" r="3.2"/><circle cx="332.5" cy="288.5" r="3.2"/><circle cx="357.5" cy="257.5" r="3.2"/><circle cx="383.5" cy="254.5" r="3.2"/><circle cx="408.5" cy="254.5" r="3.2"/><circle cx="434.5" cy="254.5" r="3.2"/><circle cx="459.5" cy="255.5" r="3.2"/><circle cx="485.5" cy="254.5" r="3.2"/><circle cx="532.5" cy="255.5" r="3.2"/><circle cx="557.5" cy="253.5" r="3.2"/><circle cx="583.5" cy="252.5" r="3.2"/><circle cx="608.5" cy="253.5" r="3.2"/><circle cx="634.5" cy="253.5" r="3.2"/><circle cx="659.5" cy="252.5" r="3.2"/><circle cx="685.5" cy="264.5" r="3.2"/><circle cx="692.5" cy="262.5" r="3.2"/></g><path d="M216.3 232.0 L218.2 252.9 L219.6 279.0 L222.4 274.4 L226.3 275.3 L228.4 276.2 L234.2 276.6 L236.5 275.0 L240.3 274.6 L244.3 277.8 L246.6 280.4 L250.6 261.5 L252.5 261.6 L256.5 261.9 L306.4 245.4 L332.5 230.4 L357.0 240.8 L383.5 318.7 L408.5 287.8 L434.4 282.7 L459.4 291.9 L485.5 303.1 L532.5 254.5 L557.6 314.6 L583.4 321.4 L608.5 321.2 L634.4 324.7 L659.4 320.5 L685.5 325.0 L692.4 326.3" stroke="#8b1a1a" stroke-width="2.7" fill="none" stroke-linejoin="round"/><g fill="#8b1a1a" stroke="#000" stroke-width="0.75"><circle cx="216.5" cy="232.5" r="3.2"/><circle cx="218.5" cy="252.5" r="3.2"/><circle cx="219.5" cy="279.5" r="3.2"/><circle cx="222.5" cy="274.5" r="3.2"/><circle cx="226.5" cy="275.5" r="3.2"/><circle cx="228.5" cy="276.5" r="3.2"/><circle cx="234.5" cy="276.5" r="3.2"/><circle cx="236.5" cy="274.5" r="3.2"/><circle cx="240.5" cy="274.5" r="3.2"/><circle cx="244.5" cy="277.5" r="3.2"/><circle cx="246.5" cy="280.5" r="3.2"/><circle cx="250.5" cy="261.5" r="3.2"/><circle cx="252.5" cy="261.5" r="3.2"/><circle cx="256.5" cy="261.5" r="3.2"/><circle cx="306.5" cy="245.5" r="3.2"/><circle cx="332.5" cy="230.5" r="3.2"/><circle cx="357.5" cy="240.5" r="3.2"/><circle cx="383.5" cy="318.5" r="3.2"/><circle cx="408.5" cy="287.5" r="3.2"/><circle cx="434.5" cy="282.5" r="3.2"/><circle cx="459.5" cy="291.5" r="3.2"/><circle cx="485.5" cy="303.5" r="3.2"/><circle cx="532.5" cy="254.5" r="3.2"/><circle cx="557.5" cy="314.5" r="3.2"/><circle cx="583.5" cy="321.5" r="3.2"/><circle cx="608.5" cy="321.5" r="3.2"/><circle cx="634.5" cy="324.5" r="3.2"/><circle cx="659.5" cy="320.5" r="3.2"/><circle cx="685.5" cy="324.5" r="3.2"/><circle cx="692.5" cy="326.5" r="3.2"/></g><path d="M216.0 284.5 L217.5 278.2 L219.2 268.8 L221.5 266.9 L224.8 266.6 L228.1 265.9 L231.4 265.8 L234.7 266.3 L238.0 266.4 L241.5 266.3 L245.0 265.8 L250.6 256.6 L253.5 255.1 L256.3 253.9 L306.4 252.1 L332.5 281.0 L357.0 249.8 L383.5 248.2 L408.5 248.2 L434.4 248.0 L459.4 246.4 L485.5 246.4 L532.5 247.0 L557.6 246.8 L583.4 246.0 L608.5 248.9 L634.4 250.2 L659.4 250.5 L685.5 255.0 L692.4 252.4" stroke="#db7093" stroke-width="2.7" fill="none" stroke-linejoin="round"/><g fill="#db7093" stroke="#000" stroke-width="0.75"><circle cx="216.5" cy="284.5" r="3.2"/><circle cx="217.5" cy="278.5" r="3.2"/><circle cx="219.5" cy="268.5" r="3.2"/><circle cx="221.5" cy="266.5" r="3.2"/><circle cx="224.5" cy="266.5" r="3.2"/><circle cx="228.5" cy="265.5" r="3.2"/><circle cx="231.5" cy="265.5" r="3.2"/><circle cx="234.5" cy="266.5" r="3.2"/><circle cx="238.5" cy="266.5" r="3.2"/><circle cx="241.5" cy="266.5" r="3.2"/><circle cx="245.5" cy="265.5" r="3.2"/><circle cx="250.5" cy="256.5" r="3.2"/><circle cx="253.5" cy="255.5" r="3.2"/><circle cx="256.5" cy="253.5" r="3.2"/><circle cx="306.5" cy="252.5" r="3.2"/><circle cx="332.5" cy="281.5" r="3.2"/><circle cx="357.5" cy="249.5" r="3.2"/><circle cx="383.5" cy="248.5" r="3.2"/><circle cx="408.5" cy="248.5" r="3.2"/><circle cx="434.5" cy="247.5" r="3.2"/><circle cx="459.5" cy="246.5" r="3.2"/><circle cx="485.5" cy="246.5" r="3.2"/><circle cx="532.5" cy="246.5" r="3.2"/><circle cx="557.5" cy="246.5" r="3.2"/><circle cx="583.5" cy="245.5" r="3.2"/><circle cx="608.5" cy="248.5" r="3.2"/><circle cx="634.5" cy="250.5" r="3.2"/><circle cx="659.5" cy="250.5" r="3.2"/><circle cx="685.5" cy="254.5" r="3.2"/><circle cx="692.5" cy="252.5" r="3.2"/></g><path d="M216.3 189.5 L218.2 223.8 L219.6 281.4 L222.6 285.7 L226.2 290.3 L228.2 284.2 L234.1 286.5 L236.4 285.0 L240.4 289.4 L244.8 294.7 L246.7 303.2 L250.6 255.2 L252.5 248.5 L256.5 250.2 L306.4 187.2 L332.5 139.2 L357.0 197.8 L383.5 352.2 L408.5 306.4 L434.4 289.8 L459.4 313.8 L485.5 334.9 L532.5 230.8 L557.6 354.7 L583.4 357.3 L608.5 356.8 L634.4 356.4 L659.4 359.6 L685.5 360.6 L692.4 361.2" stroke="#00ff00" stroke-width="2.7" fill="none" stroke-linejoin="round"/><g fill="#00ff00" stroke="#000" stroke-width="0.75"><circle cx="216.5" cy="189.5" r="3.2"/><circle cx="218.5" cy="223.5" r="3.2"/><circle cx="219.5" cy="281.5" r="3.2"/><circle cx="222.5" cy="285.5" r="3.2"/><circle cx="226.5" cy="290.5" r="3.2"/><circle cx="228.5" cy="284.5" r="3.2"/><circle cx="234.5" cy="286.5" r="3.2"/><circle cx="236.5" cy="285.5" r="3.2"/><circle cx="240.5" cy="289.5" r="3.2"/><circle cx="244.5" cy="294.5" r="3.2"/><circle cx="246.5" cy="303.5" r="3.2"/><circle cx="250.5" cy="255.5" r="3.2"/><circle cx="252.5" cy="248.5" r="3.2"/><circle cx="256.5" cy="250.5" r="3.2"/><circle cx="306.5" cy="187.5" r="3.2"/><circle cx="332.5" cy="139.5" r="3.2"/><circle cx="357.5" cy="197.5" r="3.2"/><circle cx="383.5" cy="352.5" r="3.2"/><circle cx="408.5" cy="306.5" r="3.2"/><circle cx="434.5" cy="289.5" r="3.2"/><circle cx="459.5" cy="313.5" r="3.2"/><circle cx="485.5" cy="334.5" r="3.2"/><circle cx="532.5" cy="230.5" r="3.2"/><circle cx="557.5" cy="354.5" r="3.2"/><circle cx="583.5" cy="357.5" r="3.2"/><circle cx="608.5" cy="356.5" r="3.2"/><circle cx="634.5" cy="356.5" r="3.2"/><circle cx="659.5" cy="359.5" r="3.2"/><circle cx="685.5" cy="360.5" r="3.2"/><circle cx="692.5" cy="361.5" r="3.2"/></g><path d="M216.0 298.4 L217.5 284.4 L219.2 268.5 L221.5 263.8 L224.8 264.4 L228.1 264.0 L231.4 263.5 L234.7 264.0 L238.0 264.2 L241.5 264.4 L245.0 264.3 L250.6 254.5 L253.0 251.5 L256.3 251.2 L306.4 246.6 L332.5 270.4 L357.0 242.1 L383.5 236.0 L408.5 243.0 L434.4 240.0 L459.4 241.0 L485.5 243.0 L532.5 236.0 L557.6 239.0 L583.4 234.0 L608.5 240.6 L634.4 242.5 L659.4 244.3 L685.5 237.5 L692.4 246.0" stroke="#800000" stroke-width="2.7" fill="none" stroke-linejoin="round"/><g fill="#800000" stroke="#000" stroke-width="0.75"><circle cx="216.5" cy="298.5" r="3.2"/><circle cx="217.5" cy="284.5" r="3.2"/><circle cx="219.5" cy="268.5" r="3.2"/><circle cx="221.5" cy="263.5" r="3.2"/><circle cx="224.5" cy="264.5" r="3.2"/><circle cx="228.5" cy="263.5" r="3.2"/><circle cx="231.5" cy="263.5" r="3.2"/><circle cx="234.5" cy="263.5" r="3.2"/><circle cx="238.5" cy="264.5" r="3.2"/><circle cx="241.5" cy="264.5" r="3.2"/><circle cx="245.5" cy="264.5" r="3.2"/><circle cx="250.5" cy="254.5" r="3.2"/><circle cx="253.5" cy="251.5" r="3.2"/><circle cx="256.5" cy="251.5" r="3.2"/><circle cx="306.5" cy="246.5" r="3.2"/><circle cx="332.5" cy="270.5" r="3.2"/><circle cx="357.5" cy="242.5" r="3.2"/><circle cx="383.5" cy="236.5" r="3.2"/><circle cx="408.5" cy="243.5" r="3.2"/><circle cx="434.5" cy="240.5" r="3.2"/><circle cx="459.5" cy="241.5" r="3.2"/><circle cx="485.5" cy="243.5" r="3.2"/><circle cx="532.5" cy="236.5" r="3.2"/><circle cx="557.5" cy="239.5" r="3.2"/><circle cx="583.5" cy="234.5" r="3.2"/><circle cx="608.5" cy="240.5" r="3.2"/><circle cx="634.5" cy="242.5" r="3.2"/><circle cx="659.5" cy="244.5" r="3.2"/><circle cx="685.5" cy="237.5" r="3.2"/><circle cx="692.5" cy="246.5" r="3.2"/></g><path d="M216.3 193.0 L218.2 226.3 L219.6 283.4 L222.7 282.2 L226.0 289.3 L228.2 283.8 L233.8 286.4 L236.4 283.1 L240.2 287.5 L244.3 292.4 L246.5 298.5 L250.6 253.6 L252.5 250.0 L256.5 250.1 L306.4 185.4 L332.5 139.8 L357.0 197.0 L383.5 350.5 L408.5 303.8 L434.4 289.4 L459.4 311.7 L485.5 329.9 L532.5 231.6 L557.6 350.0 L583.4 354.3 L608.5 356.1 L634.4 356.0 L659.4 354.3 L685.5 354.7 L692.4 357.2" stroke="#800000" stroke-width="2.7" fill="none" stroke-linejoin="round"/><g fill="#800000" stroke="#000" stroke-width="0.75"><circle cx="216.5" cy="193.5" r="3.2"/><circle cx="218.5" cy="226.5" r="3.2"/><circle cx="219.5" cy="283.5" r="3.2"/><circle cx="222.5" cy="282.5" r="3.2"/><circle cx="226.5" cy="289.5" r="3.2"/><circle cx="228.5" cy="283.5" r="3.2"/><circle cx="233.5" cy="286.5" r="3.2"/><circle cx="236.5" cy="283.5" r="3.2"/><circle cx="240.5" cy="287.5" r="3.2"/><circle cx="244.5" cy="292.5" r="3.2"/><circle cx="246.5" cy="298.5" r="3.2"/><circle cx="250.5" cy="253.5" r="3.2"/><circle cx="252.5" cy="250.5" r="3.2"/><circle cx="256.5" cy="250.5" r="3.2"/><circle cx="306.5" cy="185.5" r="3.2"/><circle cx="332.5" cy="139.5" r="3.2"/><circle cx="357.5" cy="197.5" r="3.2"/><circle cx="383.5" cy="350.5" r="3.2"/><circle cx="408.5" cy="303.5" r="3.2"/><circle cx="434.5" cy="289.5" r="3.2"/><circle cx="459.5" cy="311.5" r="3.2"/><circle cx="485.5" cy="329.5" r="3.2"/><circle cx="532.5" cy="231.5" r="3.2"/><circle cx="557.5" cy="350.5" r="3.2"/><circle cx="583.5" cy="354.5" r="3.2"/><circle cx="608.5" cy="356.5" r="3.2"/><circle cx="634.5" cy="355.5" r="3.2"/><circle cx="659.5" cy="354.5" r="3.2"/><circle cx="685.5" cy="354.5" r="3.2"/><circle cx="692.5" cy="357.5" r="3.2"/></g><path d="M216.0 296.8 L217.5 282.2 L219.2 267.9 L221.5 269.5 L224.8 269.3 L228.1 270.0 L231.4 269.6 L234.7 269.5 L238.0 269.3 L241.5 270.0 L245.0 269.0 L250.8 247.6 L253.5 246.0 L256.3 246.2" stroke="#00ff00" stroke-width="2.7" fill="none" stroke-linejoin="round"/><g fill="#00ff00" stroke="#000" stroke-width="0.75"><circle cx="216.5" cy="296.5" r="3.2"/><circle cx="217.5" cy="282.5" r="3.2"/><circle cx="219.5" cy="267.5" r="3.2"/><circle cx="221.5" cy="269.5" r="3.2"/><circle cx="224.5" cy="269.5" r="3.2"/><circle cx="228.5" cy="270.5" r="3.2"/><circle cx="231.5" cy="269.5" r="3.2"/><circle cx="234.5" cy="269.5" r="3.2"/><circle cx="238.5" cy="269.5" r="3.2"/><circle cx="241.5" cy="270.5" r="3.2"/><circle cx="245.5" cy="269.5" r="3.2"/><circle cx="250.5" cy="247.5" r="3.2"/><circle cx="253.5" cy="246.5" r="3.2"/><circle cx="256.5" cy="246.5" r="3.2"/></g><path d="M357.0 245.0 L383.5 240.0 L408.5 241.0 L434.4 234.5 L459.4 234.5 L485.5 233.0 L532.5 240.0 L557.6 242.0 L583.4 238.0 L608.5 244.0 L634.4 246.0 L659.4 248.0 L685.5 244.0 L692.4 241.0" stroke="#00ff00" stroke-width="2.7" fill="none" stroke-linejoin="round"/><g fill="#00ff00" stroke="#000" stroke-width="0.75"><circle cx="357.5" cy="245.5" r="3.2"/><circle cx="383.5" cy="240.5" r="3.2"/><circle cx="408.5" cy="241.5" r="3.2"/><circle cx="434.5" cy="234.5" r="3.2"/><circle cx="459.5" cy="234.5" r="3.2"/><circle cx="485.5" cy="233.5" r="3.2"/><circle cx="532.5" cy="240.5" r="3.2"/><circle cx="557.5" cy="242.5" r="3.2"/><circle cx="583.5" cy="238.5" r="3.2"/><circle cx="608.5" cy="244.5" r="3.2"/><circle cx="634.5" cy="246.5" r="3.2"/><circle cx="659.5" cy="248.5" r="3.2"/><circle cx="685.5" cy="244.5" r="3.2"/><circle cx="692.5" cy="241.5" r="3.2"/></g><path d="M216.3 197.4 L218.2 231.5 L219.5 282.0 L222.5 283.0 L226.4 289.3 L228.6 284.0 L234.0 284.5 L236.5 284.0 L244.6 292.4 L246.4 298.4 L250.6 255.5 L252.0 251.3 L256.5 251.0 L306.4 186.7 L332.5 142.0 L357.0 194.5 L383.5 343.0 L408.5 302.0 L434.4 286.0 L459.4 307.0 L485.5 330.0 L532.5 227.5 L557.6 347.0 L583.4 349.0 L608.5 350.0 L634.4 351.0 L659.4 350.0 L685.5 352.0 L692.4 354.0" stroke="#66cdaa" stroke-width="2.7" fill="none" stroke-linejoin="round"/><g fill="#66cdaa" stroke="#000" stroke-width="0.75"><circle cx="216.5" cy="197.5" r="3.2"/><circle cx="218.5" cy="231.5" r="3.2"/><circle cx="219.5" cy="282.5" r="3.2"/><circle cx="222.5" cy="283.5" r="3.2"/><circle cx="226.5" cy="289.5" r="3.2"/><circle cx="228.5" cy="284.5" r="3.2"/><circle cx="234.5" cy="284.5" r="3.2"/><circle cx="236.5" cy="284.5" r="3.2"/><circle cx="244.5" cy="292.5" r="3.2"/><circle cx="246.5" cy="298.5" r="3.2"/><circle cx="250.5" cy="255.5" r="3.2"/><circle cx="252.5" cy="251.5" r="3.2"/><circle cx="256.5" cy="251.5" r="3.2"/><circle cx="306.5" cy="186.5" r="3.2"/><circle cx="332.5" cy="142.5" r="3.2"/><circle cx="357.5" cy="194.5" r="3.2"/><circle cx="383.5" cy="343.5" r="3.2"/><circle cx="408.5" cy="302.5" r="3.2"/><circle cx="434.5" cy="286.5" r="3.2"/><circle cx="459.5" cy="307.5" r="3.2"/><circle cx="485.5" cy="330.5" r="3.2"/><circle cx="532.5" cy="227.5" r="3.2"/><circle cx="557.5" cy="347.5" r="3.2"/><circle cx="583.5" cy="349.5" r="3.2"/><circle cx="608.5" cy="350.5" r="3.2"/><circle cx="634.5" cy="351.5" r="3.2"/><circle cx="659.5" cy="350.5" r="3.2"/><circle cx="685.5" cy="352.5" r="3.2"/><circle cx="692.5" cy="354.5" r="3.2"/></g><path d="M213.8 276.5 L290.4 288.9 L316.2 288.2 L340.5 285.2 L366.5 283.7 L391.5 282.7 L417.5 281.2 L442.6 281.2 L468.0 281.2 L515.5 279.0 L540.5 278.7 L566.5 278.5 L591.5 278.5 L617.5 278.0 L642.5 278.0 L668.3 278.0" stroke="#ff8c00" stroke-width="2.7" fill="none" stroke-linejoin="round"/><g fill="#ff8c00" stroke="#000" stroke-width="0.75"><circle cx="290.5" cy="288.5" r="3.2"/><circle cx="316.5" cy="288.5" r="3.2"/><circle cx="340.5" cy="285.5" r="3.2"/><circle cx="366.5" cy="283.5" r="3.2"/><circle cx="391.5" cy="282.5" r="3.2"/><circle cx="417.5" cy="281.5" r="3.2"/><circle cx="442.5" cy="281.5" r="3.2"/><circle cx="468.5" cy="281.5" r="3.2"/><circle cx="515.5" cy="279.5" r="3.2"/><circle cx="540.5" cy="278.5" r="3.2"/><circle cx="566.5" cy="278.5" r="3.2"/><circle cx="591.5" cy="278.5" r="3.2"/><circle cx="617.5" cy="278.5" r="3.2"/><circle cx="642.5" cy="278.5" r="3.2"/><circle cx="668.5" cy="278.5" r="3.2"/></g><path d="M213.8 276.5 L290.4 288.3 L316.2 287.6 L340.5 284.6 L366.5 283.1 L391.5 282.1 L417.5 280.6 L442.6 280.6 L468.0 280.6 L515.5 278.4 L540.5 278.1 L566.5 277.9 L591.5 277.9 L617.5 277.4 L642.5 277.4 L668.3 277.4" stroke="#d2b48c" stroke-width="2.7" fill="none" stroke-linejoin="round"/><g fill="#d2b48c" stroke="#000" stroke-width="0.75"><circle cx="290.5" cy="288.5" r="3.2"/><circle cx="316.5" cy="287.5" r="3.2"/><circle cx="340.5" cy="284.5" r="3.2"/><circle cx="366.5" cy="283.5" r="3.2"/><circle cx="391.5" cy="282.5" r="3.2"/><circle cx="417.5" cy="280.5" r="3.2"/><circle cx="442.5" cy="280.5" r="3.2"/><circle cx="468.5" cy="280.5" r="3.2"/><circle cx="515.5" cy="278.5" r="3.2"/><circle cx="540.5" cy="278.5" r="3.2"/><circle cx="566.5" cy="277.5" r="3.2"/><circle cx="591.5" cy="277.5" r="3.2"/><circle cx="617.5" cy="277.5" r="3.2"/><circle cx="642.5" cy="277.5" r="3.2"/><circle cx="668.5" cy="277.5" r="3.2"/></g><path d="M213.8 276.5 L290.4 288.0 L316.2 287.3 L340.5 284.3 L366.5 282.8 L391.5 281.8 L417.5 280.3 L442.6 280.3 L468.0 280.3 L515.5 278.1 L540.5 277.8 L566.5 277.6 L591.5 277.6 L617.5 277.1 L642.5 277.1 L668.3 277.1" stroke="#808000" stroke-width="2.7" fill="none" stroke-linejoin="round"/><g fill="#808000" stroke="#000" stroke-width="0.75"><circle cx="290.5" cy="288.5" r="3.2"/><circle cx="316.5" cy="287.5" r="3.2"/><circle cx="340.5" cy="284.5" r="3.2"/><circle cx="366.5" cy="282.5" r="3.2"/><circle cx="391.5" cy="281.5" r="3.2"/><circle cx="417.5" cy="280.5" r="3.2"/><circle cx="442.5" cy="280.5" r="3.2"/><circle cx="468.5" cy="280.5" r="3.2"/><circle cx="515.5" cy="278.5" r="3.2"/><circle cx="540.5" cy="277.5" r="3.2"/><circle cx="566.5" cy="277.5" r="3.2"/><circle cx="591.5" cy="277.5" r="3.2"/><circle cx="617.5" cy="277.5" r="3.2"/><circle cx="642.5" cy="277.5" r="3.2"/><circle cx="668.5" cy="277.5" r="3.2"/></g><path d="M213.8 277.0 L290.4 287.7 L316.2 287.0 L340.5 284.0 L366.5 282.5 L391.5 281.5 L417.5 280.0 L442.6 280.0 L468.0 280.0 L515.5 277.8 L540.5 277.5 L566.5 277.3 L591.5 277.3 L617.5 276.8 L642.5 276.8 L668.3 276.8" stroke="#da70d6" stroke-width="2.7" fill="none" stroke-linejoin="round"/><g stroke="#000" stroke-width="0.75"><circle cx="290.4" cy="287.7" r="3.2" fill="#da70d6"/><circle cx="316.2" cy="287" r="3.2" fill="#da70d6"/><circle cx="340.5" cy="284" r="3.2" fill="#da70d6"/><circle cx="366.5" cy="282.5" r="3.2" fill="#da70d6"/><circle cx="391.5" cy="281.5" r="3.2" fill="#808000"/><circle cx="417.5" cy="280" r="3.2" fill="#808000"/><circle cx="442.6" cy="280" r="3.2" fill="#cd853f"/><circle cx="468.0" cy="280" r="3.2" fill="#808000"/><circle cx="515.5" cy="277.8" r="3.2" fill="#dda0dd"/><circle cx="540.5" cy="277.5" r="3.2" fill="#808000"/><circle cx="566.5" cy="277.3" r="3.2" fill="#dda0dd"/><circle cx="591.5" cy="277.3" r="3.2" fill="#ffa500"/><circle cx="617.5" cy="276.8" r="3.2" fill="#556b2f"/><circle cx="642.5" cy="276.8" r="3.2" fill="#8b4513"/><circle cx="668.3" cy="276.8" r="3.2" fill="#808000"/></g><path d="M213.8 268.0 L290.4 265.0" stroke="#c0c0c0" stroke-width="2.7" fill="none" stroke-linecap="round"/><path d="M290.4 265.0 L316.2 263.5" stroke="#f5deb3" stroke-width="2.7" fill="none" stroke-linecap="round"/><path d="M316.2 263.5 L340.5 263.5" stroke="#d2b48c" stroke-width="2.7" fill="none" stroke-linecap="round"/><path d="M340.5 263.5 L366.5 262.0" stroke="#e6d8c0" stroke-width="2.7" fill="none" stroke-linecap="round"/><path d="M366.5 262.0 L391.5 261.5" stroke="#ffdab9" stroke-width="2.7" fill="none" stroke-linecap="round"/><path d="M391.5 261.5 L417.5 260.5" stroke="#e9b99a" stroke-width="2.7" fill="none" stroke-linecap="round"/><path d="M417.5 260.5 L442.6 260.0" stroke="#cd853f" stroke-width="2.7" fill="none" stroke-linecap="round"/><path d="M442.6 260.0 L468.0 259.5" stroke="#a0724a" stroke-width="2.7" fill="none" stroke-linecap="round"/><path d="M468.0 259.5 L515.5 260.0" stroke="#c0c0c0" stroke-width="2.7" fill="none" stroke-linecap="round"/><path d="M515.5 260.0 L540.5 259.5" stroke="#c0c0c0" stroke-width="2.7" fill="none" stroke-linecap="round"/><path d="M540.5 259.5 L566.5 259.3" stroke="#c0c0c0" stroke-width="2.7" fill="none" stroke-linecap="round"/><path d="M566.5 259.3 L591.5 259.3" stroke="#c0c0c0" stroke-width="2.7" fill="none" stroke-linecap="round"/><path d="M591.5 259.3 L617.5 259.0" stroke="#c0c0c0" stroke-width="2.7" fill="none" stroke-linecap="round"/><path d="M617.5 259.0 L642.5 258.0" stroke="#c0c0c0" stroke-width="2.7" fill="none" stroke-linecap="round"/><path d="M642.5 258.0 L668.3 258.0" stroke="#c0c0c0" stroke-width="2.7" fill="none" stroke-linecap="round"/><g stroke="#000" stroke-width="0.75"><circle cx="316.2" cy="263.5" r="3.2" fill="#f5deb3"/><circle cx="340.5" cy="263.5" r="3.2" fill="#696969"/><circle cx="366.5" cy="262" r="3.2" fill="#f5f5f5"/><circle cx="391.5" cy="261.5" r="3.2" fill="#fffacd"/><circle cx="417.5" cy="260.5" r="3.2" fill="#d3d3d3"/><circle cx="442.6" cy="260" r="3.2" fill="#cd853f"/><circle cx="468.0" cy="259.5" r="3.2" fill="#8b7355"/><circle cx="515.5" cy="260" r="3.2" fill="#c0c0c0"/><circle cx="540.5" cy="259.5" r="3.2" fill="#e8e8e8"/><circle cx="566.5" cy="259.3" r="3.2" fill="#d3d3d3"/><circle cx="591.5" cy="259.3" r="3.2" fill="#c0c0c0"/><circle cx="617.5" cy="259" r="3.2" fill="#f5deb3"/><circle cx="642.5" cy="258" r="3.2" fill="#c0c0c0"/><circle cx="668.3" cy="258" r="3.2" fill="#c0c0c0"/></g><path d="M213.8 270.6 L303.6 271.8 L328.5 272.4 L353.5 269.6 L379.5 270.4 L404.5 269.8 L430.2 268.7 L455.2 268.7 L481.5 270.6 L528.5 267.1 L553.5 268.1 L579.5 268.4 L604.7 268.6 L630.5 266.1 L655.5 265.4 L681.2 267.0" stroke="#2e8b57" stroke-width="2.7" fill="none" stroke-linejoin="round"/><g fill="#2e8b57" stroke="#000" stroke-width="0.75"><circle cx="303.5" cy="271.5" r="3.2"/><circle cx="328.5" cy="272.5" r="3.2"/><circle cx="353.5" cy="269.5" r="3.2"/><circle cx="379.5" cy="270.5" r="3.2"/><circle cx="404.5" cy="269.5" r="3.2"/><circle cx="430.5" cy="268.5" r="3.2"/><circle cx="455.5" cy="268.5" r="3.2"/><circle cx="481.5" cy="270.5" r="3.2"/><circle cx="528.5" cy="267.5" r="3.2"/><circle cx="553.5" cy="268.5" r="3.2"/><circle cx="579.5" cy="268.5" r="3.2"/><circle cx="604.5" cy="268.5" r="3.2"/><circle cx="630.5" cy="266.5" r="3.2"/><circle cx="655.5" cy="265.5" r="3.2"/><circle cx="681.5" cy="266.5" r="3.2"/></g><path d="M213.8 271.8 L303.6 275.2 L328.5 273.8 L353.5 272.0 L379.5 272.5 L404.5 271.6 L430.2 270.7 L455.2 270.8 L481.5 272.1 L528.5 268.3 L553.5 270.0 L579.5 269.8 L604.7 270.2 L630.5 268.4 L655.5 268.0 L681.2 269.1" stroke="#2f4f4f" stroke-width="2.7" fill="none" stroke-linejoin="round"/><g fill="#2f4f4f" stroke="#000" stroke-width="0.75"><circle cx="303.5" cy="275.5" r="3.2"/><circle cx="328.5" cy="273.5" r="3.2"/><circle cx="353.5" cy="272.5" r="3.2"/><circle cx="379.5" cy="272.5" r="3.2"/><circle cx="404.5" cy="271.5" r="3.2"/><circle cx="430.5" cy="270.5" r="3.2"/><circle cx="455.5" cy="270.5" r="3.2"/><circle cx="481.5" cy="272.5" r="3.2"/><circle cx="528.5" cy="268.5" r="3.2"/><circle cx="553.5" cy="269.5" r="3.2"/><circle cx="579.5" cy="269.5" r="3.2"/><circle cx="604.5" cy="270.5" r="3.2"/><circle cx="630.5" cy="268.5" r="3.2"/><circle cx="655.5" cy="268.5" r="3.2"/><circle cx="681.5" cy="269.5" r="3.2"/></g><path d="M213.8 271.2 L303.6 273.0 L328.5 273.7 L353.5 270.6 L379.5 270.8 L404.5 270.9 L430.2 269.6 L455.2 270.0 L481.5 271.5 L528.5 267.6 L553.5 268.1 L579.5 269.0 L604.7 269.9 L630.5 267.4 L655.5 267.0 L681.2 267.3" stroke="#556b2f" stroke-width="2.7" fill="none" stroke-linejoin="round"/><g fill="#556b2f" stroke="#000" stroke-width="0.75"><circle cx="303.5" cy="273.5" r="3.2"/><circle cx="328.5" cy="273.5" r="3.2"/><circle cx="353.5" cy="270.5" r="3.2"/><circle cx="379.5" cy="270.5" r="3.2"/><circle cx="404.5" cy="270.5" r="3.2"/><circle cx="430.5" cy="269.5" r="3.2"/><circle cx="455.5" cy="270.5" r="3.2"/><circle cx="481.5" cy="271.5" r="3.2"/><circle cx="528.5" cy="267.5" r="3.2"/><circle cx="553.5" cy="268.5" r="3.2"/><circle cx="579.5" cy="269.5" r="3.2"/><circle cx="604.5" cy="269.5" r="3.2"/><circle cx="630.5" cy="267.5" r="3.2"/><circle cx="655.5" cy="266.5" r="3.2"/><circle cx="681.5" cy="267.5" r="3.2"/></g><path d="M213.8 269.9 L303.6 269.5 L328.5 271.1 L353.5 268.0 L379.5 268.9 L404.5 268.9 L430.2 267.1 L455.2 267.3 L481.5 268.4 L528.5 264.7 L553.5 266.6 L579.5 267.2 L604.7 268.2 L630.5 265.3 L655.5 264.8 L681.2 264.9" stroke="#4169e1" stroke-width="2.7" fill="none" stroke-linejoin="round"/><g fill="#4169e1" stroke="#000" stroke-width="0.75"><circle cx="303.5" cy="269.5" r="3.2"/><circle cx="328.5" cy="271.5" r="3.2"/><circle cx="353.5" cy="267.5" r="3.2"/><circle cx="379.5" cy="268.5" r="3.2"/><circle cx="404.5" cy="268.5" r="3.2"/><circle cx="430.5" cy="267.5" r="3.2"/><circle cx="455.5" cy="267.5" r="3.2"/><circle cx="481.5" cy="268.5" r="3.2"/><circle cx="528.5" cy="264.5" r="3.2"/><circle cx="553.5" cy="266.5" r="3.2"/><circle cx="579.5" cy="267.5" r="3.2"/><circle cx="604.5" cy="268.5" r="3.2"/><circle cx="630.5" cy="265.5" r="3.2"/><circle cx="655.5" cy="264.5" r="3.2"/><circle cx="681.5" cy="264.5" r="3.2"/></g><path d="M213.8 272.9 L303.6 277.5 L328.5 276.5 L353.5 273.0 L379.5 274.0 L404.5 273.3 L430.2 272.4 L455.2 272.9 L481.5 273.1 L528.5 270.8 L553.5 272.3 L579.5 271.6 L604.7 271.4 L630.5 270.7 L655.5 270.5 L681.2 271.2" stroke="#d2b48c" stroke-width="2.7" fill="none" stroke-linejoin="round"/><g fill="#d2b48c" stroke="#000" stroke-width="0.75"><circle cx="303.5" cy="277.5" r="3.2"/><circle cx="328.5" cy="276.5" r="3.2"/><circle cx="353.5" cy="272.5" r="3.2"/><circle cx="379.5" cy="273.5" r="3.2"/><circle cx="404.5" cy="273.5" r="3.2"/><circle cx="430.5" cy="272.5" r="3.2"/><circle cx="455.5" cy="272.5" r="3.2"/><circle cx="481.5" cy="273.5" r="3.2"/><circle cx="528.5" cy="270.5" r="3.2"/><circle cx="553.5" cy="272.5" r="3.2"/><circle cx="579.5" cy="271.5" r="3.2"/><circle cx="604.5" cy="271.5" r="3.2"/><circle cx="630.5" cy="270.5" r="3.2"/><circle cx="655.5" cy="270.5" r="3.2"/><circle cx="681.5" cy="271.5" r="3.2"/></g><path d="M213.8 273.4 L303.6 278.4 L328.5 276.8 L353.5 273.9 L379.5 275.3 L404.5 274.1 L430.2 273.2 L455.2 274.7 L481.5 274.7 L528.5 272.0 L553.5 272.3 L579.5 272.2 L604.7 272.7 L630.5 271.8 L655.5 270.7 L681.2 271.5" stroke="#dc143c" stroke-width="2.7" fill="none" stroke-linejoin="round"/><g fill="#dc143c" stroke="#000" stroke-width="0.75"><circle cx="303.5" cy="278.5" r="3.2"/><circle cx="328.5" cy="276.5" r="3.2"/><circle cx="353.5" cy="273.5" r="3.2"/><circle cx="379.5" cy="275.5" r="3.2"/><circle cx="404.5" cy="274.5" r="3.2"/><circle cx="430.5" cy="273.5" r="3.2"/><circle cx="455.5" cy="274.5" r="3.2"/><circle cx="481.5" cy="274.5" r="3.2"/><circle cx="528.5" cy="272.5" r="3.2"/><circle cx="553.5" cy="272.5" r="3.2"/><circle cx="579.5" cy="272.5" r="3.2"/><circle cx="604.5" cy="272.5" r="3.2"/><circle cx="630.5" cy="271.5" r="3.2"/><circle cx="655.5" cy="270.5" r="3.2"/><circle cx="681.5" cy="271.5" r="3.2"/></g><path d="M213.8 276.1 L303.6 279.9 L328.5 278.2 L353.5 276.1 L379.5 276.0 L404.5 275.6 L430.2 275.0 L455.2 274.8 L481.5 274.7 L528.5 276.5 L553.5 278.1 L579.5 276.2 L604.7 276.7 L630.5 277.3 L655.5 275.9 L681.2 276.2" stroke="#8b1a1a" stroke-width="2.7" fill="none" stroke-linejoin="round"/><g fill="#8b1a1a" stroke="#000" stroke-width="0.75"><circle cx="303.5" cy="279.5" r="3.2"/><circle cx="328.5" cy="278.5" r="3.2"/><circle cx="353.5" cy="276.5" r="3.2"/><circle cx="379.5" cy="275.5" r="3.2"/><circle cx="404.5" cy="275.5" r="3.2"/><circle cx="430.5" cy="275.5" r="3.2"/><circle cx="455.5" cy="274.5" r="3.2"/><circle cx="481.5" cy="274.5" r="3.2"/><circle cx="528.5" cy="276.5" r="3.2"/><circle cx="553.5" cy="278.5" r="3.2"/><circle cx="579.5" cy="276.5" r="3.2"/><circle cx="604.5" cy="276.5" r="3.2"/><circle cx="630.5" cy="277.5" r="3.2"/><circle cx="655.5" cy="275.5" r="3.2"/><circle cx="681.5" cy="276.5" r="3.2"/></g><path d="M213.8 276.5 L303.6 278.4 L328.5 275.8 L353.5 273.5 L379.5 274.6 L404.5 273.5 L430.2 273.2 L455.2 273.9 L481.5 274.4 L528.5 277.0 L553.5 278.4 L579.5 277.2 L604.7 276.5 L630.5 277.1 L655.5 277.5 L681.2 275.9" stroke="#f0e68c" stroke-width="2.7" fill="none" stroke-linejoin="round"/><g fill="#f0e68c" stroke="#000" stroke-width="0.75"><circle cx="303.5" cy="278.5" r="3.2"/><circle cx="328.5" cy="275.5" r="3.2"/><circle cx="353.5" cy="273.5" r="3.2"/><circle cx="379.5" cy="274.5" r="3.2"/><circle cx="404.5" cy="273.5" r="3.2"/><circle cx="430.5" cy="273.5" r="3.2"/><circle cx="455.5" cy="273.5" r="3.2"/><circle cx="481.5" cy="274.5" r="3.2"/><circle cx="528.5" cy="276.5" r="3.2"/><circle cx="553.5" cy="278.5" r="3.2"/><circle cx="579.5" cy="277.5" r="3.2"/><circle cx="604.5" cy="276.5" r="3.2"/><circle cx="630.5" cy="277.5" r="3.2"/><circle cx="655.5" cy="277.5" r="3.2"/><circle cx="681.5" cy="275.5" r="3.2"/></g><path d="M213.8 276.5 L303.6 283.6 L328.5 282.5 L353.5 277.9 L379.5 278.4 L404.5 277.5 L430.2 276.3 L455.2 281.1 L481.5 276.5 L528.5 275.1 L553.5 276.2 L579.5 275.6 L604.7 275.4 L630.5 275.3 L655.5 275.0 L681.2 274.9" stroke="#6a5acd" stroke-width="2.7" fill="none" stroke-linejoin="round"/><g fill="#6a5acd" stroke="#000" stroke-width="0.75"><circle cx="303.5" cy="283.5" r="3.2"/><circle cx="328.5" cy="282.5" r="3.2"/><circle cx="353.5" cy="277.5" r="3.2"/><circle cx="379.5" cy="278.5" r="3.2"/><circle cx="404.5" cy="277.5" r="3.2"/><circle cx="430.5" cy="276.5" r="3.2"/><circle cx="455.5" cy="281.5" r="3.2"/><circle cx="481.5" cy="276.5" r="3.2"/><circle cx="528.5" cy="275.5" r="3.2"/><circle cx="553.5" cy="276.5" r="3.2"/><circle cx="579.5" cy="275.5" r="3.2"/><circle cx="604.5" cy="275.5" r="3.2"/><circle cx="630.5" cy="275.5" r="3.2"/><circle cx="655.5" cy="275.5" r="3.2"/><circle cx="681.5" cy="274.5" r="3.2"/></g><path d="M213.8 270.8 L303.6 271.8 L328.5 272.1 L353.5 269.6 L379.5 270.3 L404.5 270.1 L430.2 268.3 L455.2 268.9 L481.5 269.7 L528.5 267.5 L553.5 268.2 L579.5 268.4 L604.7 269.3 L630.5 266.7 L655.5 267.2 L681.2 267.0" stroke="#9370db" stroke-width="2.7" fill="none" stroke-linejoin="round"/><g fill="#9370db" stroke="#000" stroke-width="0.75"><circle cx="303.5" cy="271.5" r="3.2"/><circle cx="328.5" cy="272.5" r="3.2"/><circle cx="353.5" cy="269.5" r="3.2"/><circle cx="379.5" cy="270.5" r="3.2"/><circle cx="404.5" cy="270.5" r="3.2"/><circle cx="430.5" cy="268.5" r="3.2"/><circle cx="455.5" cy="268.5" r="3.2"/><circle cx="481.5" cy="269.5" r="3.2"/><circle cx="528.5" cy="267.5" r="3.2"/><circle cx="553.5" cy="268.5" r="3.2"/><circle cx="579.5" cy="268.5" r="3.2"/><circle cx="604.5" cy="269.5" r="3.2"/><circle cx="630.5" cy="266.5" r="3.2"/><circle cx="655.5" cy="267.5" r="3.2"/><circle cx="681.5" cy="266.5" r="3.2"/></g><path d="M213.8 273.1 L303.6 277.6 L328.5 276.3 L353.5 274.3 L379.5 273.7 L404.5 273.6 L430.2 272.8 L455.2 273.5 L481.5 273.9 L528.5 271.0 L553.5 272.0 L579.5 272.3 L604.7 272.6 L630.5 270.8 L655.5 270.9 L681.2 271.1" stroke="#ffe4c4" stroke-width="2.7" fill="none" stroke-linejoin="round"/><g fill="#ffe4c4" stroke="#000" stroke-width="0.75"><circle cx="303.5" cy="277.5" r="3.2"/><circle cx="328.5" cy="276.5" r="3.2"/><circle cx="353.5" cy="274.5" r="3.2"/><circle cx="379.5" cy="273.5" r="3.2"/><circle cx="404.5" cy="273.5" r="3.2"/><circle cx="430.5" cy="272.5" r="3.2"/><circle cx="455.5" cy="273.5" r="3.2"/><circle cx="481.5" cy="273.5" r="3.2"/><circle cx="528.5" cy="270.5" r="3.2"/><circle cx="553.5" cy="271.5" r="3.2"/><circle cx="579.5" cy="272.5" r="3.2"/><circle cx="604.5" cy="272.5" r="3.2"/><circle cx="630.5" cy="270.5" r="3.2"/><circle cx="655.5" cy="270.5" r="3.2"/><circle cx="681.5" cy="271.5" r="3.2"/></g><path d="M213.8 271.9 L303.6 275.1 L328.5 274.2 L353.5 271.6 L379.5 271.8 L404.5 271.8 L430.2 271.2 L455.2 271.5 L481.5 271.5 L528.5 269.1 L553.5 270.0 L579.5 270.5 L604.7 270.4 L630.5 269.2 L655.5 268.2 L681.2 269.3" stroke="#ffb6c1" stroke-width="2.7" fill="none" stroke-linejoin="round"/><g fill="#ffb6c1" stroke="#000" stroke-width="0.75"><circle cx="303.5" cy="275.5" r="3.2"/><circle cx="328.5" cy="274.5" r="3.2"/><circle cx="353.5" cy="271.5" r="3.2"/><circle cx="379.5" cy="271.5" r="3.2"/><circle cx="404.5" cy="271.5" r="3.2"/><circle cx="430.5" cy="271.5" r="3.2"/><circle cx="455.5" cy="271.5" r="3.2"/><circle cx="481.5" cy="271.5" r="3.2"/><circle cx="528.5" cy="269.5" r="3.2"/><circle cx="553.5" cy="269.5" r="3.2"/><circle cx="579.5" cy="270.5" r="3.2"/><circle cx="604.5" cy="270.5" r="3.2"/><circle cx="630.5" cy="269.5" r="3.2"/><circle cx="655.5" cy="268.5" r="3.2"/><circle cx="681.5" cy="269.5" r="3.2"/></g><path d="M213.8 272.5 L303.6 276.8 L328.5 275.2 L353.5 272.9 L379.5 274.0 L404.5 273.2 L430.2 272.4 L455.2 271.7 L481.5 273.0 L528.5 270.5 L553.5 270.9 L579.5 271.6 L604.7 271.6 L630.5 269.8 L655.5 269.9 L681.2 269.7" stroke="#add8e6" stroke-width="2.7" fill="none" stroke-linejoin="round"/><g fill="#add8e6" stroke="#000" stroke-width="0.75"><circle cx="303.5" cy="276.5" r="3.2"/><circle cx="328.5" cy="275.5" r="3.2"/><circle cx="353.5" cy="272.5" r="3.2"/><circle cx="379.5" cy="274.5" r="3.2"/><circle cx="404.5" cy="273.5" r="3.2"/><circle cx="430.5" cy="272.5" r="3.2"/><circle cx="455.5" cy="271.5" r="3.2"/><circle cx="481.5" cy="273.5" r="3.2"/><circle cx="528.5" cy="270.5" r="3.2"/><circle cx="553.5" cy="270.5" r="3.2"/><circle cx="579.5" cy="271.5" r="3.2"/><circle cx="604.5" cy="271.5" r="3.2"/><circle cx="630.5" cy="269.5" r="3.2"/><circle cx="655.5" cy="269.5" r="3.2"/><circle cx="681.5" cy="269.5" r="3.2"/></g><path d="M213.8 271.4 L303.6 273.8 L328.5 273.2 L353.5 271.3 L379.5 271.1 L404.5 271.2 L430.2 269.4 L455.2 269.8 L481.5 271.1 L528.5 268.7 L553.5 269.7 L579.5 268.8 L604.7 270.2 L630.5 268.2 L655.5 267.1 L681.2 268.2" stroke="#90ee90" stroke-width="2.7" fill="none" stroke-linejoin="round"/><g fill="#90ee90" stroke="#000" stroke-width="0.75"><circle cx="303.5" cy="273.5" r="3.2"/><circle cx="328.5" cy="273.5" r="3.2"/><circle cx="353.5" cy="271.5" r="3.2"/><circle cx="379.5" cy="271.5" r="3.2"/><circle cx="404.5" cy="271.5" r="3.2"/><circle cx="430.5" cy="269.5" r="3.2"/><circle cx="455.5" cy="269.5" r="3.2"/><circle cx="481.5" cy="271.5" r="3.2"/><circle cx="528.5" cy="268.5" r="3.2"/><circle cx="553.5" cy="269.5" r="3.2"/><circle cx="579.5" cy="268.5" r="3.2"/><circle cx="604.5" cy="270.5" r="3.2"/><circle cx="630.5" cy="268.5" r="3.2"/><circle cx="655.5" cy="267.5" r="3.2"/><circle cx="681.5" cy="268.5" r="3.2"/></g><path d="M213.8 270.2 L303.6 271.1 L328.5 271.0 L353.5 268.3 L379.5 269.1 L404.5 269.2 L430.2 268.0 L455.2 268.4 L481.5 269.2 L528.5 266.2 L553.5 266.8 L579.5 267.4 L604.7 268.6 L630.5 265.7 L655.5 264.9 L681.2 266.2" stroke="#a8d0e0" stroke-width="2.7" fill="none" stroke-linejoin="round"/><g fill="#a8d0e0" stroke="#000" stroke-width="0.75"><circle cx="303.5" cy="271.5" r="3.2"/><circle cx="328.5" cy="271.5" r="3.2"/><circle cx="353.5" cy="268.5" r="3.2"/><circle cx="379.5" cy="269.5" r="3.2"/><circle cx="404.5" cy="269.5" r="3.2"/><circle cx="430.5" cy="268.5" r="3.2"/><circle cx="455.5" cy="268.5" r="3.2"/><circle cx="481.5" cy="269.5" r="3.2"/><circle cx="528.5" cy="266.5" r="3.2"/><circle cx="553.5" cy="266.5" r="3.2"/><circle cx="579.5" cy="267.5" r="3.2"/><circle cx="604.5" cy="268.5" r="3.2"/><circle cx="630.5" cy="265.5" r="3.2"/><circle cx="655.5" cy="264.5" r="3.2"/><circle cx="681.5" cy="266.5" r="3.2"/></g><path d="M213.8 272.2 L303.6 275.5 L328.5 274.7 L353.5 272.0 L379.5 272.9 L404.5 272.1 L430.2 271.2 L455.2 272.2 L481.5 272.5 L528.5 270.3 L553.5 270.1 L579.5 270.4 L604.7 271.2 L630.5 269.6 L655.5 269.0 L681.2 268.9" stroke="#32cd32" stroke-width="2.7" fill="none" stroke-linejoin="round"/><g fill="#32cd32" stroke="#000" stroke-width="0.75"><circle cx="303.5" cy="275.5" r="3.2"/><circle cx="328.5" cy="274.5" r="3.2"/><circle cx="353.5" cy="271.5" r="3.2"/><circle cx="379.5" cy="272.5" r="3.2"/><circle cx="404.5" cy="272.5" r="3.2"/><circle cx="430.5" cy="271.5" r="3.2"/><circle cx="455.5" cy="272.5" r="3.2"/><circle cx="481.5" cy="272.5" r="3.2"/><circle cx="528.5" cy="270.5" r="3.2"/><circle cx="553.5" cy="270.5" r="3.2"/><circle cx="579.5" cy="270.5" r="3.2"/><circle cx="604.5" cy="271.5" r="3.2"/><circle cx="630.5" cy="269.5" r="3.2"/><circle cx="655.5" cy="268.5" r="3.2"/><circle cx="681.5" cy="268.5" r="3.2"/></g><path d="M213.8 268.9 L303.6 267.8 L328.5 269.7 L353.5 265.5 L379.5 267.6 L404.5 266.4 L430.2 264.7 L455.2 265.8 L481.5 267.6 L528.5 264.2 L553.5 264.8 L579.5 265.8 L604.7 266.0 L630.5 263.0 L655.5 263.3 L681.2 263.9" stroke="#ff69b4" stroke-width="2.7" fill="none" stroke-linejoin="round"/><g fill="#ff69b4" stroke="#000" stroke-width="0.75"><circle cx="303.5" cy="267.5" r="3.2"/><circle cx="328.5" cy="269.5" r="3.2"/><circle cx="353.5" cy="265.5" r="3.2"/><circle cx="379.5" cy="267.5" r="3.2"/><circle cx="404.5" cy="266.5" r="3.2"/><circle cx="430.5" cy="264.5" r="3.2"/><circle cx="455.5" cy="265.5" r="3.2"/><circle cx="481.5" cy="267.5" r="3.2"/><circle cx="528.5" cy="264.5" r="3.2"/><circle cx="553.5" cy="264.5" r="3.2"/><circle cx="579.5" cy="265.5" r="3.2"/><circle cx="604.5" cy="266.5" r="3.2"/><circle cx="630.5" cy="263.5" r="3.2"/><circle cx="655.5" cy="263.5" r="3.2"/><circle cx="681.5" cy="263.5" r="3.2"/></g><path d="M213.8 269.3 L303.6 268.9 L328.5 270.7 L353.5 266.7 L379.5 268.2 L404.5 266.7 L430.2 265.4 L455.2 265.5 L481.5 268.2 L528.5 264.1 L553.5 265.1 L579.5 266.6 L604.7 267.5 L630.5 263.6 L655.5 263.3 L681.2 264.1" stroke="#00fa9a" stroke-width="2.7" fill="none" stroke-linejoin="round"/><g fill="#00fa9a" stroke="#000" stroke-width="0.75"><circle cx="303.5" cy="268.5" r="3.2"/><circle cx="328.5" cy="270.5" r="3.2"/><circle cx="353.5" cy="266.5" r="3.2"/><circle cx="379.5" cy="268.5" r="3.2"/><circle cx="404.5" cy="266.5" r="3.2"/><circle cx="430.5" cy="265.5" r="3.2"/><circle cx="455.5" cy="265.5" r="3.2"/><circle cx="481.5" cy="268.5" r="3.2"/><circle cx="528.5" cy="264.5" r="3.2"/><circle cx="553.5" cy="265.5" r="3.2"/><circle cx="579.5" cy="266.5" r="3.2"/><circle cx="604.5" cy="267.5" r="3.2"/><circle cx="630.5" cy="263.5" r="3.2"/><circle cx="655.5" cy="263.5" r="3.2"/><circle cx="681.5" cy="264.5" r="3.2"/></g><path d="M213.8 274.7 L303.6 281.5 L328.5 278.1 L353.5 277.3 L379.5 277.4 L404.5 276.9 L430.2 275.3 L455.2 276.3 L481.5 275.8 L528.5 274.9 L553.5 274.7 L579.5 274.0 L604.7 274.7 L630.5 274.1 L655.5 273.0 L681.2 273.6" stroke="#48d1cc" stroke-width="2.7" fill="none" stroke-linejoin="round"/><g fill="#48d1cc" stroke="#000" stroke-width="0.75"><circle cx="303.5" cy="281.5" r="3.2"/><circle cx="328.5" cy="278.5" r="3.2"/><circle cx="353.5" cy="277.5" r="3.2"/><circle cx="379.5" cy="277.5" r="3.2"/><circle cx="404.5" cy="276.5" r="3.2"/><circle cx="430.5" cy="275.5" r="3.2"/><circle cx="455.5" cy="276.5" r="3.2"/><circle cx="481.5" cy="275.5" r="3.2"/><circle cx="528.5" cy="274.5" r="3.2"/><circle cx="553.5" cy="274.5" r="3.2"/><circle cx="579.5" cy="274.5" r="3.2"/><circle cx="604.5" cy="274.5" r="3.2"/><circle cx="630.5" cy="274.5" r="3.2"/><circle cx="655.5" cy="272.5" r="3.2"/><circle cx="681.5" cy="273.5" r="3.2"/></g><path d="M213.8 275.6 L303.6 287.2 L328.5 281.3 L353.5 279.9 L379.5 280.6 L404.5 280.4 L430.2 279.5 L455.2 280.6 L481.5 278.5 L528.5 275.9 L553.5 276.4 L579.5 276.0 L604.7 276.1 L630.5 276.6 L655.5 275.2 L681.2 274.6" stroke="#00fa9a" stroke-width="2.7" fill="none" stroke-linejoin="round"/><g fill="#00fa9a" stroke="#000" stroke-width="0.75"><circle cx="303.5" cy="287.5" r="3.2"/><circle cx="328.5" cy="281.5" r="3.2"/><circle cx="353.5" cy="279.5" r="3.2"/><circle cx="379.5" cy="280.5" r="3.2"/><circle cx="404.5" cy="280.5" r="3.2"/><circle cx="430.5" cy="279.5" r="3.2"/><circle cx="455.5" cy="280.5" r="3.2"/><circle cx="481.5" cy="278.5" r="3.2"/><circle cx="528.5" cy="275.5" r="3.2"/><circle cx="553.5" cy="276.5" r="3.2"/><circle cx="579.5" cy="276.5" r="3.2"/><circle cx="604.5" cy="276.5" r="3.2"/><circle cx="630.5" cy="276.5" r="3.2"/><circle cx="655.5" cy="275.5" r="3.2"/><circle cx="681.5" cy="274.5" r="3.2"/></g><path d="M213.8 273.9 L303.6 279.8 L328.5 276.9 L353.5 274.6 L379.5 275.5 L404.5 276.0 L430.2 274.9 L455.2 275.3 L481.5 274.6 L528.5 273.2 L553.5 273.5 L579.5 273.4 L604.7 273.0 L630.5 272.2 L655.5 272.1 L681.2 272.7" stroke="#40e0d0" stroke-width="2.7" fill="none" stroke-linejoin="round"/><g fill="#40e0d0" stroke="#000" stroke-width="0.75"><circle cx="303.5" cy="279.5" r="3.2"/><circle cx="328.5" cy="276.5" r="3.2"/><circle cx="353.5" cy="274.5" r="3.2"/><circle cx="379.5" cy="275.5" r="3.2"/><circle cx="404.5" cy="275.5" r="3.2"/><circle cx="430.5" cy="274.5" r="3.2"/><circle cx="455.5" cy="275.5" r="3.2"/><circle cx="481.5" cy="274.5" r="3.2"/><circle cx="528.5" cy="273.5" r="3.2"/><circle cx="553.5" cy="273.5" r="3.2"/><circle cx="579.5" cy="273.5" r="3.2"/><circle cx="604.5" cy="272.5" r="3.2"/><circle cx="630.5" cy="272.5" r="3.2"/><circle cx="655.5" cy="272.5" r="3.2"/><circle cx="681.5" cy="272.5" r="3.2"/></g><path d="M213.8 268.0 L303.6 263.7 L328.5 267.2 L353.5 263.6 L379.5 265.2 L404.5 264.1 L430.2 262.6 L455.2 262.5 L481.5 265.2 L528.5 261.1 L553.5 262.1 L579.5 263.2 L604.7 264.8 L630.5 261.1 L655.5 260.6 L681.2 261.7" stroke="#d02090" stroke-width="2.7" fill="none" stroke-linejoin="round"/><g fill="#d02090" stroke="#000" stroke-width="0.75"><circle cx="303.5" cy="263.5" r="3.2"/><circle cx="328.5" cy="267.5" r="3.2"/><circle cx="353.5" cy="263.5" r="3.2"/><circle cx="379.5" cy="265.5" r="3.2"/><circle cx="404.5" cy="264.5" r="3.2"/><circle cx="430.5" cy="262.5" r="3.2"/><circle cx="455.5" cy="262.5" r="3.2"/><circle cx="481.5" cy="265.5" r="3.2"/><circle cx="528.5" cy="261.5" r="3.2"/><circle cx="553.5" cy="262.5" r="3.2"/><circle cx="579.5" cy="263.5" r="3.2"/><circle cx="604.5" cy="264.5" r="3.2"/><circle cx="630.5" cy="261.5" r="3.2"/><circle cx="655.5" cy="260.5" r="3.2"/><circle cx="681.5" cy="261.5" r="3.2"/></g><path d="M213.8 268.0 L303.6 265.0 L328.5 268.0 L353.5 264.5 L379.5 266.0 L404.5 265.0 L430.2 263.5 L455.2 263.5 L481.5 266.0 L528.5 262.0 L553.5 263.0 L579.5 264.0 L604.7 265.5 L630.5 262.0 L655.5 261.5 L681.2 262.5" stroke="#c71585" stroke-width="2.7" fill="none" stroke-linejoin="round"/><g fill="#c71585" stroke="#000" stroke-width="0.75"><circle cx="303.5" cy="265.5" r="3.2"/><circle cx="328.5" cy="268.5" r="3.2"/><circle cx="353.5" cy="264.5" r="3.2"/><circle cx="379.5" cy="266.5" r="3.2"/><circle cx="404.5" cy="265.5" r="3.2"/><circle cx="430.5" cy="263.5" r="3.2"/><circle cx="455.5" cy="263.5" r="3.2"/><circle cx="481.5" cy="266.5" r="3.2"/><circle cx="528.5" cy="262.5" r="3.2"/><circle cx="553.5" cy="263.5" r="3.2"/><circle cx="579.5" cy="264.5" r="3.2"/><circle cx="604.5" cy="265.5" r="3.2"/><circle cx="630.5" cy="262.5" r="3.2"/><circle cx="655.5" cy="261.5" r="3.2"/><circle cx="681.5" cy="262.5" r="3.2"/></g><path d="M129.2 270.0 L131.2 269.9 L133.1 269.9 L135.1 270.1 L137.0 270.2 L139.0 270.2 L141.0 269.9 L142.9 269.8 L144.9 270.0 L146.8 269.9 L148.8 269.0 L150.8 268.3 L152.7 268.6 L154.7 268.7 L156.6 270.8 L158.6 271.8 L160.6 271.9 L162.5 272.1 L164.5 271.4 L166.4 271.1" stroke="#f9ca90" stroke-width="2.7" fill="none"/><g fill="#f9ca90" stroke="#000" stroke-width="0.7"><circle cx="129.5" cy="270.5" r="3.2"/><circle cx="131.5" cy="269.5" r="3.2"/><circle cx="133.5" cy="269.5" r="3.2"/><circle cx="135.5" cy="270.5" r="3.2"/><circle cx="137.5" cy="270.5" r="3.2"/><circle cx="139.5" cy="270.5" r="3.2"/><circle cx="140.5" cy="269.5" r="3.2"/><circle cx="142.5" cy="269.5" r="3.2"/><circle cx="144.5" cy="270.5" r="3.2"/><circle cx="146.5" cy="269.5" r="3.2"/><circle cx="148.5" cy="268.5" r="3.2"/><circle cx="150.5" cy="268.5" r="3.2"/><circle cx="152.5" cy="268.5" r="3.2"/><circle cx="154.5" cy="268.5" r="3.2"/><circle cx="156.5" cy="270.5" r="3.2"/><circle cx="158.5" cy="271.5" r="3.2"/><circle cx="160.5" cy="271.5" r="3.2"/><circle cx="162.5" cy="272.5" r="3.2"/><circle cx="164.5" cy="271.5" r="3.2"/><circle cx="166.5" cy="271.5" r="3.2"/></g><path d="M172.6 268.0 L174.5 268.0 L176.4 268.2 L178.4 268.2 L180.3 268.1 L182.2 268.1 L184.1 268.5 L186.0 269.4 L188.0 270.7 L189.9 271.6 L191.8 272.5 L193.7 273.2 L195.6 273.8 L197.6 273.6 L199.5 272.6 L201.4 271.1 L203.3 270.3 L205.2 269.8 L207.2 269.6 L209.1 269.6 L211.0 268.8" stroke="#c71585" stroke-width="2.7" fill="none"/><g fill="#c71585" stroke="#000" stroke-width="0.7"><circle cx="172.5" cy="268.5" r="3.2"/><circle cx="174.5" cy="268.5" r="3.2"/><circle cx="176.5" cy="268.5" r="3.2"/><circle cx="178.5" cy="268.5" r="3.2"/><circle cx="180.5" cy="268.5" r="3.2"/><circle cx="182.5" cy="268.5" r="3.2"/><circle cx="184.5" cy="268.5" r="3.2"/><circle cx="186.5" cy="269.5" r="3.2"/><circle cx="187.5" cy="270.5" r="3.2"/><circle cx="189.5" cy="271.5" r="3.2"/><circle cx="191.5" cy="272.5" r="3.2"/><circle cx="193.5" cy="273.5" r="3.2"/><circle cx="195.5" cy="273.5" r="3.2"/><circle cx="197.5" cy="273.5" r="3.2"/><circle cx="199.5" cy="272.5" r="3.2"/><circle cx="201.5" cy="271.5" r="3.2"/><circle cx="203.5" cy="270.5" r="3.2"/><circle cx="205.5" cy="269.5" r="3.2"/><circle cx="207.5" cy="269.5" r="3.2"/><circle cx="209.5" cy="269.5" r="3.2"/><circle cx="210.5" cy="268.5" r="3.2"/></g><path d="M212.9 268.5" stroke="#c71585" stroke-width="2.7" fill="none"/><g fill="#c71585" stroke="#000" stroke-width="0.75"><circle cx="212.5" cy="268.5" r="3.2"/></g>
</g>
<rect x="100.5" y="60.5" width="620" height="420" fill="none" stroke="#000" stroke-width="1.4"/>
<path d="M221.5 480.5v-6.1M221.5 60.5v6.1M343.5 480.5v-6.1M343.5 60.5v6.1M465.5 480.5v-6.1M465.5 60.5v6.1M587.5 480.5v-6.1M587.5 60.5v6.1M709.5 480.5v-6.1M709.5 60.5v6.1M100.5 461.5h6.1M720.5 461.5h-6.1M100.5 365.5h6.1M720.5 365.5h-6.1M100.5 270.5h6.1M720.5 270.5h-6.1M100.5 175.5h6.1M720.5 175.5h-6.1M100.5 79.5h6.1M720.5 79.5h-6.1" stroke="#000" stroke-width="0.8" fill="none"/>
<text x="221.0" y="493" font-size="11.11" text-anchor="middle">09:36:00.0</text>
<text x="343.0" y="493" font-size="11.11" text-anchor="middle">10:12:00.0</text>
<text x="465.0" y="493" font-size="11.11" text-anchor="middle">10:48:00.0</text>
<text x="587.0" y="493" font-size="11.11" text-anchor="middle">11:24:00.0</text>
<text x="709.0" y="493" font-size="11.11" text-anchor="middle">12:00:00.0</text>
<text x="93" y="464.5" font-size="11.11" text-anchor="end">0.0</text>
<text x="93" y="369.1" font-size="11.11" text-anchor="end">0.5</text>
<text x="93" y="273.6" font-size="11.11" text-anchor="end">1.0</text>
<text x="93" y="178.1" font-size="11.11" text-anchor="end">1.5</text>
<text x="93" y="82.7" font-size="11.11" text-anchor="end">2.0</text>
<text x="409.5" y="510.5" font-size="12.5" text-anchor="middle">Time</text>
<text transform="translate(63.8 270) rotate(-90)" font-size="12.5" text-anchor="middle">Gain Amplitude</text>
<text x="35" y="53" font-size="13.89">G table: 15A-372.sb30143638.eb30514548.57111.371927071756.ms.finalampgaincal.g</text>
<text x="674" y="53" font-size="13.89">Antenna='ea04'</text>
</svg></body></html>
